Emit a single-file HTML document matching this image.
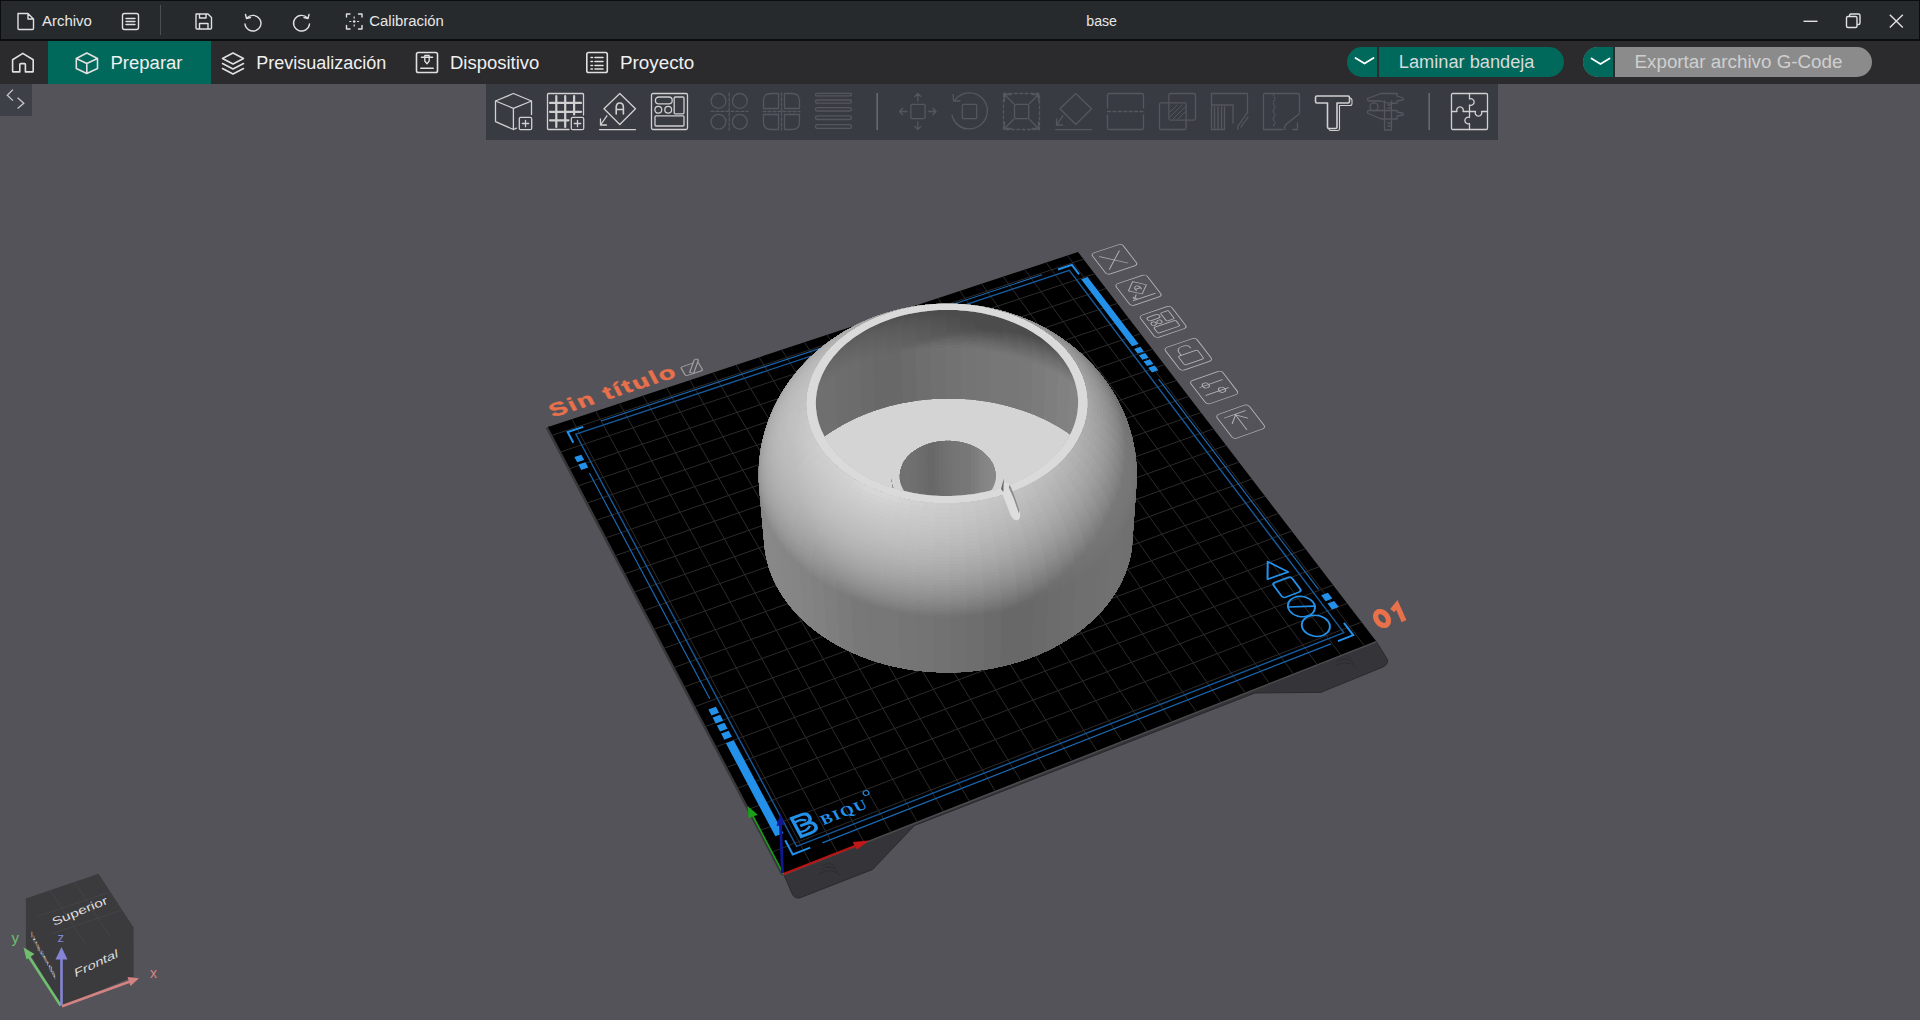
<!DOCTYPE html><html><head><meta charset="utf-8"><style>
html,body{margin:0;padding:0;width:1920px;height:1020px;overflow:hidden;background:#545359;font-family:"Liberation Sans", sans-serif;}
.abs{position:absolute;}
.t{position:absolute;white-space:nowrap;color:#e8e8e8;line-height:1;}
svg text{font-family:"Liberation Sans", sans-serif;}
</style></head><body>
<div class="abs" style="left:0;top:0;width:1920px;height:40px;background:#262a2d;"></div>
<div class="abs" style="left:0;top:39px;width:1920px;height:2px;background:#0c0d0e;"></div>
<div class="abs" style="left:0;top:0;width:1920px;height:1px;background:#0c0d0e;"></div>
<div class="abs" style="left:0;top:0;width:1px;height:40px;background:#0c0d0e;"></div>
<div class="abs" style="left:1919px;top:0;width:1px;height:40px;background:#0c0d0e;"></div>
<div class="abs" style="left:0;top:41px;width:1920px;height:43px;background:#2b2b2d;"></div>
<div class="abs" style="left:48px;top:41px;width:163px;height:43px;background:#00695c;"></div>
<div class="abs" style="left:0;top:84px;width:32px;height:32px;background:#3d4047;"></div>
<div class="abs" style="left:486px;top:84px;width:1012px;height:56px;background:#393b43;"></div>

<div class="abs" style="left:1347px;top:47px;width:217px;height:30px;border-radius:15px;background:#00695c;"></div>
<div class="abs" style="left:1377px;top:47px;width:2px;height:30px;background:#2b2b2d;"></div>
<div class="abs" style="left:1583px;top:47px;width:289px;height:30px;border-radius:15px;background:#8b8b8c;"></div>
<div class="abs" style="left:1583px;top:47px;width:31px;height:30px;border-radius:15px 0 0 15px;background:#00695c;"></div>
<div class="abs" style="left:1613px;top:47px;width:2px;height:30px;background:#2b2b2d;"></div>
<svg class="abs" style="left:0;top:0" width="1920" height="1020" viewBox="0 0 1920 1020">
<text x="42" y="26.3" font-size="15.5" fill="#e6e6e6" textLength="49.8" lengthAdjust="spacingAndGlyphs">Archivo</text>
<text x="369.3" y="26.3" font-size="15.5" fill="#e6e6e6" textLength="74.5" lengthAdjust="spacingAndGlyphs">Calibración</text>
<text x="1086.3" y="26.3" font-size="15.5" fill="#e6e6e6" textLength="30.7" lengthAdjust="spacingAndGlyphs">base</text>
<text x="110.5" y="68.8" font-size="18" fill="#f0f0f0" textLength="72.0" lengthAdjust="spacingAndGlyphs">Preparar</text>
<text x="256.3" y="68.8" font-size="18" fill="#f0f0f0" textLength="130.0" lengthAdjust="spacingAndGlyphs">Previsualización</text>
<text x="450" y="68.8" font-size="18" fill="#f0f0f0" textLength="89.3" lengthAdjust="spacingAndGlyphs">Dispositivo</text>
<text x="620" y="68.8" font-size="18" fill="#f0f0f0" textLength="74.3" lengthAdjust="spacingAndGlyphs">Proyecto</text>
<text x="1398.8" y="68.2" font-size="18" fill="#d5dbdb" textLength="135.7" lengthAdjust="spacingAndGlyphs">Laminar bandeja</text>
<text x="1634.5" y="67.8" font-size="18" fill="#cfcfcf" textLength="208.0" lengthAdjust="spacingAndGlyphs">Exportar archivo G-Code</text>
<g fill="none" stroke="#e0e0e0" stroke-width="1.4" stroke-linejoin="round" stroke-linecap="round">
<path d="M18,13.5 L28,13.5 L33.5,19 L33.5,28.5 Q33.5,29.5 32.5,29.5 L19,29.5 Q18,29.5 18,28.5 Z M28,13.5 L28,19 L33.5,19"/>
<rect x="122.5" y="13.5" width="16" height="16" rx="2"/><path d="M126,18.5 H135 M126,21.5 H135 M126,24.5 H135"/>
<path d="M196,14 H208 L211.5,17.5 V28 Q211.5,29 210.5,29 H197 Q196,29 196,28 V15 Q196,14 197,14 Z M199.5,14 V18 H206 V14 M199.5,29 V23.5 H208 V29"/>
<path d="M247,18 A8,7.8 0 1 1 245,24" /><path d="M245.5,14.5 L246.5,18.5 L250.5,17.5"/>
<path d="M307.5,18 A8,7.8 0 1 0 309.5,24" /><path d="M309,14.5 L308,18.5 L304,17.5"/>
<path d="M346.5,17 V14 H350 M358.5,14 H362 V17 M362,25.5 V29 H358.5 M350,29 H346.5 V25.5"/>
</g>
<circle cx="354.2" cy="21.5" r="1.3" fill="#e0e0e0"/><path d="M354.2,16.5 V18.5 M354.2,24.5 V26.5 M349.3,21.5 H351.3 M357.1,21.5 H359.1" stroke="#e0e0e0" stroke-width="1.2"/>
<rect x="160" y="5" width="1" height="30" fill="#4a4e52"/>
<g fill="none" stroke="#e0e0e0" stroke-width="1.4">
<path d="M1803.5,21.3 H1817.5"/>
<rect x="1846.5" y="16.5" width="10.5" height="11" rx="1.5"/><path d="M1849.5,16.5 V15.5 Q1849.5,14 1851,14 H1858.5 Q1860,14 1860,15.5 V23 Q1860,24.5 1858.5,24.5 H1857"/>
<path d="M1889.8,14.8 L1902.8,27.5 M1902.8,14.8 L1889.8,27.5"/>
</g>
<g fill="none" stroke="#e0e0e0" stroke-width="1.6" stroke-linejoin="round" stroke-linecap="round">
<path d="M12.6,59.8 L22.8,53.4 L33.2,59.8 V71.2 Q33.2,71.9 32.5,71.9 H25.4 V64.5 Q25.4,63.6 24.5,63.6 H20.7 Q19.8,63.6 19.8,64.5 V71.9 H13.3 Q12.6,71.9 12.6,71.2 Z"/>
<path d="M86.8,53 L97.5,58.5 V68.5 L86.8,73.5 L76.3,68.5 V58.5 Z M76.3,58.5 L86.8,63.5 L97.5,58.5 M86.8,63.5 V73.5"/>
<path d="M233,53 L243.5,58.5 L233,64 L222.5,58.5 Z M222.5,63.5 L233,69 L243.5,63.5 M222.5,68.5 L233,74 L243.5,68.5"/>
<rect x="416.5" y="52.5" width="21" height="20" rx="1.8"/><path d="M420.8,68.2 H433.2"/><path d="M421.5,57.2 H432.5"/><path d="M424.8,55.5 H429.2 V61 L427,63.8 L424.8,61 Z" stroke-width="1.3"/>
<rect x="586.8" y="52.5" width="20.5" height="20" rx="1.8"/><path d="M591,57.5 H592.5 M595,57.5 H603 M591,61.5 H592.5 M595,61.5 H603 M591,65.5 H592.5 M595,65.5 H603 M591,69 H592.5 M595,69 H603"/>
</g>
<path d="M1355.5,58 L1364.5,63.5 L1373.5,58" fill="none" stroke="#ffffff" stroke-width="1.8" stroke-linecap="round" stroke-linejoin="round"/>
<path d="M1591.5,58.5 L1600.5,64 L1609.5,58.5" fill="none" stroke="#ffffff" stroke-width="1.8" stroke-linecap="round" stroke-linejoin="round"/>
<path d="M12.9,89.6 L7.3,95.2 L12.9,100.6 M17.6,97.8 L23.8,103.3 L17.6,108.6" fill="none" stroke="#c8c8c8" stroke-width="1.3"/>
<path d="M548,427 L551,433 L783.5,874 L792.5,894.5 Q795,899 800,897.8 L872.5,869.5 L914.5,825.5 L1255,693 L1321,692.3 L1383,667 Q1390,663 1386.5,658 L1376,641 Z" fill="#353438" stroke="#2a2a2d" stroke-width="1"/>
<g fill="none" stroke="#2b2b2e" stroke-width="0.9"><path d="M1338,658 Q1346,652 1352,660 M1336,662 Q1346,655 1354,664 M1335,666 Q1346,659 1356,667 M1342,660 Q1346,657 1349,661"/><path d="M822,866 Q830,860 836,868 M820,870 Q830,863 838,872 M819,874 Q830,867 840,875 M826,868 Q830,865 833,869"/></g>
<path d="M548.00,427.00 L783.50,874.00" fill="none" stroke="#38383b" stroke-width="5"/>
<path d="M783.50,874.00 L1376.00,641.00" fill="none" stroke="#4b4b4f" stroke-width="3"/>
<path d="M783.50,874.00 L1376.00,641.00 L1078.00,252.00 L548.00,427.00 Z" fill="#000"/>
<path d="M810.56,863.36 L571.97,419.08 M771.94,852.07 L1361.51,622.09 M837.44,852.79 L595.82,411.21 M760.54,830.43 L1347.21,603.42 M864.15,842.29 L619.52,403.38 M749.30,809.08 L1333.09,584.98 M890.68,831.85 L643.10,395.60 M738.20,788.02 L1319.14,566.77 M917.05,821.48 L666.55,387.86 M727.25,767.24 L1305.36,548.79 M943.25,811.18 L689.86,380.16 M716.45,746.73 L1291.75,531.03 M969.28,800.94 L713.05,372.50 M705.78,726.49 L1278.31,513.48 M995.14,790.77 L736.11,364.89 M695.26,706.51 L1265.03,496.14 M1020.84,780.67 L759.04,357.32 M684.87,686.79 L1251.91,479.02 M1046.38,770.62 L781.85,349.78 M674.61,667.32 L1238.95,462.10 M1071.76,760.64 L804.54,342.29 M664.49,648.10 L1226.14,445.38 M1096.98,750.73 L827.10,334.85 M654.49,629.12 L1213.48,428.85 M1122.04,740.87 L849.54,327.44 M644.62,610.39 L1200.97,412.53 M1146.94,731.08 L871.85,320.07 M634.87,591.88 L1188.61,396.39 M1171.69,721.35 L894.05,312.74 M625.24,573.61 L1176.39,380.44 M1196.28,711.67 L916.13,305.45 M615.73,555.56 L1164.32,364.68 M1220.73,702.06 L938.09,298.20 M606.34,537.74 L1152.38,349.09 M1245.02,692.51 L959.93,290.99 M597.07,520.13 L1140.58,333.68 M1269.16,683.01 L981.65,283.81 M587.90,502.74 L1128.91,318.45 M1293.16,673.58 L1003.26,276.68 M578.85,485.55 L1117.37,303.39 M1317.01,664.20 L1024.76,269.58 M569.90,468.57 L1105.96,288.50 M1340.71,654.88 L1046.14,262.52 M561.06,451.79 L1094.69,273.78 M1364.27,645.61 L1067.41,255.50 M552.33,435.22 L1083.53,259.22" stroke="#2b2b2b" stroke-width="1" fill="none"/>
<path d="M796.57,846.39 L1343.80,632.68 L1069.33,270.30 L575.85,434.20 Z" fill="none" stroke="#165a9b" stroke-width="1.4"/>
<path d="M822.29,842.90 L1330.92,643.86 M601.15,420.97 L1042.00,274.81 M709.78,698.78 L589.43,472.96 M1318.50,589.40 L1158.63,379.03" fill="none" stroke="#1a6cb8" stroke-width="1.15"/>
<path d="M810.23,847.62 L792.75,854.46 L785.23,840.34 M1337.98,641.09 L1353.25,635.12 L1343.92,622.85 M1079.10,274.38 L1071.89,264.89 L1058.04,269.49 M573.36,442.81 L567.64,432.08 L583.23,426.91" fill="none" stroke="#2391ea" stroke-width="2"/>
<path d="M775.33,836.37 L783.38,833.24 L733.76,740.24 L725.90,743.18 Z M1132.11,346.30 L1138.64,344.06 L1087.57,277.07 L1081.17,279.21 Z" fill="#2391ea"/>
<path d="M724.33,739.63 L731.92,736.79 L728.69,730.73 L721.11,733.56 Z M1137.65,353.59 L1143.97,351.41 L1140.43,346.76 L1134.11,348.94 Z M720.04,731.54 L727.61,728.71 L724.39,722.68 L716.83,725.50 Z M1142.38,359.82 L1148.71,357.63 L1145.15,352.96 L1138.83,355.15 Z M715.76,723.49 L723.32,720.68 L720.12,714.68 L712.58,717.48 Z M1147.14,366.09 L1153.48,363.88 L1149.90,359.19 L1143.57,361.39 Z M711.52,715.49 L719.06,712.69 L715.88,706.72 L708.34,709.51 Z M1151.91,372.38 L1158.27,370.16 L1154.67,365.45 L1148.33,367.66 Z M581.22,469.93 L588.27,467.56 L585.40,462.18 L578.36,464.54 Z M1325.66,601.19 L1332.39,598.59 L1327.89,592.68 L1321.16,595.27 Z M577.20,462.35 L584.23,459.99 L581.37,454.64 L574.35,456.99 Z M1332.00,609.55 L1338.76,606.93 L1334.23,600.99 L1327.49,603.60 Z" fill="#2391ea"/>
<g transform="matrix(2.3260,-0.8883,1.3758,1.8350,1286.96,587.27)" fill="none" stroke="#2391ea" stroke-width="0.75" stroke-linejoin="round">
<path d="M0,-14 L4.2,-6.3 L-4.5,-6.5 Z"/>
<rect x="-4" y="-4" width="8" height="8" rx="1.2"/>
<ellipse cx="0" cy="10.5" rx="5" ry="5"/><path d="M-4.4,8.6 L4.4,12.4"/>
<ellipse cx="0" cy="21" rx="5.2" ry="5.2"/>
</g>
<g transform="matrix(2.6668,-1.0354,1.1592,2.1415,803.36,824.71)" fill="none" stroke="#2391ea" stroke-width="1.2">
<path d="M-2.6,-4.2 H1 Q3.2,-4.2 3.2,-2 Q3.2,0 1,0 Q3.6,0 3.6,2.2 Q3.6,4.3 1,4.3 H-2.6 Z M-1.2,0 H1.2"/><path d="M-2.6,-2 Q0,-3 1.6,-1.2 M-2.6,2.2 Q0,3.2 1.8,1.4" stroke-width="0.9"/>
</g>
<g transform="matrix(2.6608,-1.0357,1.1730,2.1422,823.60,825.14)"><text x="0" y="0" font-size="6" font-weight="bold" fill="#2391ea" textLength="16.8" style="font-family:&quot;Liberation Serif&quot;,serif">BIQU</text><circle cx="18.6" cy="-6" r="1" fill="none" stroke="#2391ea" stroke-width="0.4"/></g>
<path d="M783.50,874.00 L857.49,844.90" stroke="#b81414" stroke-width="2.2"/>
<path d="M783.50,874.00 L752.10,814.39" stroke="#17a017" stroke-width="1.6"/>
<path d="M782.5,873 L780.4,822" stroke="#101890" stroke-width="2.8"/>
<path d="M780.5,813 L776.5,826 L784.5,825 Z" fill="#101890"/>
<path d="M868.94,840.40 L852.66,842.05 L856.99,849.87 Z" fill="#c01818"/>
<path d="M747.62,805.90 L757.76,814.77 L748.67,818.27 Z" fill="#18a018"/>
<clipPath id="silc"><path d="M766.9,562.1L765.8,557.4L764.9,552.6L764.2,547.8L763.8,543.0L758.7,486.6L758.6,484.8L758.3,479.9L758.3,478.1L758.3,476.3L758.3,471.5L758.3,469.7L758.6,464.9L758.7,463.0L758.9,461.2L759.3,456.5L759.6,454.6L760.3,449.9L760.5,448.1L760.9,446.3L761.8,441.6L762.2,439.8L763.4,435.2L763.8,433.4L765.2,428.8L765.7,427.1L766.3,425.3L767.9,420.8L768.5,419.1L770.3,414.6L771.0,412.9L772.9,408.6L773.7,406.9L774.5,405.3L776.7,401.0L777.5,399.4L779.9,395.2L780.8,393.6L783.3,389.5L784.3,388.0L786.9,384.0L788.0,382.5L790.8,378.6L791.9,377.2L794.9,373.4L796.0,372.0L799.1,368.3L800.3,367.0L803.6,363.4L804.8,362.1L808.2,358.7L809.4,357.5L813.0,354.1L814.3,353.0L817.9,349.8L819.2,348.7L823.0,345.6L826.9,342.6L828.2,341.7L832.1,338.8L833.5,337.9L837.5,335.2L841.7,332.6L843.0,331.8L847.2,329.3L848.5,328.6L852.8,326.3L857.2,324.0L858.5,323.4L862.9,321.3L867.4,319.4L872.0,317.5L873.1,317.0L877.8,315.3L882.5,313.7L883.5,313.4L888.2,311.9L892.9,310.5L897.8,309.3L902.6,308.1L903.4,308.0L908.2,307.0L913.1,306.1L918.0,305.3L923.0,304.7L927.9,304.1L932.9,303.7L937.9,303.4L943.0,303.3L948.0,303.2L953.0,303.3L958.0,303.5L963.0,303.8L968.0,304.2L973.0,304.7L977.9,305.4L982.8,306.2L987.7,307.1L988.4,307.2L993.3,308.3L998.2,309.4L1003.0,310.7L1007.7,312.1L1008.7,312.4L1013.5,313.9L1018.2,315.5L1022.8,317.3L1023.9,317.7L1028.5,319.6L1033.0,321.6L1034.2,322.2L1038.7,324.3L1043.1,326.6L1044.3,327.2L1048.7,329.6L1052.9,332.1L1054.2,332.9L1058.3,335.6L1059.7,336.4L1063.7,339.2L1067.7,342.1L1069.0,343.0L1072.9,346.0L1074.2,347.1L1077.9,350.2L1079.2,351.3L1082.8,354.6L1084.1,355.8L1087.6,359.2L1088.8,360.4L1092.2,363.9L1095.4,367.5L1096.6,368.8L1099.7,372.5L1100.9,373.9L1102.0,375.3L1104.9,379.2L1106.0,380.6L1108.8,384.6L1109.8,386.1L1112.4,390.1L1113.4,391.7L1115.8,395.8L1116.7,397.4L1119.0,401.6L1119.8,403.2L1121.9,407.5L1122.7,409.2L1123.4,410.9L1125.3,415.3L1126.0,417.0L1127.7,421.5L1128.3,423.2L1129.8,427.7L1130.4,429.5L1130.9,431.3L1132.1,435.9L1132.6,437.6L1133.6,442.3L1134.0,444.1L1134.3,445.9L1135.2,450.6L1135.5,452.4L1136.1,457.2L1136.3,459.0L1136.7,463.8L1136.8,465.6L1136.9,467.4L1137.1,472.2L1137.1,474.0L1137.0,478.9L1137.0,480.7L1136.9,482.5L1136.6,487.3L1132.6,543.8L1132.1,548.6L1131.4,553.4L1130.4,558.2L1129.2,562.9L1127.7,567.7L1126.1,572.4L1124.2,577.0L1122.1,581.6L1119.7,586.2L1117.2,590.7L1114.4,595.2L1111.4,599.5L1108.2,603.8L1104.8,608.1L1101.2,612.2L1097.3,616.2L1093.3,620.2L1089.1,624.0L1084.7,627.7L1080.1,631.4L1075.4,634.8L1070.4,638.2L1065.3,641.4L1060.1,644.5L1054.7,647.5L1049.1,650.3L1043.4,653.0L1037.6,655.5L1031.6,657.8L1025.6,660.0L1019.4,662.1L1013.1,663.9L1006.8,665.6L1000.3,667.1L993.8,668.5L987.2,669.6L980.6,670.6L973.9,671.4L967.2,672.1L960.5,672.5L953.7,672.8L947.0,672.8L940.2,672.7L933.5,672.4L926.7,672.0L920.0,671.3L913.4,670.5L906.8,669.4L900.2,668.2L893.7,666.9L887.3,665.3L881.0,663.6L874.8,661.7L868.6,659.6L862.6,657.4L856.7,655.0L851.0,652.5L845.3,649.8L839.8,647.0L834.5,644.0L829.3,640.9L824.2,637.6L819.4,634.2L814.7,630.7L810.1,627.1L805.8,623.4L801.7,619.5L797.7,615.5L794.0,611.5L790.4,607.3L787.1,603.1L784.0,598.8L781.1,594.4L778.4,590.0L775.9,585.4L773.7,580.9L771.6,576.2L769.8,571.6L768.2,566.9Z"/></clipPath><g clip-path="url(#silc)" shape-rendering="crispEdges">
<path d="M766.9,562.1L765.8,557.4L764.9,552.6L764.2,547.8L763.8,543.0L758.7,486.6L758.6,484.8L758.3,479.9L758.3,478.1L758.3,476.3L758.3,471.5L758.3,469.7L758.6,464.9L758.7,463.0L758.9,461.2L759.3,456.5L759.6,454.6L760.3,449.9L760.5,448.1L760.9,446.3L761.8,441.6L762.2,439.8L763.4,435.2L763.8,433.4L765.2,428.8L765.7,427.1L766.3,425.3L767.9,420.8L768.5,419.1L770.3,414.6L771.0,412.9L772.9,408.6L773.7,406.9L774.5,405.3L776.7,401.0L777.5,399.4L779.9,395.2L780.8,393.6L783.3,389.5L784.3,388.0L786.9,384.0L788.0,382.5L790.8,378.6L791.9,377.2L794.9,373.4L796.0,372.0L799.1,368.3L800.3,367.0L803.6,363.4L804.8,362.1L808.2,358.7L809.4,357.5L813.0,354.1L814.3,353.0L817.9,349.8L819.2,348.7L823.0,345.6L826.9,342.6L828.2,341.7L832.1,338.8L833.5,337.9L837.5,335.2L841.7,332.6L843.0,331.8L847.2,329.3L848.5,328.6L852.8,326.3L857.2,324.0L858.5,323.4L862.9,321.3L867.4,319.4L872.0,317.5L873.1,317.0L877.8,315.3L882.5,313.7L883.5,313.4L888.2,311.9L892.9,310.5L897.8,309.3L902.6,308.1L903.4,308.0L908.2,307.0L913.1,306.1L918.0,305.3L923.0,304.7L927.9,304.1L932.9,303.7L937.9,303.4L943.0,303.3L948.0,303.2L953.0,303.3L958.0,303.5L963.0,303.8L968.0,304.2L973.0,304.7L977.9,305.4L982.8,306.2L987.7,307.1L988.4,307.2L993.3,308.3L998.2,309.4L1003.0,310.7L1007.7,312.1L1008.7,312.4L1013.5,313.9L1018.2,315.5L1022.8,317.3L1023.9,317.7L1028.5,319.6L1033.0,321.6L1034.2,322.2L1038.7,324.3L1043.1,326.6L1044.3,327.2L1048.7,329.6L1052.9,332.1L1054.2,332.9L1058.3,335.6L1059.7,336.4L1063.7,339.2L1067.7,342.1L1069.0,343.0L1072.9,346.0L1074.2,347.1L1077.9,350.2L1079.2,351.3L1082.8,354.6L1084.1,355.8L1087.6,359.2L1088.8,360.4L1092.2,363.9L1095.4,367.5L1096.6,368.8L1099.7,372.5L1100.9,373.9L1102.0,375.3L1104.9,379.2L1106.0,380.6L1108.8,384.6L1109.8,386.1L1112.4,390.1L1113.4,391.7L1115.8,395.8L1116.7,397.4L1119.0,401.6L1119.8,403.2L1121.9,407.5L1122.7,409.2L1123.4,410.9L1125.3,415.3L1126.0,417.0L1127.7,421.5L1128.3,423.2L1129.8,427.7L1130.4,429.5L1130.9,431.3L1132.1,435.9L1132.6,437.6L1133.6,442.3L1134.0,444.1L1134.3,445.9L1135.2,450.6L1135.5,452.4L1136.1,457.2L1136.3,459.0L1136.7,463.8L1136.8,465.6L1136.9,467.4L1137.1,472.2L1137.1,474.0L1137.0,478.9L1137.0,480.7L1136.9,482.5L1136.6,487.3L1132.6,543.8L1132.1,548.6L1131.4,553.4L1130.4,558.2L1129.2,562.9L1127.7,567.7L1126.1,572.4L1124.2,577.0L1122.1,581.6L1119.7,586.2L1117.2,590.7L1114.4,595.2L1111.4,599.5L1108.2,603.8L1104.8,608.1L1101.2,612.2L1097.3,616.2L1093.3,620.2L1089.1,624.0L1084.7,627.7L1080.1,631.4L1075.4,634.8L1070.4,638.2L1065.3,641.4L1060.1,644.5L1054.7,647.5L1049.1,650.3L1043.4,653.0L1037.6,655.5L1031.6,657.8L1025.6,660.0L1019.4,662.1L1013.1,663.9L1006.8,665.6L1000.3,667.1L993.8,668.5L987.2,669.6L980.6,670.6L973.9,671.4L967.2,672.1L960.5,672.5L953.7,672.8L947.0,672.8L940.2,672.7L933.5,672.4L926.7,672.0L920.0,671.3L913.4,670.5L906.8,669.4L900.2,668.2L893.7,666.9L887.3,665.3L881.0,663.6L874.8,661.7L868.6,659.6L862.6,657.4L856.7,655.0L851.0,652.5L845.3,649.8L839.8,647.0L834.5,644.0L829.3,640.9L824.2,637.6L819.4,634.2L814.7,630.7L810.1,627.1L805.8,623.4L801.7,619.5L797.7,615.5L794.0,611.5L790.4,607.3L787.1,603.1L784.0,598.8L781.1,594.4L778.4,590.0L775.9,585.4L773.7,580.9L771.6,576.2L769.8,571.6L768.2,566.9Z" fill="#a0a0a0"/>
<clipPath id="openc"><path d="M1063.5,359.8L1061.3,357.0L1059.1,354.3L1056.7,351.6L1054.1,349.0L1051.5,346.4L1048.7,343.9L1045.8,341.5L1042.8,339.1L1039.7,336.8L1036.5,334.7L1033.2,332.5L1029.8,330.5L1026.3,328.6L1022.7,326.7L1019.0,324.9L1015.2,323.3L1011.4,321.7L1007.5,320.2L1003.5,318.8L999.5,317.5L995.4,316.3L991.2,315.2L987.0,314.2L982.8,313.3L978.5,312.5L974.2,311.8L969.8,311.2L965.5,310.7L961.1,310.4L956.7,310.1L952.2,309.9L947.8,309.9L943.4,309.9L939.0,310.1L934.6,310.3L930.2,310.7L925.8,311.2L921.4,311.7L917.1,312.4L912.8,313.2L908.5,314.1L904.3,315.1L900.2,316.1L896.0,317.3L892.0,318.6L888.0,320.0L884.0,321.5L880.2,323.0L876.4,324.7L872.7,326.5L869.0,328.3L865.5,330.2L862.1,332.3L858.7,334.4L855.5,336.6L852.3,338.8L849.3,341.2L846.3,343.6L843.5,346.0L840.8,348.6L838.2,351.2L835.8,353.9L833.5,356.6L831.3,359.4L829.2,362.3L827.3,365.2L825.5,368.2L823.9,371.2L822.4,374.2L821.1,377.3L819.9,380.4L818.8,383.5L817.9,386.7L817.2,389.9L816.6,393.1L816.2,396.3L815.9,399.6L815.8,402.8L815.9,406.1L816.1,409.3L816.5,412.6L817.0,415.8L817.7,419.0L818.5,422.2L819.6,425.4L820.7,428.6L822.1,431.7L823.6,434.8L825.2,437.9L827.0,440.9L829.0,443.9L831.1,446.9L833.3,449.8L835.7,452.6L838.3,455.3L840.9,458.1L843.8,460.7L846.7,463.3L849.8,465.7L853.0,468.2L856.3,470.5L859.8,472.7L863.3,474.9L867.0,477.0L870.8,478.9L874.7,480.8L878.7,482.6L882.7,484.3L886.9,485.9L891.1,487.3L895.4,488.7L899.8,489.9L904.2,491.1L908.7,492.1L913.3,493.0L917.9,493.8L922.5,494.5L927.2,495.0L931.9,495.4L936.6,495.8L941.3,495.9L946.0,496.0L950.8,496.0L955.5,495.8L960.2,495.5L964.9,495.1L969.6,494.6L974.2,493.9L978.8,493.1L983.4,492.2L987.9,491.2L992.4,490.1L996.8,488.9L1001.1,487.5L1005.4,486.1L1009.6,484.5L1013.7,482.9L1017.7,481.1L1021.6,479.2L1025.4,477.3L1029.1,475.2L1032.8,473.1L1036.3,470.8L1039.6,468.5L1042.9,466.1L1046.0,463.6L1049.0,461.1L1051.9,458.5L1054.6,455.8L1057.2,453.0L1059.7,450.2L1062.0,447.3L1064.2,444.4L1066.2,441.4L1068.0,438.4L1069.7,435.3L1071.3,432.2L1072.7,429.1L1073.9,425.9L1075.0,422.7L1075.9,419.5L1076.7,416.3L1077.3,413.0L1077.7,409.8L1078.0,406.5L1078.1,403.3L1078.1,400.0L1077.9,396.8L1077.5,393.6L1077.0,390.3L1076.3,387.2L1075.5,384.0L1074.5,380.8L1073.4,377.7L1072.1,374.6L1070.6,371.6L1069.1,368.6L1067.3,365.6L1065.5,362.7Z"/></clipPath><g clip-path="url(#openc)">
<path d="M1063.5,359.8L1061.3,357.0L1059.1,354.3L1056.7,351.6L1054.1,349.0L1051.5,346.4L1048.7,343.9L1045.8,341.5L1042.8,339.1L1039.7,336.8L1036.5,334.7L1033.2,332.5L1029.8,330.5L1026.3,328.6L1022.7,326.7L1019.0,324.9L1015.2,323.3L1011.4,321.7L1007.5,320.2L1003.5,318.8L999.5,317.5L995.4,316.3L991.2,315.2L987.0,314.2L982.8,313.3L978.5,312.5L974.2,311.8L969.8,311.2L965.5,310.7L961.1,310.4L956.7,310.1L952.2,309.9L947.8,309.9L943.4,309.9L939.0,310.1L934.6,310.3L930.2,310.7L925.8,311.2L921.4,311.7L917.1,312.4L912.8,313.2L908.5,314.1L904.3,315.1L900.2,316.1L896.0,317.3L892.0,318.6L888.0,320.0L884.0,321.5L880.2,323.0L876.4,324.7L872.7,326.5L869.0,328.3L865.5,330.2L862.1,332.3L858.7,334.4L855.5,336.6L852.3,338.8L849.3,341.2L846.3,343.6L843.5,346.0L840.8,348.6L838.2,351.2L835.8,353.9L833.5,356.6L831.3,359.4L829.2,362.3L827.3,365.2L825.5,368.2L823.9,371.2L822.4,374.2L821.1,377.3L819.9,380.4L818.8,383.5L817.9,386.7L817.2,389.9L816.6,393.1L816.2,396.3L815.9,399.6L815.8,402.8L815.9,406.1L816.1,409.3L816.5,412.6L817.0,415.8L817.7,419.0L818.5,422.2L819.6,425.4L820.7,428.6L822.1,431.7L823.6,434.8L825.2,437.9L827.0,440.9L829.0,443.9L831.1,446.9L833.3,449.8L835.7,452.6L838.3,455.3L840.9,458.1L843.8,460.7L846.7,463.3L849.8,465.7L853.0,468.2L856.3,470.5L859.8,472.7L863.3,474.9L867.0,477.0L870.8,478.9L874.7,480.8L878.7,482.6L882.7,484.3L886.9,485.9L891.1,487.3L895.4,488.7L899.8,489.9L904.2,491.1L908.7,492.1L913.3,493.0L917.9,493.8L922.5,494.5L927.2,495.0L931.9,495.4L936.6,495.8L941.3,495.9L946.0,496.0L950.8,496.0L955.5,495.8L960.2,495.5L964.9,495.1L969.6,494.6L974.2,493.9L978.8,493.1L983.4,492.2L987.9,491.2L992.4,490.1L996.8,488.9L1001.1,487.5L1005.4,486.1L1009.6,484.5L1013.7,482.9L1017.7,481.1L1021.6,479.2L1025.4,477.3L1029.1,475.2L1032.8,473.1L1036.3,470.8L1039.6,468.5L1042.9,466.1L1046.0,463.6L1049.0,461.1L1051.9,458.5L1054.6,455.8L1057.2,453.0L1059.7,450.2L1062.0,447.3L1064.2,444.4L1066.2,441.4L1068.0,438.4L1069.7,435.3L1071.3,432.2L1072.7,429.1L1073.9,425.9L1075.0,422.7L1075.9,419.5L1076.7,416.3L1077.3,413.0L1077.7,409.8L1078.0,406.5L1078.1,403.3L1078.1,400.0L1077.9,396.8L1077.5,393.6L1077.0,390.3L1076.3,387.2L1075.5,384.0L1074.5,380.8L1073.4,377.7L1072.1,374.6L1070.6,371.6L1069.1,368.6L1067.3,365.6L1065.5,362.7Z" fill="#d3d3d3"/>
<path d="M961.0,399.2L946.3,398.9L945.8,347.4L960.8,347.7Z" fill="#727272"/>
<path d="M946.3,398.9L931.7,399.5L930.8,348.0L945.8,347.4Z" fill="#707070"/>
<path d="M975.6,400.4L961.0,399.2L960.8,347.7L975.7,348.9Z" fill="#747474"/>
<path d="M931.7,399.5L917.1,401.0L916.0,349.5L930.8,348.0Z" fill="#6e6e6e"/>
<path d="M990.0,402.5L975.6,400.4L975.7,348.9L990.4,351.0Z" fill="#757575"/>
<path d="M917.1,401.0L902.8,403.4L901.3,351.9L916.0,349.5Z" fill="#6b6b6b"/>
<path d="M1004.2,405.5L990.0,402.5L990.4,351.0L1004.9,354.0Z" fill="#777777"/>
<path d="M902.8,403.4L888.7,406.7L887.0,355.2L901.3,351.9Z" fill="#686868"/>
<path d="M1018.0,409.4L1004.2,405.5L1004.9,354.0L1018.9,357.8Z" fill="#777777"/>
<path d="M888.7,406.7L875.1,410.9L873.0,359.4L887.0,355.2Z" fill="#686868"/>
<path d="M1031.3,414.1L1018.0,409.4L1018.9,357.8L1032.5,362.6Z" fill="#787878"/>
<path d="M875.1,410.9L861.9,415.9L859.6,364.4L873.0,359.4Z" fill="#6a6a6a"/>
<path d="M1044.0,419.6L1031.3,414.1L1032.5,362.6L1045.5,368.1Z" fill="#7b7b7b"/>
<path d="M861.9,415.9L849.3,421.7L846.7,370.2L859.6,364.4Z" fill="#6c6c6c"/>
<path d="M1056.1,425.9L1044.0,419.6L1045.5,368.1L1057.9,374.4Z" fill="#7e7e7e"/>
<path d="M849.3,421.7L837.4,428.3L834.6,376.8L846.7,370.2Z" fill="#6d6d6d"/>
<path d="M960.8,347.7L945.8,347.4L945.8,344.9L960.8,345.2Z" fill="#707070"/>
<path d="M945.8,347.4L930.8,348.0L930.8,345.6L945.8,344.9Z" fill="#6e6e6e"/>
<path d="M975.7,348.9L960.8,347.7L960.8,345.2L975.7,346.4Z" fill="#727272"/>
<path d="M930.8,348.0L916.0,349.5L915.9,347.1L930.8,345.6Z" fill="#6c6c6c"/>
<path d="M960.8,345.2L945.8,344.9L945.8,342.6L960.8,342.9Z" fill="#6c6c6c"/>
<path d="M945.8,344.9L930.8,345.6L930.8,343.2L945.8,342.6Z" fill="#6a6a6a"/>
<path d="M990.4,351.0L975.7,348.9L975.7,346.4L990.4,348.6Z" fill="#737373"/>
<path d="M1067.4,433.0L1056.1,425.9L1057.9,374.4L1069.5,381.5Z" fill="#818181"/>
<path d="M916.0,349.5L901.3,351.9L901.3,349.5L915.9,347.1Z" fill="#696969"/>
<path d="M837.4,428.3L826.2,435.6L823.2,384.1L834.6,376.8Z" fill="#6f6f6f"/>
<path d="M975.7,346.4L960.8,345.2L960.8,342.9L975.7,344.1Z" fill="#6e6e6e"/>
<path d="M930.8,345.6L915.9,347.1L915.9,344.7L930.8,343.2Z" fill="#676767"/>
<path d="M960.8,342.9L945.8,342.6L945.8,340.3L960.7,340.6Z" fill="#686868"/>
<path d="M990.4,348.6L975.7,346.4L975.7,344.1L990.4,346.2Z" fill="#6f6f6f"/>
<path d="M945.8,342.6L930.8,343.2L930.8,340.9L945.8,340.3Z" fill="#666666"/>
<path d="M1004.9,354.0L990.4,351.0L990.4,348.6L1004.9,351.6Z" fill="#747474"/>
<path d="M915.9,347.1L901.3,349.5L901.2,347.1L915.9,344.7Z" fill="#656565"/>
<path d="M901.3,351.9L887.0,355.2L886.9,352.8L901.3,349.5Z" fill="#666666"/>
<path d="M975.7,344.1L960.8,342.9L960.7,340.6L975.7,341.8Z" fill="#6a6a6a"/>
<path d="M930.8,343.2L915.9,344.7L915.9,342.4L930.8,340.9Z" fill="#636363"/>
<path d="M990.4,346.2L975.7,344.1L975.7,341.8L990.4,343.9Z" fill="#6b6b6b"/>
<path d="M1004.9,351.6L990.4,348.6L990.4,346.2L1004.9,349.2Z" fill="#707070"/>
<path d="M960.7,340.6L945.8,340.3L945.7,338.1L960.7,338.4Z" fill="#646464"/>
<path d="M945.8,340.3L930.8,340.9L930.8,338.7L945.7,338.1Z" fill="#616161"/>
<path d="M915.9,344.7L901.2,347.1L901.2,344.9L915.9,342.4Z" fill="#626262"/>
<path d="M901.3,349.5L886.9,352.8L886.9,350.4L901.2,347.1Z" fill="#656565"/>
<path d="M975.7,341.8L960.7,340.6L960.7,338.4L975.6,339.6Z" fill="#656565"/>
<path d="M1018.9,357.8L1004.9,354.0L1004.9,351.6L1019.0,355.4Z" fill="#757575"/>
<path d="M930.8,340.9L915.9,342.4L915.9,340.2L930.8,338.7Z" fill="#5f5f5f"/>
<path d="M887.0,355.2L873.0,359.4L872.9,357.0L886.9,352.8Z" fill="#686868"/>
<path d="M1078.0,440.8L1067.4,433.0L1069.5,381.5L1080.2,389.3Z" fill="#838383"/>
<path d="M1004.9,349.2L990.4,346.2L990.4,343.9L1004.8,346.9Z" fill="#6c6c6c"/>
<path d="M990.4,343.9L975.7,341.8L975.6,339.6L990.3,341.7Z" fill="#676767"/>
<path d="M960.7,338.4L945.7,338.1L945.7,336.0L960.7,336.2Z" fill="#5f5f5f"/>
<path d="M945.7,338.1L930.8,338.7L930.8,336.6L945.7,336.0Z" fill="#5d5d5d"/>
<path d="M915.9,342.4L901.2,344.9L901.3,342.6L915.9,340.2Z" fill="#616161"/>
<path d="M901.2,347.1L886.9,350.4L886.9,348.1L901.2,344.9Z" fill="#646464"/>
<path d="M826.2,435.6L815.9,443.6L812.6,392.2L823.2,384.1Z" fill="#6f6f6f"/>
<path d="M1019.0,355.4L1004.9,351.6L1004.9,349.2L1018.9,353.1Z" fill="#717171"/>
<path d="M975.6,339.6L960.7,338.4L960.7,336.2L975.5,337.4Z" fill="#616161"/>
<path d="M930.8,338.7L915.9,340.2L915.9,338.1L930.8,336.6Z" fill="#5d5d5d"/>
<path d="M886.9,352.8L872.9,357.0L872.9,354.6L886.9,350.4Z" fill="#676767"/>
<path d="M1004.8,346.9L990.4,343.9L990.3,341.7L1004.7,344.7Z" fill="#686868"/>
<path d="M1032.5,362.6L1018.9,357.8L1019.0,355.4L1032.5,360.1Z" fill="#767676"/>
<path d="M990.3,341.7L975.6,339.6L975.5,337.4L990.2,339.5Z" fill="#636363"/>
<path d="M901.2,344.9L886.9,348.1L886.9,345.9L901.3,342.6Z" fill="#636363"/>
<path d="M915.9,340.2L901.3,342.6L901.3,340.5L915.9,338.1Z" fill="#606060"/>
<path d="M960.7,336.2L945.7,336.0L945.7,333.9L960.6,334.2Z" fill="#5b5b5b"/>
<path d="M945.7,336.0L930.8,336.6L930.8,334.5L945.7,333.9Z" fill="#5a5a5a"/>
<path d="M873.0,359.4L859.6,364.4L859.5,362.0L872.9,357.0Z" fill="#6a6a6a"/>
<path d="M1018.9,353.1L1004.9,349.2L1004.8,346.9L1018.9,350.8Z" fill="#6d6d6d"/>
<path d="M886.9,350.4L872.9,354.6L872.9,352.3L886.9,348.1Z" fill="#666666"/>
<path d="M975.5,337.4L960.7,336.2L960.6,334.2L975.5,335.4Z" fill="#5d5d5d"/>
<path d="M930.8,336.6L915.9,338.1L916.0,336.0L930.8,334.5Z" fill="#5c5c5c"/>
<path d="M1032.5,360.1L1019.0,355.4L1018.9,353.1L1032.5,357.8Z" fill="#737373"/>
<path d="M1004.7,344.7L990.3,341.7L990.2,339.5L1004.6,342.5Z" fill="#646464"/>
<path d="M990.2,339.5L975.5,337.4L975.5,335.4L990.1,337.5Z" fill="#5e5e5e"/>
<path d="M872.9,357.0L859.5,362.0L859.5,359.6L872.9,354.6Z" fill="#696969"/>
<path d="M901.3,342.6L886.9,345.9L887.0,343.8L901.3,340.5Z" fill="#626262"/>
<path d="M915.9,338.1L901.3,340.5L901.4,338.4L916.0,336.0Z" fill="#5f5f5f"/>
<path d="M960.6,334.2L945.7,333.9L945.7,331.9L960.6,332.2Z" fill="#575757"/>
<path d="M945.7,333.9L930.8,334.5L930.8,332.5L945.7,331.9Z" fill="#595959"/>
<path d="M1018.9,350.8L1004.8,346.9L1004.7,344.7L1018.8,348.5Z" fill="#696969"/>
<path d="M886.9,348.1L872.9,352.3L873.0,350.1L886.9,345.9Z" fill="#656565"/>
<path d="M975.5,335.4L960.6,334.2L960.6,332.2L975.4,333.4Z" fill="#595959"/>
<path d="M930.8,334.5L916.0,336.0L916.0,334.0L930.8,332.5Z" fill="#5c5c5c"/>
<path d="M1087.6,449.2L1078.0,440.8L1080.2,389.3L1090.1,397.8Z" fill="#858585"/>
<path d="M1032.5,357.8L1018.9,353.1L1018.9,350.8L1032.5,355.5Z" fill="#6f6f6f"/>
<path d="M1045.5,368.1L1032.5,362.6L1032.5,360.1L1045.6,365.7Z" fill="#797979"/>
<path d="M815.9,443.6L806.5,452.3L803.0,400.9L812.6,392.2Z" fill="#707070"/>
<path d="M872.9,354.6L859.5,359.6L859.5,357.3L872.9,352.3Z" fill="#686868"/>
<path d="M1004.6,342.5L990.2,339.5L990.1,337.5L1004.5,340.4Z" fill="#606060"/>
<path d="M859.6,364.4L846.7,370.2L846.6,367.8L859.5,362.0Z" fill="#6c6c6c"/>
<path d="M901.3,340.5L887.0,343.8L887.1,341.7L901.4,338.4Z" fill="#616161"/>
<path d="M990.1,337.5L975.5,335.4L975.4,333.4L990.0,335.4Z" fill="#5a5a5a"/>
<path d="M916.0,336.0L901.4,338.4L901.5,336.4L916.0,334.0Z" fill="#5e5e5e"/>
<path d="M1018.8,348.5L1004.7,344.7L1004.6,342.5L1018.7,346.4Z" fill="#656565"/>
<path d="M960.6,332.2L945.7,331.9L945.7,329.9L960.5,330.2Z" fill="#555555"/>
<path d="M945.7,331.9L930.8,332.5L930.8,330.5L945.7,329.9Z" fill="#585858"/>
<path d="M886.9,345.9L873.0,350.1L873.1,347.9L887.0,343.8Z" fill="#646464"/>
<path d="M975.4,333.4L960.6,332.2L960.5,330.2L975.2,331.4Z" fill="#545454"/>
<path d="M930.8,332.5L916.0,334.0L916.1,332.0L930.8,330.5Z" fill="#5b5b5b"/>
<path d="M1045.6,365.7L1032.5,360.1L1032.5,357.8L1045.6,363.3Z" fill="#767676"/>
<path d="M1032.5,355.5L1018.9,350.8L1018.8,348.5L1032.4,353.2Z" fill="#6c6c6c"/>
<path d="M859.5,362.0L846.6,367.8L846.6,365.4L859.5,359.6Z" fill="#6b6b6b"/>
<path d="M872.9,352.3L859.5,357.3L859.5,355.1L873.0,350.1Z" fill="#676767"/>
<path d="M1004.5,340.4L990.1,337.5L990.0,335.4L1004.3,338.4Z" fill="#5b5b5b"/>
<path d="M901.4,338.4L887.1,341.7L887.2,339.6L901.5,336.4Z" fill="#606060"/>
<path d="M990.0,335.4L975.4,333.4L975.2,331.4L989.8,333.5Z" fill="#565656"/>
<path d="M916.0,334.0L901.5,336.4L901.6,334.4L916.1,332.0Z" fill="#5d5d5d"/>
<path d="M1018.7,346.4L1004.6,342.5L1004.5,340.4L1018.5,344.3Z" fill="#626262"/>
<path d="M960.5,330.2L945.7,329.9L945.6,328.1L960.4,328.3Z" fill="#545454"/>
<path d="M945.7,329.9L930.8,330.5L930.9,328.7L945.6,328.1Z" fill="#575757"/>
<path d="M887.0,343.8L873.1,347.9L873.2,345.8L887.1,341.7Z" fill="#636363"/>
<path d="M975.2,331.4L960.5,330.2L960.4,328.3L975.1,329.5Z" fill="#525252"/>
<path d="M930.8,330.5L916.1,332.0L916.2,330.1L930.9,328.7Z" fill="#5a5a5a"/>
<path d="M1045.6,363.3L1032.5,357.8L1032.5,355.5L1045.5,361.0Z" fill="#737373"/>
<path d="M1032.4,353.2L1018.8,348.5L1018.7,346.4L1032.2,351.1Z" fill="#696969"/>
<path d="M859.5,359.6L846.6,365.4L846.6,363.1L859.5,357.3Z" fill="#6a6a6a"/>
<path d="M873.0,350.1L859.5,355.1L859.7,352.9L873.1,347.9Z" fill="#666666"/>
<path d="M1057.9,374.4L1045.5,368.1L1045.6,365.7L1057.9,372.0Z" fill="#7c7c7c"/>
<path d="M1004.3,338.4L990.0,335.4L989.8,333.5L1004.1,336.4Z" fill="#575757"/>
<path d="M846.7,370.2L834.6,376.8L834.5,374.4L846.6,367.8Z" fill="#6d6d6d"/>
<path d="M901.5,336.4L887.2,339.6L887.4,337.6L901.6,334.4Z" fill="#5f5f5f"/>
<path d="M989.8,333.5L975.2,331.4L975.1,329.5L989.6,331.6Z" fill="#525252"/>
<path d="M1018.5,344.3L1004.5,340.4L1004.3,338.4L1018.3,342.2Z" fill="#5e5e5e"/>
<path d="M916.1,332.0L901.6,334.4L901.8,332.5L916.2,330.1Z" fill="#5c5c5c"/>
<path d="M887.1,341.7L873.2,345.8L873.4,343.7L887.2,339.6Z" fill="#626262"/>
<path d="M960.4,328.3L945.6,328.1L945.6,326.3L960.3,326.6Z" fill="#535353"/>
<path d="M945.6,328.1L930.9,328.7L930.9,326.9L945.6,326.3Z" fill="#565656"/>
<path d="M1045.5,361.0L1032.5,355.5L1032.4,353.2L1045.4,358.8Z" fill="#6f6f6f"/>
<path d="M975.1,329.5L960.4,328.3L960.3,326.6L974.9,327.7Z" fill="#515151"/>
<path d="M1096.2,458.3L1087.6,449.2L1090.1,397.8L1098.9,406.9Z" fill="#868686"/>
<path d="M1032.2,351.1L1018.7,346.4L1018.5,344.3L1032.0,348.9Z" fill="#656565"/>
<path d="M930.9,328.7L916.2,330.1L916.4,328.3L930.9,326.9Z" fill="#595959"/>
<path d="M859.5,357.3L846.6,363.1L846.7,360.9L859.5,355.1Z" fill="#696969"/>
<path d="M1057.9,372.0L1045.6,365.7L1045.6,363.3L1057.9,369.7Z" fill="#797979"/>
<path d="M873.1,347.9L859.7,352.9L859.8,350.7L873.2,345.8Z" fill="#656565"/>
<path d="M806.5,452.3L798.2,461.5L794.4,410.1L803.0,400.9Z" fill="#717171"/>
<path d="M846.6,367.8L834.5,374.4L834.4,372.0L846.6,365.4Z" fill="#6c6c6c"/>
<path d="M1004.1,336.4L989.8,333.5L989.6,331.6L1003.8,334.5Z" fill="#545454"/>
<path d="M901.6,334.4L887.4,337.6L887.7,335.7L901.8,332.5Z" fill="#5e5e5e"/>
<path d="M1018.3,342.2L1004.3,338.4L1004.1,336.4L1018.0,340.2Z" fill="#5b5b5b"/>
<path d="M989.6,331.6L975.1,329.5L974.9,327.7L989.4,329.8Z" fill="#4e4e4e"/>
<path d="M916.2,330.1L901.8,332.5L902.0,330.7L916.4,328.3Z" fill="#5b5b5b"/>
<path d="M887.2,339.6L873.4,343.7L873.6,341.7L887.4,337.6Z" fill="#616161"/>
<path d="M960.3,326.6L945.6,326.3L945.6,324.5L960.2,324.8Z" fill="#525252"/>
<path d="M1045.4,358.8L1032.4,353.2L1032.2,351.1L1045.2,356.6Z" fill="#6c6c6c"/>
<path d="M945.6,326.3L930.9,326.9L931.0,325.1L945.6,324.5Z" fill="#555555"/>
<path d="M859.5,355.1L846.7,360.9L846.8,358.7L859.7,352.9Z" fill="#686868"/>
<path d="M1057.9,369.7L1045.6,363.3L1045.5,361.0L1057.8,367.3Z" fill="#767676"/>
<path d="M1032.0,348.9L1018.5,344.3L1018.3,342.2L1031.7,346.9Z" fill="#626262"/>
<path d="M974.9,327.7L960.3,326.6L960.2,324.8L974.8,326.0Z" fill="#505050"/>
<path d="M873.2,345.8L859.8,350.7L860.1,348.7L873.4,343.7Z" fill="#646464"/>
<path d="M930.9,326.9L916.4,328.3L916.5,326.6L931.0,325.1Z" fill="#585858"/>
<path d="M846.6,365.4L834.4,372.0L834.4,369.7L846.6,363.1Z" fill="#6b6b6b"/>
<path d="M1003.8,334.5L989.6,331.6L989.4,329.8L1003.5,332.7Z" fill="#505050"/>
<path d="M1069.5,381.5L1057.9,374.4L1057.9,372.0L1069.5,379.1Z" fill="#7f7f7f"/>
<path d="M901.8,332.5L887.7,335.7L887.9,333.9L902.0,330.7Z" fill="#5d5d5d"/>
<path d="M1018.0,340.2L1004.1,336.4L1003.8,334.5L1017.7,338.3Z" fill="#575757"/>
<path d="M989.4,329.8L974.9,327.7L974.8,326.0L989.1,328.0Z" fill="#4d4d4d"/>
<path d="M887.4,337.6L873.6,341.7L873.9,339.8L887.7,335.7Z" fill="#606060"/>
<path d="M834.6,376.8L823.2,384.1L823.1,381.7L834.5,374.4Z" fill="#6e6e6e"/>
<path d="M916.4,328.3L902.0,330.7L902.2,328.9L916.5,326.6Z" fill="#5a5a5a"/>
<path d="M1045.2,356.6L1032.2,351.1L1032.0,348.9L1044.9,354.4Z" fill="#696969"/>
<path d="M1057.8,367.3L1045.5,361.0L1045.4,358.8L1057.7,365.1Z" fill="#727272"/>
<path d="M859.7,352.9L846.8,358.7L847.0,356.5L859.8,350.7Z" fill="#676767"/>
<path d="M960.2,324.8L945.6,324.5L945.6,322.9L960.1,323.2Z" fill="#515151"/>
<path d="M945.6,324.5L931.0,325.1L931.1,323.5L945.6,322.9Z" fill="#545454"/>
<path d="M1031.7,346.9L1018.3,342.2L1018.0,340.2L1031.4,344.9Z" fill="#5e5e5e"/>
<path d="M846.6,363.1L834.4,369.7L834.5,367.4L846.7,360.9Z" fill="#6a6a6a"/>
<path d="M873.4,343.7L860.1,348.7L860.3,346.7L873.6,341.7Z" fill="#636363"/>
<path d="M974.8,326.0L960.2,324.8L960.1,323.2L974.6,324.3Z" fill="#4f4f4f"/>
<path d="M931.0,325.1L916.5,326.6L916.7,324.9L931.1,323.5Z" fill="#575757"/>
<path d="M1069.5,379.1L1057.9,372.0L1057.9,369.7L1069.5,376.7Z" fill="#7c7c7c"/>
<path d="M1003.5,332.7L989.4,329.8L989.1,328.0L1003.2,330.9Z" fill="#4d4d4d"/>
<path d="M834.5,374.4L823.1,381.7L823.0,379.4L834.4,372.0Z" fill="#6d6d6d"/>
<path d="M1017.7,338.3L1003.8,334.5L1003.5,332.7L1017.3,336.5Z" fill="#545454"/>
<path d="M902.0,330.7L887.9,333.9L888.2,332.1L902.2,328.9Z" fill="#5c5c5c"/>
<path d="M1044.9,354.4L1032.0,348.9L1031.7,346.9L1044.6,352.3Z" fill="#656565"/>
<path d="M887.7,335.7L873.9,339.8L874.2,338.0L887.9,333.9Z" fill="#5f5f5f"/>
<path d="M989.1,328.0L974.8,326.0L974.6,324.3L988.9,326.4Z" fill="#4c4c4c"/>
<path d="M1057.7,365.1L1045.4,358.8L1045.2,356.6L1057.5,362.9Z" fill="#6f6f6f"/>
<path d="M916.5,326.6L902.2,328.9L902.5,327.3L916.7,324.9Z" fill="#595959"/>
<path d="M859.8,350.7L847.0,356.5L847.3,354.4L860.1,348.7Z" fill="#666666"/>
<path d="M846.7,360.9L834.5,367.4L834.7,365.2L846.8,358.7Z" fill="#696969"/>
<path d="M1031.4,344.9L1018.0,340.2L1017.7,338.3L1031.1,342.9Z" fill="#5b5b5b"/>
<path d="M1103.9,467.9L1096.2,458.3L1098.9,406.9L1106.7,416.5Z" fill="#878787"/>
<path d="M960.1,323.2L945.6,322.9L945.6,321.3L960.0,321.6Z" fill="#515151"/>
<path d="M945.6,322.9L931.1,323.5L931.2,321.9L945.6,321.3Z" fill="#535353"/>
<path d="M873.6,341.7L860.3,346.7L860.7,344.7L873.9,339.8Z" fill="#626262"/>
<path d="M1069.5,376.7L1057.9,369.7L1057.8,367.3L1069.4,374.4Z" fill="#787878"/>
<path d="M798.2,461.5L790.8,471.3L786.9,419.9L794.4,410.1Z" fill="#717171"/>
<path d="M974.6,324.3L960.1,323.2L960.0,321.6L974.4,322.8Z" fill="#4e4e4e"/>
<path d="M931.1,323.5L916.7,324.9L916.8,323.4L931.2,321.9Z" fill="#565656"/>
<path d="M834.4,372.0L823.0,379.4L823.0,377.0L834.4,369.7Z" fill="#6c6c6c"/>
<path d="M1003.2,330.9L989.1,328.0L988.9,326.4L1002.8,329.2Z" fill="#4c4c4c"/>
<path d="M1017.3,336.5L1003.5,332.7L1003.2,330.9L1016.9,334.7Z" fill="#515151"/>
<path d="M1044.6,352.3L1031.7,346.9L1031.4,344.9L1044.3,350.3Z" fill="#626262"/>
<path d="M902.2,328.9L888.2,332.1L888.5,330.4L902.5,327.3Z" fill="#5b5b5b"/>
<path d="M1057.5,362.9L1045.2,356.6L1044.9,354.4L1057.2,360.7Z" fill="#6c6c6c"/>
<path d="M887.9,333.9L874.2,338.0L874.6,336.2L888.2,332.1Z" fill="#5e5e5e"/>
<path d="M860.1,348.7L847.3,354.4L847.6,352.4L860.3,346.7Z" fill="#656565"/>
<path d="M846.8,358.7L834.7,365.2L834.9,363.1L847.0,356.5Z" fill="#686868"/>
<path d="M988.9,326.4L974.6,324.3L974.4,322.8L988.5,324.8Z" fill="#4c4c4c"/>
<path d="M1080.2,389.3L1069.5,381.5L1069.5,379.1L1080.3,386.9Z" fill="#818181"/>
<path d="M916.7,324.9L902.5,327.3L902.7,325.7L916.8,323.4Z" fill="#585858"/>
<path d="M1031.1,342.9L1017.7,338.3L1017.3,336.5L1030.6,341.1Z" fill="#585858"/>
<path d="M1069.4,374.4L1057.8,367.3L1057.7,365.1L1069.3,372.1Z" fill="#757575"/>
<path d="M873.9,339.8L860.7,344.7L861.1,342.8L874.2,338.0Z" fill="#616161"/>
<path d="M823.2,384.1L812.6,392.2L812.5,389.8L823.1,381.7Z" fill="#6f6f6f"/>
<path d="M960.0,321.6L945.6,321.3L945.6,319.8L959.9,320.1Z" fill="#505050"/>
<path d="M945.6,321.3L931.2,321.9L931.3,320.4L945.6,319.8Z" fill="#525252"/>
<path d="M834.4,369.7L823.0,377.0L823.2,374.7L834.5,367.4Z" fill="#6b6b6b"/>
<path d="M974.4,322.8L960.0,321.6L959.9,320.1L974.1,321.3Z" fill="#4d4d4d"/>
<path d="M931.2,321.9L916.8,323.4L917.1,321.9L931.3,320.4Z" fill="#555555"/>
<path d="M1057.2,360.7L1044.9,354.4L1044.6,352.3L1056.9,358.6Z" fill="#686868"/>
<path d="M1044.3,350.3L1031.4,344.9L1031.1,342.9L1043.9,348.4Z" fill="#5e5e5e"/>
<path d="M1002.8,329.2L988.9,326.4L988.5,324.8L1002.4,327.6Z" fill="#4c4c4c"/>
<path d="M1016.9,334.7L1003.2,330.9L1002.8,329.2L1016.5,333.0Z" fill="#4d4d4d"/>
<path d="M1080.3,386.9L1069.5,379.1L1069.5,376.7L1080.3,384.5Z" fill="#7e7e7e"/>
<path d="M902.5,327.3L888.5,330.4L888.9,328.8L902.7,325.7Z" fill="#5a5a5a"/>
<path d="M860.3,346.7L847.6,352.4L848.0,350.4L860.7,344.7Z" fill="#646464"/>
<path d="M847.0,356.5L834.9,363.1L835.2,360.9L847.3,354.4Z" fill="#676767"/>
<path d="M888.2,332.1L874.6,336.2L875.0,334.4L888.5,330.4Z" fill="#5d5d5d"/>
<path d="M1069.3,372.1L1057.7,365.1L1057.5,362.9L1069.1,369.9Z" fill="#727272"/>
<path d="M823.1,381.7L812.5,389.8L812.5,387.4L823.0,379.4Z" fill="#6e6e6e"/>
<path d="M988.5,324.8L974.4,322.8L974.1,321.3L988.2,323.3Z" fill="#4c4c4c"/>
<path d="M1030.6,341.1L1017.3,336.5L1016.9,334.7L1030.2,339.2Z" fill="#545454"/>
<path d="M916.8,323.4L902.7,325.7L903.1,324.1L917.1,321.9Z" fill="#575757"/>
<path d="M834.5,367.4L823.2,374.7L823.3,372.5L834.7,365.2Z" fill="#6a6a6a"/>
<path d="M874.2,338.0L861.1,342.8L861.5,341.0L874.6,336.2Z" fill="#606060"/>
<path d="M959.9,320.1L945.6,319.8L945.6,318.4L959.8,318.7Z" fill="#4f4f4f"/>
<path d="M945.6,319.8L931.3,320.4L931.4,319.0L945.6,318.4Z" fill="#515151"/>
<path d="M1056.9,358.6L1044.6,352.3L1044.3,350.3L1056.5,356.6Z" fill="#656565"/>
<path d="M1080.3,384.5L1069.5,376.7L1069.4,374.4L1080.2,382.2Z" fill="#7b7b7b"/>
<path d="M974.1,321.3L959.9,320.1L959.8,318.7L973.9,319.8Z" fill="#4c4c4c"/>
<path d="M1043.9,348.4L1031.1,342.9L1030.6,341.1L1043.4,346.5Z" fill="#5b5b5b"/>
<path d="M931.3,320.4L917.1,321.9L917.3,320.4L931.4,319.0Z" fill="#545454"/>
<path d="M847.3,354.4L835.2,360.9L835.6,358.9L847.6,352.4Z" fill="#666666"/>
<path d="M860.7,344.7L848.0,350.4L848.5,348.5L861.1,342.8Z" fill="#636363"/>
<path d="M1016.5,333.0L1002.8,329.2L1002.4,327.6L1016.0,331.3Z" fill="#4c4c4c"/>
<path d="M823.0,379.4L812.5,387.4L812.5,385.0L823.0,377.0Z" fill="#6d6d6d"/>
<path d="M1002.4,327.6L988.5,324.8L988.2,323.3L1002.0,326.1Z" fill="#4c4c4c"/>
<path d="M1069.1,369.9L1057.5,362.9L1057.2,360.7L1068.8,367.7Z" fill="#6e6e6e"/>
<path d="M888.5,330.4L875.0,334.4L875.5,332.8L888.9,328.8Z" fill="#5c5c5c"/>
<path d="M902.7,325.7L888.9,328.8L889.3,327.3L903.1,324.1Z" fill="#595959"/>
<path d="M834.7,365.2L823.3,372.5L823.6,370.3L834.9,363.1Z" fill="#696969"/>
<path d="M1030.2,339.2L1016.9,334.7L1016.5,333.0L1029.6,337.5Z" fill="#515151"/>
<path d="M1110.4,478.0L1103.9,467.9L1106.7,416.5L1113.4,426.6Z" fill="#888888"/>
<path d="M988.2,323.3L974.1,321.3L973.9,319.8L987.8,321.8Z" fill="#4c4c4c"/>
<path d="M874.6,336.2L861.5,341.0L862.0,339.3L875.0,334.4Z" fill="#5f5f5f"/>
<path d="M917.1,321.9L903.1,324.1L903.4,322.7L917.3,320.4Z" fill="#565656"/>
<path d="M790.8,471.3L784.6,481.5L780.6,430.2L786.9,419.9Z" fill="#707070"/>
<path d="M1080.2,382.2L1069.4,374.4L1069.3,372.1L1080.1,379.9Z" fill="#777777"/>
<path d="M1090.1,397.8L1080.2,389.3L1080.3,386.9L1090.2,395.4Z" fill="#838383"/>
<path d="M1056.5,356.6L1044.3,350.3L1043.9,348.4L1056.0,354.6Z" fill="#616161"/>
<path d="M959.8,318.7L945.6,318.4L945.6,317.1L959.6,317.4Z" fill="#4e4e4e"/>
<path d="M945.6,318.4L931.4,319.0L931.5,317.7L945.6,317.1Z" fill="#505050"/>
<path d="M1043.4,346.5L1030.6,341.1L1030.2,339.2L1042.8,344.6Z" fill="#575757"/>
<path d="M823.0,377.0L812.5,385.0L812.6,382.7L823.2,374.7Z" fill="#6c6c6c"/>
<path d="M847.6,352.4L835.6,358.9L836.0,356.9L848.0,350.4Z" fill="#656565"/>
<path d="M812.6,392.2L803.0,400.9L802.9,398.4L812.5,389.8Z" fill="#707070"/>
<path d="M1068.8,367.7L1057.2,360.7L1056.9,358.6L1068.4,365.6Z" fill="#6b6b6b"/>
<path d="M861.1,342.8L848.5,348.5L849.0,346.6L861.5,341.0Z" fill="#626262"/>
<path d="M973.9,319.8L959.8,318.7L959.6,317.4L973.6,318.5Z" fill="#4c4c4c"/>
<path d="M931.4,319.0L917.3,320.4L917.5,319.1L931.5,317.7Z" fill="#525252"/>
<path d="M1016.0,331.3L1002.4,327.6L1002.0,326.1L1015.4,329.7Z" fill="#4c4c4c"/>
<path d="M834.9,363.1L823.6,370.3L823.9,368.2L835.2,360.9Z" fill="#686868"/>
<path d="M1002.0,326.1L988.2,323.3L987.8,321.8L1001.5,324.6Z" fill="#4c4c4c"/>
<path d="M888.9,328.8L875.5,332.8L876.0,331.2L889.3,327.3Z" fill="#5b5b5b"/>
<path d="M903.1,324.1L889.3,327.3L889.8,325.8L903.4,322.7Z" fill="#585858"/>
<path d="M1029.6,337.5L1016.5,333.0L1016.0,331.3L1029.0,335.8Z" fill="#4d4d4d"/>
<path d="M875.0,334.4L862.0,339.3L862.6,337.6L875.5,332.8Z" fill="#5e5e5e"/>
<path d="M1080.1,379.9L1069.3,372.1L1069.1,369.9L1079.8,377.7Z" fill="#747474"/>
<path d="M1090.2,395.4L1080.3,386.9L1080.3,384.5L1090.1,393.0Z" fill="#808080"/>
<path d="M987.8,321.8L973.9,319.8L973.6,318.5L987.4,320.5Z" fill="#4c4c4c"/>
<path d="M917.3,320.4L903.4,322.7L903.8,321.3L917.5,319.1Z" fill="#555555"/>
<path d="M1056.0,354.6L1043.9,348.4L1043.4,346.5L1055.5,352.6Z" fill="#5e5e5e"/>
<path d="M823.2,374.7L812.6,382.7L812.8,380.5L823.3,372.5Z" fill="#6b6b6b"/>
<path d="M812.5,389.8L802.9,398.4L802.9,396.0L812.5,387.4Z" fill="#6f6f6f"/>
<path d="M848.0,350.4L836.0,356.9L836.5,354.9L848.5,348.5Z" fill="#646464"/>
<path d="M1042.8,344.6L1030.2,339.2L1029.6,337.5L1042.2,342.8Z" fill="#545454"/>
<path d="M1068.4,365.6L1056.9,358.6L1056.5,356.6L1068.0,363.5Z" fill="#676767"/>
<path d="M959.6,317.4L945.6,317.1L945.6,315.9L959.5,316.1Z" fill="#4d4d4d"/>
<path d="M945.6,317.1L931.5,317.7L931.6,316.4L945.6,315.9Z" fill="#4f4f4f"/>
<path d="M861.5,341.0L849.0,346.6L849.6,344.8L862.0,339.3Z" fill="#606060"/>
<path d="M835.2,360.9L823.9,368.2L824.3,366.1L835.6,358.9Z" fill="#676767"/>
<path d="M973.6,318.5L959.6,317.4L959.5,316.1L973.3,317.3Z" fill="#4c4c4c"/>
<path d="M1015.4,329.7L1002.0,326.1L1001.5,324.6L1014.8,328.3Z" fill="#4c4c4c"/>
<path d="M931.5,317.7L917.5,319.1L917.8,317.8L931.6,316.4Z" fill="#515151"/>
<path d="M889.3,327.3L876.0,331.2L876.6,329.7L889.8,325.8Z" fill="#5a5a5a"/>
<path d="M1001.5,324.6L987.8,321.8L987.4,320.5L1001.0,323.2Z" fill="#4c4c4c"/>
<path d="M1090.1,393.0L1080.3,384.5L1080.2,382.2L1090.1,390.7Z" fill="#7d7d7d"/>
<path d="M1079.8,377.7L1069.1,369.9L1068.8,367.7L1079.5,375.5Z" fill="#707070"/>
<path d="M903.4,322.7L889.8,325.8L890.3,324.4L903.8,321.3Z" fill="#575757"/>
<path d="M1029.0,335.8L1016.0,331.3L1015.4,329.7L1028.4,334.2Z" fill="#4c4c4c"/>
<path d="M875.5,332.8L862.6,337.6L863.2,335.9L876.0,331.2Z" fill="#5d5d5d"/>
<path d="M812.5,387.4L802.9,396.0L802.9,393.7L812.5,385.0Z" fill="#6e6e6e"/>
<path d="M823.3,372.5L812.8,380.5L813.1,378.3L823.6,370.3Z" fill="#6a6a6a"/>
<path d="M1055.5,352.6L1043.4,346.5L1042.8,344.6L1054.9,350.7Z" fill="#5a5a5a"/>
<path d="M987.4,320.5L973.6,318.5L973.3,317.3L987.0,319.2Z" fill="#4c4c4c"/>
<path d="M917.5,319.1L903.8,321.3L904.2,320.1L917.8,317.8Z" fill="#545454"/>
<path d="M1068.0,363.5L1056.5,356.6L1056.0,354.6L1067.4,361.5Z" fill="#646464"/>
<path d="M848.5,348.5L836.5,354.9L837.1,353.0L849.0,346.6Z" fill="#636363"/>
<path d="M1042.2,342.8L1029.6,337.5L1029.0,335.8L1041.6,341.1Z" fill="#505050"/>
<path d="M835.6,358.9L824.3,366.1L824.8,364.0L836.0,356.9Z" fill="#666666"/>
<path d="M862.0,339.3L849.6,344.8L850.2,343.1L862.6,337.6Z" fill="#5f5f5f"/>
<path d="M959.5,316.1L945.6,315.9L945.5,314.7L959.3,315.0Z" fill="#4c4c4c"/>
<path d="M1090.1,390.7L1080.2,382.2L1080.1,379.9L1089.9,388.3Z" fill="#797979"/>
<path d="M945.6,315.9L931.6,316.4L931.8,315.3L945.5,314.7Z" fill="#4e4e4e"/>
<path d="M1079.5,375.5L1068.8,367.7L1068.4,365.6L1079.1,373.3Z" fill="#6d6d6d"/>
<path d="M1014.8,328.3L1001.5,324.6L1001.0,323.2L1014.2,326.8Z" fill="#4c4c4c"/>
<path d="M812.5,385.0L802.9,393.7L803.0,391.4L812.6,382.7Z" fill="#6d6d6d"/>
<path d="M973.3,317.3L959.5,316.1L959.3,315.0L973.0,316.1Z" fill="#4c4c4c"/>
<path d="M1115.7,488.5L1110.4,478.0L1113.4,426.6L1118.8,437.2Z" fill="#888888"/>
<path d="M1098.9,406.9L1090.1,397.8L1090.2,395.4L1099.0,404.5Z" fill="#858585"/>
<path d="M889.8,325.8L876.6,329.7L877.2,328.3L890.3,324.4Z" fill="#595959"/>
<path d="M931.6,316.4L917.8,317.8L918.1,316.7L931.8,315.3Z" fill="#505050"/>
<path d="M823.6,370.3L813.1,378.3L813.5,376.1L823.9,368.2Z" fill="#696969"/>
<path d="M1001.0,323.2L987.4,320.5L987.0,319.2L1000.4,321.9Z" fill="#4c4c4c"/>
<path d="M1028.4,334.2L1015.4,329.7L1014.8,328.3L1027.7,332.7Z" fill="#4c4c4c"/>
<path d="M903.8,321.3L890.3,324.4L890.9,323.1L904.2,320.1Z" fill="#565656"/>
<path d="M876.0,331.2L863.2,335.9L863.9,334.4L876.6,329.7Z" fill="#5c5c5c"/>
<path d="M803.0,400.9L794.4,410.1L794.3,407.7L802.9,398.4Z" fill="#707070"/>
<path d="M784.6,481.5L779.6,492.1L775.4,440.8L780.6,430.2Z" fill="#707070"/>
<path d="M1054.9,350.7L1042.8,344.6L1042.2,342.8L1054.2,348.9Z" fill="#575757"/>
<path d="M1067.4,361.5L1056.0,354.6L1055.5,352.6L1066.9,359.5Z" fill="#606060"/>
<path d="M849.0,346.6L837.1,353.0L837.8,351.2L849.6,344.8Z" fill="#626262"/>
<path d="M987.0,319.2L973.3,317.3L973.0,316.1L986.5,318.0Z" fill="#4c4c4c"/>
<path d="M836.0,356.9L824.8,364.0L825.4,362.1L836.5,354.9Z" fill="#656565"/>
<path d="M1041.6,341.1L1029.0,335.8L1028.4,334.2L1040.8,339.5Z" fill="#4d4d4d"/>
<path d="M917.8,317.8L904.2,320.1L904.7,318.9L918.1,316.7Z" fill="#535353"/>
<path d="M1089.9,388.3L1080.1,379.9L1079.8,377.7L1089.6,386.1Z" fill="#767676"/>
<path d="M862.6,337.6L850.2,343.1L850.9,341.4L863.2,335.9Z" fill="#5e5e5e"/>
<path d="M1079.1,373.3L1068.4,365.6L1068.0,363.5L1078.6,371.2Z" fill="#696969"/>
<path d="M1099.0,404.5L1090.2,395.4L1090.1,393.0L1099.0,402.1Z" fill="#818181"/>
<path d="M812.6,382.7L803.0,391.4L803.2,389.1L812.8,380.5Z" fill="#6c6c6c"/>
<path d="M823.9,368.2L813.5,376.1L813.9,374.0L824.3,366.1Z" fill="#686868"/>
<path d="M959.3,315.0L945.5,314.7L945.5,313.7L959.2,313.9Z" fill="#4c4c4c"/>
<path d="M945.5,314.7L931.8,315.3L931.9,314.2L945.5,313.7Z" fill="#4d4d4d"/>
<path d="M802.9,398.4L794.3,407.7L794.3,405.3L802.9,396.0Z" fill="#6f6f6f"/>
<path d="M1014.2,326.8L1001.0,323.2L1000.4,321.9L1013.5,325.5Z" fill="#4c4c4c"/>
<path d="M890.3,324.4L877.2,328.3L877.9,326.9L890.9,323.1Z" fill="#575757"/>
<path d="M1027.7,332.7L1014.8,328.3L1014.2,326.8L1026.9,331.2Z" fill="#4c4c4c"/>
<path d="M973.0,316.1L959.3,315.0L959.2,313.9L972.7,315.0Z" fill="#4c4c4c"/>
<path d="M1000.4,321.9L987.0,319.2L986.5,318.0L999.8,320.7Z" fill="#4c4c4c"/>
<path d="M931.8,315.3L918.1,316.7L918.5,315.6L931.9,314.2Z" fill="#4f4f4f"/>
<path d="M1054.2,348.9L1042.2,342.8L1041.6,341.1L1053.4,347.1Z" fill="#535353"/>
<path d="M1066.9,359.5L1055.5,352.6L1054.9,350.7L1066.2,357.6Z" fill="#5d5d5d"/>
<path d="M876.6,329.7L863.9,334.4L864.6,332.9L877.2,328.3Z" fill="#5a5a5a"/>
<path d="M904.2,320.1L890.9,323.1L891.5,321.9L904.7,318.9Z" fill="#555555"/>
<path d="M849.6,344.8L837.8,351.2L838.5,349.4L850.2,343.1Z" fill="#616161"/>
<path d="M1089.6,386.1L1079.8,377.7L1079.5,375.5L1089.3,383.9Z" fill="#727272"/>
<path d="M836.5,354.9L825.4,362.1L826.0,360.1L837.1,353.0Z" fill="#646464"/>
<path d="M1099.0,402.1L1090.1,393.0L1090.1,390.7L1098.9,399.7Z" fill="#7e7e7e"/>
<path d="M1040.8,339.5L1028.4,334.2L1027.7,332.7L1040.0,337.9Z" fill="#4c4c4c"/>
<path d="M1078.6,371.2L1068.0,363.5L1067.4,361.5L1078.0,369.1Z" fill="#666666"/>
<path d="M812.8,380.5L803.2,389.1L803.5,386.9L813.1,378.3Z" fill="#6b6b6b"/>
<path d="M986.5,318.0L973.0,316.1L972.7,315.0L986.0,316.9Z" fill="#4c4c4c"/>
<path d="M863.2,335.9L850.9,341.4L851.7,339.8L863.9,334.4Z" fill="#5d5d5d"/>
<path d="M918.1,316.7L904.7,318.9L905.2,317.8L918.5,315.6Z" fill="#515151"/>
<path d="M802.9,396.0L794.3,405.3L794.3,402.9L802.9,393.7Z" fill="#6e6e6e"/>
<path d="M824.3,366.1L813.9,374.0L814.4,371.9L824.8,364.0Z" fill="#676767"/>
<path d="M1013.5,325.5L1000.4,321.9L999.8,320.7L1012.7,324.2Z" fill="#4c4c4c"/>
<path d="M959.2,313.9L945.5,313.7L945.5,312.7L959.0,313.0Z" fill="#4c4c4c"/>
<path d="M1066.2,357.6L1054.9,350.7L1054.2,348.9L1065.4,355.7Z" fill="#595959"/>
<path d="M945.5,313.7L931.9,314.2L932.1,313.3L945.5,312.7Z" fill="#4c4c4c"/>
<path d="M1053.4,347.1L1041.6,341.1L1040.8,339.5L1052.6,345.4Z" fill="#4f4f4f"/>
<path d="M1089.3,383.9L1079.5,375.5L1079.1,373.3L1088.9,381.7Z" fill="#6f6f6f"/>
<path d="M1026.9,331.2L1014.2,326.8L1013.5,325.5L1026.1,329.8Z" fill="#4c4c4c"/>
<path d="M890.9,323.1L877.9,326.9L878.7,325.6L891.5,321.9Z" fill="#565656"/>
<path d="M1098.9,399.7L1090.1,390.7L1089.9,388.3L1098.7,397.4Z" fill="#7b7b7b"/>
<path d="M837.1,353.0L826.0,360.1L826.7,358.2L837.8,351.2Z" fill="#636363"/>
<path d="M877.2,328.3L864.6,332.9L865.5,331.5L877.9,326.9Z" fill="#595959"/>
<path d="M850.2,343.1L838.5,349.4L839.3,347.7L850.9,341.4Z" fill="#606060"/>
<path d="M999.8,320.7L986.5,318.0L986.0,316.9L999.1,319.6Z" fill="#4c4c4c"/>
<path d="M972.7,315.0L959.2,313.9L959.0,313.0L972.3,314.1Z" fill="#4c4c4c"/>
<path d="M813.1,378.3L803.5,386.9L803.9,384.7L813.5,376.1Z" fill="#6a6a6a"/>
<path d="M931.9,314.2L918.5,315.6L918.8,314.6L932.1,313.3Z" fill="#4e4e4e"/>
<path d="M904.7,318.9L891.5,321.9L892.1,320.7L905.2,317.8Z" fill="#535353"/>
<path d="M1078.0,369.1L1067.4,361.5L1066.9,359.5L1077.4,367.1Z" fill="#626262"/>
<path d="M802.9,393.7L794.3,402.9L794.4,400.6L803.0,391.4Z" fill="#6d6d6d"/>
<path d="M1040.0,337.9L1027.7,332.7L1026.9,331.2L1039.1,336.4Z" fill="#4c4c4c"/>
<path d="M824.8,364.0L814.4,371.9L815.0,369.9L825.4,362.1Z" fill="#666666"/>
<path d="M1106.7,416.5L1098.9,406.9L1099.0,404.5L1106.8,414.1Z" fill="#858585"/>
<path d="M863.9,334.4L851.7,339.8L852.6,338.3L864.6,332.9Z" fill="#5c5c5c"/>
<path d="M986.0,316.9L972.7,315.0L972.3,314.1L985.5,315.9Z" fill="#4c4c4c"/>
<path d="M918.5,315.6L905.2,317.8L905.7,316.8L918.8,314.6Z" fill="#505050"/>
<path d="M794.4,410.1L786.9,419.9L786.8,417.5L794.3,407.7Z" fill="#707070"/>
<path d="M1119.8,499.3L1115.7,488.5L1118.8,437.2L1123.0,448.1Z" fill="#878787"/>
<path d="M1088.9,381.7L1079.1,373.3L1078.6,371.2L1088.3,379.5Z" fill="#6b6b6b"/>
<path d="M1098.7,397.4L1089.9,388.3L1089.6,386.1L1098.5,395.1Z" fill="#777777"/>
<path d="M1065.4,355.7L1054.2,348.9L1053.4,347.1L1064.6,353.9Z" fill="#555555"/>
<path d="M1052.6,345.4L1040.8,339.5L1040.0,337.9L1051.7,343.8Z" fill="#4c4c4c"/>
<path d="M813.5,376.1L803.9,384.7L804.4,382.5L813.9,374.0Z" fill="#696969"/>
<path d="M779.6,492.1L775.8,503.1L771.6,451.8L775.4,440.8Z" fill="#6f6f6f"/>
<path d="M837.8,351.2L826.7,358.2L827.5,356.4L838.5,349.4Z" fill="#626262"/>
<path d="M1012.7,324.2L999.8,320.7L999.1,319.6L1011.9,323.1Z" fill="#4c4c4c"/>
<path d="M803.0,391.4L794.4,400.6L794.7,398.3L803.2,389.1Z" fill="#6c6c6c"/>
<path d="M1026.1,329.8L1013.5,325.5L1012.7,324.2L1025.2,328.5Z" fill="#4c4c4c"/>
<path d="M850.9,341.4L839.3,347.7L840.2,346.0L851.7,339.8Z" fill="#5e5e5e"/>
<path d="M1077.4,367.1L1066.9,359.5L1066.2,357.6L1076.7,365.1Z" fill="#5f5f5f"/>
<path d="M891.5,321.9L878.7,325.6L879.5,324.5L892.1,320.7Z" fill="#555555"/>
<path d="M959.0,313.0L945.5,312.7L945.5,311.9L958.8,312.2Z" fill="#4c4c4c"/>
<path d="M945.5,312.7L932.1,313.3L932.3,312.4L945.5,311.9Z" fill="#4c4c4c"/>
<path d="M877.9,326.9L865.5,331.5L866.3,330.2L878.7,325.6Z" fill="#585858"/>
<path d="M1106.8,414.1L1099.0,404.5L1099.0,402.1L1106.8,411.7Z" fill="#828282"/>
<path d="M825.4,362.1L815.0,369.9L815.7,367.9L826.0,360.1Z" fill="#656565"/>
<path d="M999.1,319.6L986.0,316.9L985.5,315.9L998.4,318.6Z" fill="#4c4c4c"/>
<path d="M905.2,317.8L892.1,320.7L892.9,319.7L905.7,316.8Z" fill="#525252"/>
<path d="M972.3,314.1L959.0,313.0L958.8,312.2L971.9,313.2Z" fill="#4c4c4c"/>
<path d="M1039.1,336.4L1026.9,331.2L1026.1,329.8L1038.1,334.9Z" fill="#4c4c4c"/>
<path d="M932.1,313.3L918.8,314.6L919.2,313.8L932.3,312.4Z" fill="#4d4d4d"/>
<path d="M794.3,407.7L786.8,417.5L786.8,415.1L794.3,405.3Z" fill="#6f6f6f"/>
<path d="M864.6,332.9L852.6,338.3L853.5,336.8L865.5,331.5Z" fill="#5b5b5b"/>
<path d="M1088.3,379.5L1078.6,371.2L1078.0,369.1L1087.7,377.4Z" fill="#686868"/>
<path d="M1098.5,395.1L1089.6,386.1L1089.3,383.9L1098.1,392.8Z" fill="#747474"/>
<path d="M1064.6,353.9L1053.4,347.1L1052.6,345.4L1063.7,352.1Z" fill="#525252"/>
<path d="M985.5,315.9L972.3,314.1L971.9,313.2L984.9,315.0Z" fill="#4c4c4c"/>
<path d="M813.9,374.0L804.4,382.5L805.0,380.4L814.4,371.9Z" fill="#686868"/>
<path d="M803.2,389.1L794.7,398.3L795.0,396.0L803.5,386.9Z" fill="#6b6b6b"/>
<path d="M918.8,314.6L905.7,316.8L906.3,315.9L919.2,313.8Z" fill="#4f4f4f"/>
<path d="M1106.8,411.7L1099.0,402.1L1098.9,399.7L1106.7,409.3Z" fill="#7f7f7f"/>
<path d="M1051.7,343.8L1040.0,337.9L1039.1,336.4L1050.7,342.2Z" fill="#4c4c4c"/>
<path d="M838.5,349.4L827.5,356.4L828.4,354.6L839.3,347.7Z" fill="#616161"/>
<path d="M1076.7,365.1L1066.2,357.6L1065.4,355.7L1075.8,363.2Z" fill="#5b5b5b"/>
<path d="M851.7,339.8L840.2,346.0L841.2,344.4L852.6,338.3Z" fill="#5d5d5d"/>
<path d="M794.3,405.3L786.8,415.1L786.8,412.7L794.3,402.9Z" fill="#6e6e6e"/>
<path d="M826.0,360.1L815.7,367.9L816.5,365.9L826.7,358.2Z" fill="#646464"/>
<path d="M1025.2,328.5L1012.7,324.2L1011.9,323.1L1024.2,327.3Z" fill="#4c4c4c"/>
<path d="M1011.9,323.1L999.1,319.6L998.4,318.6L1011.0,322.0Z" fill="#4c4c4c"/>
<path d="M892.1,320.7L879.5,324.5L880.4,323.4L892.9,319.7Z" fill="#545454"/>
<path d="M878.7,325.6L866.3,330.2L867.3,328.9L879.5,324.5Z" fill="#575757"/>
<path d="M958.8,312.2L945.5,311.9L945.5,311.2L958.6,311.4Z" fill="#4c4c4c"/>
<path d="M945.5,311.9L932.3,312.4L932.5,311.7L945.5,311.2Z" fill="#4c4c4c"/>
<path d="M1098.1,392.8L1089.3,383.9L1088.9,381.7L1097.6,390.6Z" fill="#707070"/>
<path d="M1038.1,334.9L1026.1,329.8L1025.2,328.5L1037.1,333.6Z" fill="#4c4c4c"/>
<path d="M1087.7,377.4L1078.0,369.1L1077.4,367.1L1087.0,375.3Z" fill="#646464"/>
<path d="M998.4,318.6L985.5,315.9L984.9,315.0L997.6,317.6Z" fill="#4c4c4c"/>
<path d="M905.7,316.8L892.9,319.7L893.6,318.7L906.3,315.9Z" fill="#515151"/>
<path d="M865.5,331.5L853.5,336.8L854.6,335.5L866.3,330.2Z" fill="#595959"/>
<path d="M971.9,313.2L958.8,312.2L958.6,311.4L971.5,312.4Z" fill="#4c4c4c"/>
<path d="M932.3,312.4L919.2,313.8L919.6,313.0L932.5,311.7Z" fill="#4c4c4c"/>
<path d="M803.5,386.9L795.0,396.0L795.4,393.8L803.9,384.7Z" fill="#6a6a6a"/>
<path d="M814.4,371.9L805.0,380.4L805.6,378.3L815.0,369.9Z" fill="#676767"/>
<path d="M1106.7,409.3L1098.9,399.7L1098.7,397.4L1106.5,407.0Z" fill="#7b7b7b"/>
<path d="M1063.7,352.1L1052.6,345.4L1051.7,343.8L1062.6,350.4Z" fill="#4e4e4e"/>
<path d="M1075.8,363.2L1065.4,355.7L1064.6,353.9L1074.9,361.3Z" fill="#585858"/>
<path d="M794.3,402.9L786.8,412.7L787.0,410.4L794.4,400.6Z" fill="#6d6d6d"/>
<path d="M839.3,347.7L828.4,354.6L829.4,352.9L840.2,346.0Z" fill="#5f5f5f"/>
<path d="M1050.7,342.2L1039.1,336.4L1038.1,334.9L1049.6,340.7Z" fill="#4c4c4c"/>
<path d="M984.9,315.0L971.9,313.2L971.5,312.4L984.3,314.3Z" fill="#4c4c4c"/>
<path d="M826.7,358.2L816.5,365.9L817.4,364.0L827.5,356.4Z" fill="#636363"/>
<path d="M919.2,313.8L906.3,315.9L906.9,315.1L919.6,313.0Z" fill="#4e4e4e"/>
<path d="M852.6,338.3L841.2,344.4L842.2,342.9L853.5,336.8Z" fill="#5c5c5c"/>
<path d="M1113.4,426.6L1106.7,416.5L1106.8,414.1L1113.4,424.2Z" fill="#868686"/>
<path d="M1097.6,390.6L1088.9,381.7L1088.3,379.5L1097.1,388.4Z" fill="#6d6d6d"/>
<path d="M1024.2,327.3L1011.9,323.1L1011.0,322.0L1023.1,326.2Z" fill="#4c4c4c"/>
<path d="M1087.0,375.3L1077.4,367.1L1076.7,365.1L1086.2,373.3Z" fill="#616161"/>
<path d="M1011.0,322.0L998.4,318.6L997.6,317.6L1010.0,321.0Z" fill="#4c4c4c"/>
<path d="M879.5,324.5L867.3,328.9L868.4,327.8L880.4,323.4Z" fill="#565656"/>
<path d="M786.9,419.9L780.6,430.2L780.4,427.8L786.8,417.5Z" fill="#707070"/>
<path d="M803.9,384.7L795.4,393.8L795.9,391.6L804.4,382.5Z" fill="#696969"/>
<path d="M892.9,319.7L880.4,323.4L881.3,322.4L893.6,318.7Z" fill="#535353"/>
<path d="M1106.5,407.0L1098.7,397.4L1098.5,395.1L1106.2,404.7Z" fill="#787878"/>
<path d="M815.0,369.9L805.6,378.3L806.4,376.3L815.7,367.9Z" fill="#666666"/>
<path d="M1037.1,333.6L1025.2,328.5L1024.2,327.3L1036.0,332.3Z" fill="#4c4c4c"/>
<path d="M866.3,330.2L854.6,335.5L855.7,334.2L867.3,328.9Z" fill="#585858"/>
<path d="M958.6,311.4L945.5,311.2L945.5,310.5L958.3,310.8Z" fill="#4c4c4c"/>
<path d="M945.5,311.2L932.5,311.7L932.8,311.1L945.5,310.5Z" fill="#4c4c4c"/>
<path d="M794.4,400.6L787.0,410.4L787.2,408.0L794.7,398.3Z" fill="#6d6d6d"/>
<path d="M997.6,317.6L984.9,315.0L984.3,314.3L996.8,316.8Z" fill="#4c4c4c"/>
<path d="M1062.6,350.4L1051.7,343.8L1050.7,342.2L1061.5,348.8Z" fill="#4c4c4c"/>
<path d="M1122.6,510.5L1119.8,499.3L1123.0,448.1L1125.9,459.2Z" fill="#868686"/>
<path d="M906.3,315.9L893.6,318.7L894.4,317.9L906.9,315.1Z" fill="#505050"/>
<path d="M1074.9,361.3L1064.6,353.9L1063.7,352.1L1073.9,359.5Z" fill="#545454"/>
<path d="M971.5,312.4L958.6,311.4L958.3,310.8L971.1,311.8Z" fill="#4c4c4c"/>
<path d="M840.2,346.0L829.4,352.9L830.5,351.2L841.2,344.4Z" fill="#5e5e5e"/>
<path d="M932.5,311.7L919.6,313.0L920.1,312.3L932.8,311.1Z" fill="#4c4c4c"/>
<path d="M1113.4,424.2L1106.8,414.1L1106.8,411.7L1113.4,421.8Z" fill="#838383"/>
<path d="M827.5,356.4L817.4,364.0L818.4,362.2L828.4,354.6Z" fill="#616161"/>
<path d="M775.8,503.1L773.3,514.2L769.0,463.0L771.6,451.8Z" fill="#6e6e6e"/>
<path d="M1049.6,340.7L1038.1,334.9L1037.1,333.6L1048.4,339.3Z" fill="#4c4c4c"/>
<path d="M1097.1,388.4L1088.3,379.5L1087.7,377.4L1096.4,386.3Z" fill="#696969"/>
<path d="M853.5,336.8L842.2,342.9L843.4,341.4L854.6,335.5Z" fill="#5b5b5b"/>
<path d="M786.8,417.5L780.4,427.8L780.4,425.3L786.8,415.1Z" fill="#6f6f6f"/>
<path d="M1086.2,373.3L1076.7,365.1L1075.8,363.2L1085.4,371.3Z" fill="#5d5d5d"/>
<path d="M1106.2,404.7L1098.5,395.1L1098.1,392.8L1105.8,402.4Z" fill="#757575"/>
<path d="M804.4,382.5L795.9,391.6L796.5,389.5L805.0,380.4Z" fill="#686868"/>
<path d="M984.3,314.3L971.5,312.4L971.1,311.8L983.6,313.6Z" fill="#4c4c4c"/>
<path d="M919.6,313.0L906.9,315.1L907.6,314.4L920.1,312.3Z" fill="#4d4d4d"/>
<path d="M815.7,367.9L806.4,376.3L807.2,374.3L816.5,365.9Z" fill="#646464"/>
<path d="M794.7,398.3L787.2,408.0L787.5,405.8L795.0,396.0Z" fill="#6c6c6c"/>
<path d="M1023.1,326.2L1011.0,322.0L1010.0,321.0L1022.0,325.1Z" fill="#4c4c4c"/>
<path d="M880.4,323.4L868.4,327.8L869.5,326.7L881.3,322.4Z" fill="#545454"/>
<path d="M1010.0,321.0L997.6,317.6L996.8,316.8L1009.0,320.1Z" fill="#4c4c4c"/>
<path d="M1036.0,332.3L1024.2,327.3L1023.1,326.2L1034.8,331.1Z" fill="#4c4c4c"/>
<path d="M893.6,318.7L881.3,322.4L882.3,321.5L894.4,317.9Z" fill="#525252"/>
<path d="M1113.4,421.8L1106.8,411.7L1106.7,409.3L1113.3,419.4Z" fill="#7f7f7f"/>
<path d="M1061.5,348.8L1050.7,342.2L1049.6,340.7L1060.3,347.2Z" fill="#4c4c4c"/>
<path d="M867.3,328.9L855.7,334.2L856.9,332.9L868.4,327.8Z" fill="#575757"/>
<path d="M1073.9,359.5L1063.7,352.1L1062.6,350.4L1072.8,357.7Z" fill="#505050"/>
<path d="M1096.4,386.3L1087.7,377.4L1087.0,375.3L1095.7,384.2Z" fill="#656565"/>
<path d="M841.2,344.4L830.5,351.2L831.7,349.6L842.2,342.9Z" fill="#5d5d5d"/>
<path d="M786.8,415.1L780.4,425.3L780.5,423.0L786.8,412.7Z" fill="#6e6e6e"/>
<path d="M828.4,354.6L818.4,362.2L819.5,360.4L829.4,352.9Z" fill="#606060"/>
<path d="M996.8,316.8L984.3,314.3L983.6,313.6L995.9,316.1Z" fill="#4c4c4c"/>
<path d="M958.3,310.8L945.5,310.5L945.6,310.1L958.1,310.3Z" fill="#4c4c4c"/>
<path d="M945.5,310.5L932.8,311.1L933.0,310.6L945.6,310.1Z" fill="#4c4c4c"/>
<path d="M1105.8,402.4L1098.1,392.8L1097.6,390.6L1105.4,400.1Z" fill="#717171"/>
<path d="M906.9,315.1L894.4,317.9L895.3,317.2L907.6,314.4Z" fill="#4f4f4f"/>
<path d="M1048.4,339.3L1037.1,333.6L1036.0,332.3L1047.1,337.9Z" fill="#4c4c4c"/>
<path d="M805.0,380.4L796.5,389.5L797.2,387.3L805.6,378.3Z" fill="#676767"/>
<path d="M1085.4,371.3L1075.8,363.2L1074.9,361.3L1084.4,369.4Z" fill="#595959"/>
<path d="M971.1,311.8L958.3,310.8L958.1,310.3L970.6,311.3Z" fill="#4c4c4c"/>
<path d="M854.6,335.5L843.4,341.4L844.7,340.1L855.7,334.2Z" fill="#595959"/>
<path d="M932.8,311.1L920.1,312.3L920.6,311.8L933.0,310.6Z" fill="#4c4c4c"/>
<path d="M795.0,396.0L787.5,405.8L788.0,403.5L795.4,393.8Z" fill="#6a6a6a"/>
<path d="M816.5,365.9L807.2,374.3L808.2,372.3L817.4,364.0Z" fill="#636363"/>
<path d="M1113.3,419.4L1106.7,409.3L1106.5,407.0L1113.1,417.0Z" fill="#7c7c7c"/>
<path d="M983.6,313.6L971.1,311.8L970.6,311.3L982.9,313.0Z" fill="#4c4c4c"/>
<path d="M920.1,312.3L907.6,314.4L908.3,313.8L920.6,311.8Z" fill="#4c4c4c"/>
<path d="M786.8,412.7L780.5,423.0L780.6,420.6L787.0,410.4Z" fill="#6d6d6d"/>
<path d="M1022.0,325.1L1010.0,321.0L1009.0,320.1L1020.8,324.2Z" fill="#4c4c4c"/>
<path d="M1072.8,357.7L1062.6,350.4L1061.5,348.8L1071.6,356.0Z" fill="#4d4d4d"/>
<path d="M1095.7,384.2L1087.0,375.3L1086.2,373.3L1094.9,382.1Z" fill="#626262"/>
<path d="M881.3,322.4L869.5,326.7L870.7,325.7L882.3,321.5Z" fill="#535353"/>
<path d="M1060.3,347.2L1049.6,340.7L1048.4,339.3L1059.0,345.7Z" fill="#4c4c4c"/>
<path d="M1034.8,331.1L1023.1,326.2L1022.0,325.1L1033.5,329.9Z" fill="#4c4c4c"/>
<path d="M1105.4,400.1L1097.6,390.6L1097.1,388.4L1104.8,397.9Z" fill="#6e6e6e"/>
<path d="M1009.0,320.1L996.8,316.8L995.9,316.1L1007.9,319.4Z" fill="#4c4c4c"/>
<path d="M829.4,352.9L819.5,360.4L820.6,358.7L830.5,351.2Z" fill="#5f5f5f"/>
<path d="M868.4,327.8L856.9,332.9L858.2,331.8L869.5,326.7Z" fill="#565656"/>
<path d="M894.4,317.9L882.3,321.5L883.4,320.7L895.3,317.2Z" fill="#505050"/>
<path d="M842.2,342.9L831.7,349.6L833.0,348.1L843.4,341.4Z" fill="#5c5c5c"/>
<path d="M805.6,378.3L797.2,387.3L798.0,385.2L806.4,376.3Z" fill="#666666"/>
<path d="M1084.4,369.4L1074.9,361.3L1073.9,359.5L1083.3,367.5Z" fill="#565656"/>
<path d="M795.4,393.8L788.0,403.5L788.5,401.2L795.9,391.6Z" fill="#696969"/>
<path d="M1118.8,437.2L1113.4,426.6L1113.4,424.2L1118.9,434.7Z" fill="#868686"/>
<path d="M1047.1,337.9L1036.0,332.3L1034.8,331.1L1045.8,336.7Z" fill="#4c4c4c"/>
<path d="M1113.1,417.0L1106.5,407.0L1106.2,404.7L1112.8,414.7Z" fill="#797979"/>
<path d="M817.4,364.0L808.2,372.3L809.2,370.4L818.4,362.2Z" fill="#626262"/>
<path d="M995.9,316.1L983.6,313.6L982.9,313.0L995.0,315.5Z" fill="#4c4c4c"/>
<path d="M780.6,430.2L775.4,440.8L775.3,438.4L780.4,427.8Z" fill="#707070"/>
<path d="M855.7,334.2L844.7,340.1L846.0,338.7L856.9,332.9Z" fill="#585858"/>
<path d="M907.6,314.4L895.3,317.2L896.3,316.5L908.3,313.8Z" fill="#4e4e4e"/>
<path d="M958.1,310.3L945.6,310.1L945.6,309.7L957.9,309.9Z" fill="#4c4c4c"/>
<path d="M945.6,310.1L933.0,310.6L933.3,310.2L945.6,309.7Z" fill="#4c4c4c"/>
<path d="M787.0,410.4L780.6,420.6L780.9,418.2L787.2,408.0Z" fill="#6c6c6c"/>
<path d="M970.6,311.3L958.1,310.3L957.9,309.9L970.1,310.9Z" fill="#4c4c4c"/>
<path d="M933.0,310.6L920.6,311.8L921.1,311.4L933.3,310.2Z" fill="#4c4c4c"/>
<path d="M1094.9,382.1L1086.2,373.3L1085.4,371.3L1093.9,380.0Z" fill="#5e5e5e"/>
<path d="M1104.8,397.9L1097.1,388.4L1096.4,386.3L1104.1,395.7Z" fill="#6a6a6a"/>
<path d="M1071.6,356.0L1061.5,348.8L1060.3,347.2L1070.3,354.4Z" fill="#4c4c4c"/>
<path d="M1124.1,521.8L1122.6,510.5L1125.9,459.2L1127.5,470.6Z" fill="#858585"/>
<path d="M1118.9,434.7L1113.4,424.2L1113.4,421.8L1118.9,432.3Z" fill="#838383"/>
<path d="M806.4,376.3L798.0,385.2L798.9,383.2L807.2,374.3Z" fill="#656565"/>
<path d="M1059.0,345.7L1048.4,339.3L1047.1,337.9L1057.6,344.3Z" fill="#4c4c4c"/>
<path d="M795.9,391.6L788.5,401.2L789.1,399.0L796.5,389.5Z" fill="#686868"/>
<path d="M830.5,351.2L820.6,358.7L821.9,357.0L831.7,349.6Z" fill="#5e5e5e"/>
<path d="M1020.8,324.2L1009.0,320.1L1007.9,319.4L1019.5,323.3Z" fill="#4c4c4c"/>
<path d="M1083.3,367.5L1073.9,359.5L1072.8,357.7L1082.1,365.7Z" fill="#525252"/>
<path d="M1033.5,329.9L1022.0,325.1L1020.8,324.2L1032.1,328.9Z" fill="#4c4c4c"/>
<path d="M982.9,313.0L970.6,311.3L970.1,310.9L982.1,312.6Z" fill="#4c4c4c"/>
<path d="M1112.8,414.7L1106.2,404.7L1105.8,402.4L1112.4,412.4Z" fill="#757575"/>
<path d="M843.4,341.4L833.0,348.1L834.4,346.6L844.7,340.1Z" fill="#5a5a5a"/>
<path d="M882.3,321.5L870.7,325.7L872.0,324.9L883.4,320.7Z" fill="#525252"/>
<path d="M920.6,311.8L908.3,313.8L909.1,313.4L921.1,311.4Z" fill="#4c4c4c"/>
<path d="M780.4,427.8L775.3,438.4L775.3,436.0L780.4,425.3Z" fill="#6f6f6f"/>
<path d="M773.3,514.2L772.1,525.6L767.8,474.4L769.0,463.0Z" fill="#6d6d6d"/>
<path d="M869.5,326.7L858.2,331.8L859.6,330.7L870.7,325.7Z" fill="#545454"/>
<path d="M1007.9,319.4L995.9,316.1L995.0,315.5L1006.7,318.7Z" fill="#4c4c4c"/>
<path d="M818.4,362.2L809.2,370.4L810.4,368.5L819.5,360.4Z" fill="#616161"/>
<path d="M895.3,317.2L883.4,320.7L884.6,320.0L896.3,316.5Z" fill="#4f4f4f"/>
<path d="M787.2,408.0L780.9,418.2L781.2,415.9L787.5,405.8Z" fill="#6b6b6b"/>
<path d="M1045.8,336.7L1034.8,331.1L1033.5,329.9L1044.3,335.5Z" fill="#4c4c4c"/>
<path d="M856.9,332.9L846.0,338.7L847.5,337.5L858.2,331.8Z" fill="#575757"/>
<path d="M1104.1,395.7L1096.4,386.3L1095.7,384.2L1103.3,393.5Z" fill="#666666"/>
<path d="M1093.9,380.0L1085.4,371.3L1084.4,369.4L1092.9,378.0Z" fill="#5b5b5b"/>
<path d="M1118.9,432.3L1113.4,421.8L1113.3,419.4L1118.8,429.9Z" fill="#7f7f7f"/>
<path d="M995.0,315.5L982.9,313.0L982.1,312.6L994.0,315.1Z" fill="#4c4c4c"/>
<path d="M908.3,313.8L896.3,316.5L897.3,316.1L909.1,313.4Z" fill="#4c4c4c"/>
<path d="M796.5,389.5L789.1,399.0L789.9,396.8L797.2,387.3Z" fill="#676767"/>
<path d="M807.2,374.3L798.9,383.2L799.9,381.1L808.2,372.3Z" fill="#646464"/>
<path d="M1070.3,354.4L1060.3,347.2L1059.0,345.7L1068.9,352.8Z" fill="#4c4c4c"/>
<path d="M957.9,309.9L945.6,309.7L945.6,309.5L957.6,309.7Z" fill="#4c4c4c"/>
<path d="M1112.4,412.4L1105.8,402.4L1105.4,400.1L1111.9,410.1Z" fill="#727272"/>
<path d="M945.6,309.7L933.3,310.2L933.6,310.0L945.6,309.5Z" fill="#4c4c4c"/>
<path d="M780.4,425.3L775.3,436.0L775.3,433.6L780.5,423.0Z" fill="#6e6e6e"/>
<path d="M831.7,349.6L821.9,357.0L823.3,355.4L833.0,348.1Z" fill="#5c5c5c"/>
<path d="M1082.1,365.7L1072.8,357.7L1071.6,356.0L1080.8,363.9Z" fill="#4e4e4e"/>
<path d="M1057.6,344.3L1047.1,337.9L1045.8,336.7L1056.1,342.9Z" fill="#4c4c4c"/>
<path d="M970.1,310.9L957.9,309.9L957.6,309.7L969.5,310.7Z" fill="#4c4c4c"/>
<path d="M933.3,310.2L921.1,311.4L921.6,311.2L933.6,310.0Z" fill="#4c4c4c"/>
<path d="M787.5,405.8L781.2,415.9L781.7,413.6L788.0,403.5Z" fill="#6a6a6a"/>
<path d="M844.7,340.1L834.4,346.6L835.8,345.2L846.0,338.7Z" fill="#595959"/>
<path d="M819.5,360.4L810.4,368.5L811.7,366.7L820.6,358.7Z" fill="#606060"/>
<path d="M1019.5,323.3L1007.9,319.4L1006.7,318.7L1018.1,322.6Z" fill="#4c4c4c"/>
<path d="M1032.1,328.9L1020.8,324.2L1019.5,323.3L1030.6,328.0Z" fill="#4c4c4c"/>
<path d="M883.4,320.7L872.0,324.9L873.4,324.1L884.6,320.0Z" fill="#515151"/>
<path d="M870.7,325.7L859.6,330.7L861.1,329.8L872.0,324.9Z" fill="#535353"/>
<path d="M1118.8,429.9L1113.3,419.4L1113.1,417.0L1118.6,427.5Z" fill="#7c7c7c"/>
<path d="M1103.3,393.5L1095.7,384.2L1094.9,382.1L1102.4,391.4Z" fill="#636363"/>
<path d="M982.1,312.6L970.1,310.9L969.5,310.7L981.3,312.4Z" fill="#4c4c4c"/>
<path d="M1092.9,378.0L1084.4,369.4L1083.3,367.5L1091.7,376.1Z" fill="#575757"/>
<path d="M921.1,311.4L909.1,313.4L909.9,313.1L921.6,311.2Z" fill="#4c4c4c"/>
<path d="M1006.7,318.7L995.0,315.5L994.0,315.1L1005.5,318.2Z" fill="#4c4c4c"/>
<path d="M1044.3,335.5L1033.5,329.9L1032.1,328.9L1042.7,334.3Z" fill="#4c4c4c"/>
<path d="M896.3,316.5L884.6,320.0L885.9,319.4L897.3,316.1Z" fill="#4e4e4e"/>
<path d="M797.2,387.3L789.9,396.8L790.7,394.7L798.0,385.2Z" fill="#666666"/>
<path d="M780.5,423.0L775.3,433.6L775.5,431.2L780.6,420.6Z" fill="#6d6d6d"/>
<path d="M1111.9,410.1L1105.4,400.1L1104.8,397.9L1111.3,407.8Z" fill="#6e6e6e"/>
<path d="M808.2,372.3L799.9,381.1L801.1,379.1L809.2,370.4Z" fill="#626262"/>
<path d="M858.2,331.8L847.5,337.5L849.0,336.4L859.6,330.7Z" fill="#565656"/>
<path d="M1068.9,352.8L1059.0,345.7L1057.6,344.3L1067.4,351.3Z" fill="#4c4c4c"/>
<path d="M788.0,403.5L781.7,413.6L782.2,411.3L788.5,401.2Z" fill="#696969"/>
<path d="M1080.8,363.9L1071.6,356.0L1070.3,354.4L1079.4,362.1Z" fill="#4c4c4c"/>
<path d="M833.0,348.1L823.3,355.4L824.8,353.8L834.4,346.6Z" fill="#5b5b5b"/>
<path d="M994.0,315.1L982.1,312.6L981.3,312.4L992.9,314.7Z" fill="#4c4c4c"/>
<path d="M1056.1,342.9L1045.8,336.7L1044.3,335.5L1054.5,341.6Z" fill="#4c4c4c"/>
<path d="M1123.0,448.1L1118.8,437.2L1118.9,434.7L1123.1,445.6Z" fill="#868686"/>
<path d="M909.1,313.4L897.3,316.1L898.4,315.7L909.9,313.1Z" fill="#4c4c4c"/>
<path d="M820.6,358.7L811.7,366.7L813.0,364.9L821.9,357.0Z" fill="#5e5e5e"/>
<path d="M1118.6,427.5L1113.1,417.0L1112.8,414.7L1118.3,425.2Z" fill="#797979"/>
<path d="M846.0,338.7L835.8,345.2L837.5,343.9L847.5,337.5Z" fill="#585858"/>
<path d="M1102.4,391.4L1094.9,382.1L1093.9,380.0L1101.4,389.3Z" fill="#5f5f5f"/>
<path d="M957.6,309.7L945.6,309.5L945.6,309.4L957.3,309.7Z" fill="#4c4c4c"/>
<path d="M945.6,309.5L933.6,310.0L933.9,309.9L945.6,309.4Z" fill="#4c4c4c"/>
<path d="M775.4,440.8L771.6,451.8L771.4,449.4L775.3,438.4Z" fill="#6f6f6f"/>
<path d="M1091.7,376.1L1083.3,367.5L1082.1,365.7L1090.5,374.2Z" fill="#535353"/>
<path d="M780.6,420.6L775.5,431.2L775.7,428.8L780.9,418.2Z" fill="#6c6c6c"/>
<path d="M1111.3,407.8L1104.8,397.9L1104.1,395.7L1110.6,405.6Z" fill="#6a6a6a"/>
<path d="M798.0,385.2L790.7,394.7L791.7,392.6L798.9,383.2Z" fill="#656565"/>
<path d="M969.5,310.7L957.6,309.7L957.3,309.7L969.0,310.6Z" fill="#4c4c4c"/>
<path d="M1030.6,328.0L1019.5,323.3L1018.1,322.6L1028.9,327.2Z" fill="#4c4c4c"/>
<path d="M933.6,310.0L921.6,311.2L922.2,311.1L933.9,309.9Z" fill="#4c4c4c"/>
<path d="M1018.1,322.6L1006.7,318.7L1005.5,318.2L1016.6,322.0Z" fill="#4c4c4c"/>
<path d="M809.2,370.4L801.1,379.1L802.3,377.2L810.4,368.5Z" fill="#616161"/>
<path d="M872.0,324.9L861.1,329.8L862.7,328.9L873.4,324.1Z" fill="#525252"/>
<path d="M884.6,320.0L873.4,324.1L874.9,323.5L885.9,319.4Z" fill="#4f4f4f"/>
<path d="M788.5,401.2L782.2,411.3L782.9,409.1L789.1,399.0Z" fill="#686868"/>
<path d="M1042.7,334.3L1032.1,328.9L1030.6,328.0L1041.1,333.3Z" fill="#4c4c4c"/>
<path d="M1123.1,445.6L1118.9,434.7L1118.9,432.3L1123.1,443.2Z" fill="#828282"/>
<path d="M859.6,330.7L849.0,336.4L850.7,335.3L861.1,329.8Z" fill="#545454"/>
<path d="M1005.5,318.2L994.0,315.1L992.9,314.7L1004.1,317.8Z" fill="#4c4c4c"/>
<path d="M1067.4,351.3L1057.6,344.3L1056.1,342.9L1065.7,349.8Z" fill="#4c4c4c"/>
<path d="M1118.3,425.2L1112.8,414.7L1112.4,412.4L1117.9,422.8Z" fill="#757575"/>
<path d="M1079.4,362.1L1070.3,354.4L1068.9,352.8L1077.9,360.5Z" fill="#4c4c4c"/>
<path d="M1124.3,533.2L1124.1,521.8L1127.5,470.6L1127.7,482.0Z" fill="#838383"/>
<path d="M897.3,316.1L885.9,319.4L887.2,319.0L898.4,315.7Z" fill="#4d4d4d"/>
<path d="M834.4,346.6L824.8,353.8L826.5,352.3L835.8,345.2Z" fill="#5a5a5a"/>
<path d="M775.3,438.4L771.4,449.4L771.4,447.0L775.3,436.0Z" fill="#6e6e6e"/>
<path d="M1101.4,389.3L1093.9,380.0L1092.9,378.0L1100.3,387.2Z" fill="#5b5b5b"/>
<path d="M821.9,357.0L813.0,364.9L814.5,363.2L823.3,355.4Z" fill="#5d5d5d"/>
<path d="M780.9,418.2L775.7,428.8L776.1,426.5L781.2,415.9Z" fill="#6b6b6b"/>
<path d="M772.1,525.6L772.3,537.0L767.9,485.9L767.8,474.4Z" fill="#6c6c6c"/>
<path d="M1054.5,341.6L1044.3,335.5L1042.7,334.3L1052.8,340.4Z" fill="#4c4c4c"/>
<path d="M1110.6,405.6L1104.1,395.7L1103.3,393.5L1109.8,403.4Z" fill="#676767"/>
<path d="M1090.5,374.2L1082.1,365.7L1080.8,363.9L1089.1,372.3Z" fill="#505050"/>
<path d="M798.9,383.2L791.7,392.6L792.7,390.5L799.9,381.1Z" fill="#646464"/>
<path d="M847.5,337.5L837.5,343.9L839.2,342.6L849.0,336.4Z" fill="#575757"/>
<path d="M789.1,399.0L782.9,409.1L783.7,406.8L789.9,396.8Z" fill="#676767"/>
<path d="M810.4,368.5L802.3,377.2L803.6,375.3L811.7,366.7Z" fill="#606060"/>
<path d="M1123.1,443.2L1118.9,432.3L1118.8,429.9L1123.0,440.8Z" fill="#7f7f7f"/>
<path d="M1117.9,422.8L1112.4,412.4L1111.9,410.1L1117.3,420.5Z" fill="#727272"/>
<path d="M775.3,436.0L771.4,447.0L771.4,444.5L775.3,433.6Z" fill="#6d6d6d"/>
<path d="M781.2,415.9L776.1,426.5L776.6,424.1L781.7,413.6Z" fill="#6a6a6a"/>
<path d="M1077.9,360.5L1068.9,352.8L1067.4,351.3L1076.2,358.8Z" fill="#4c4c4c"/>
<path d="M1041.1,333.3L1030.6,328.0L1028.9,327.2L1039.2,332.4Z" fill="#4c4c4c"/>
<path d="M1065.7,349.8L1056.1,342.9L1054.5,341.6L1063.9,348.4Z" fill="#4c4c4c"/>
<path d="M1100.3,387.2L1092.9,378.0L1091.7,376.1L1099.1,385.2Z" fill="#585858"/>
<path d="M1109.8,403.4L1103.3,393.5L1102.4,391.4L1108.9,401.2Z" fill="#636363"/>
<path d="M823.3,355.4L814.5,363.2L816.2,361.6L824.8,353.8Z" fill="#5c5c5c"/>
<path d="M835.8,345.2L826.5,352.3L828.2,350.9L837.5,343.9Z" fill="#595959"/>
<path d="M799.9,381.1L792.7,390.5L793.9,388.4L801.1,379.1Z" fill="#636363"/>
<path d="M1089.1,372.3L1080.8,363.9L1079.4,362.1L1087.6,370.4Z" fill="#4c4c4c"/>
<path d="M789.9,396.8L783.7,406.8L784.6,404.6L790.7,394.7Z" fill="#666666"/>
<path d="M1123.0,440.8L1118.8,429.9L1118.6,427.5L1122.8,438.4Z" fill="#7c7c7c"/>
<path d="M811.7,366.7L803.6,375.3L805.1,373.4L813.0,364.9Z" fill="#5f5f5f"/>
<path d="M1117.3,420.5L1111.9,410.1L1111.3,407.8L1116.7,418.2Z" fill="#6e6e6e"/>
<path d="M775.3,433.6L771.4,444.5L771.6,442.1L775.5,431.2Z" fill="#6c6c6c"/>
<path d="M781.7,413.6L776.6,424.1L777.1,421.8L782.2,411.3Z" fill="#696969"/>
<path d="M1099.1,385.2L1091.7,376.1L1090.5,374.2L1097.8,383.2Z" fill="#545454"/>
<path d="M1108.9,401.2L1102.4,391.4L1101.4,389.3L1107.9,399.0Z" fill="#606060"/>
<path d="M1076.2,358.8L1067.4,351.3L1065.7,349.8L1074.5,357.2Z" fill="#4c4c4c"/>
<path d="M801.1,379.1L793.9,388.4L795.2,386.4L802.3,377.2Z" fill="#616161"/>
<path d="M1122.8,438.4L1118.6,427.5L1118.3,425.2L1122.5,436.0Z" fill="#787878"/>
<path d="M790.7,394.7L784.6,404.6L785.5,402.4L791.7,392.6Z" fill="#656565"/>
<path d="M824.8,353.8L816.2,361.6L817.9,359.9L826.5,352.3Z" fill="#5a5a5a"/>
<path d="M1125.9,459.2L1123.0,448.1L1123.1,445.6L1126.0,456.8Z" fill="#858585"/>
<path d="M1087.6,370.4L1079.4,362.1L1077.9,360.5L1086.0,368.7Z" fill="#4c4c4c"/>
<path d="M1116.7,418.2L1111.3,407.8L1110.6,405.6L1116.0,415.9Z" fill="#6b6b6b"/>
<path d="M775.5,431.2L771.6,442.1L771.9,439.7L775.7,428.8Z" fill="#6b6b6b"/>
<path d="M771.6,451.8L769.0,463.0L768.8,460.6L771.4,449.4Z" fill="#6e6e6e"/>
<path d="M813.0,364.9L805.1,373.4L806.7,371.6L814.5,363.2Z" fill="#5d5d5d"/>
<path d="M782.2,411.3L777.1,421.8L777.8,419.5L782.9,409.1Z" fill="#686868"/>
<path d="M1107.9,399.0L1101.4,389.3L1100.3,387.2L1106.7,396.8Z" fill="#5c5c5c"/>
<path d="M1097.8,383.2L1090.5,374.2L1089.1,372.3L1096.3,381.2Z" fill="#505050"/>
<path d="M1122.5,436.0L1118.3,425.2L1117.9,422.8L1122.0,433.6Z" fill="#757575"/>
<path d="M1126.0,456.8L1123.1,445.6L1123.1,443.2L1126.0,454.3Z" fill="#828282"/>
<path d="M791.7,392.6L785.5,402.4L786.7,400.2L792.7,390.5Z" fill="#646464"/>
<path d="M802.3,377.2L795.2,386.4L796.6,384.4L803.6,375.3Z" fill="#606060"/>
<path d="M1116.0,415.9L1110.6,405.6L1109.8,403.4L1115.1,413.6Z" fill="#676767"/>
<path d="M775.7,428.8L771.9,439.7L772.2,437.3L776.1,426.5Z" fill="#6a6a6a"/>
<path d="M771.4,449.4L768.8,460.6L768.8,458.2L771.4,447.0Z" fill="#6d6d6d"/>
<path d="M782.9,409.1L777.8,419.5L778.6,417.2L783.7,406.8Z" fill="#676767"/>
<path d="M1106.7,396.8L1100.3,387.2L1099.1,385.2L1105.4,394.7Z" fill="#585858"/>
<path d="M1126.0,454.3L1123.1,443.2L1123.0,440.8L1125.9,451.9Z" fill="#7e7e7e"/>
<path d="M1122.0,433.6L1117.9,422.8L1117.3,420.5L1121.5,431.2Z" fill="#717171"/>
<path d="M792.7,390.5L786.7,400.2L787.9,398.1L793.9,388.4Z" fill="#626262"/>
<path d="M771.4,447.0L768.8,458.2L768.8,455.7L771.4,444.5Z" fill="#6c6c6c"/>
<path d="M776.1,426.5L772.2,437.3L772.7,435.0L776.6,424.1Z" fill="#696969"/>
<path d="M1115.1,413.6L1109.8,403.4L1108.9,401.2L1114.2,411.3Z" fill="#636363"/>
<path d="M783.7,406.8L778.6,417.2L779.6,414.9L784.6,404.6Z" fill="#666666"/>
<path d="M1125.9,451.9L1123.0,440.8L1122.8,438.4L1125.7,449.5Z" fill="#7b7b7b"/>
<path d="M1121.5,431.2L1117.3,420.5L1116.7,418.2L1120.9,428.9Z" fill="#6e6e6e"/>
<path d="M771.4,444.5L768.8,455.7L769.0,453.3L771.6,442.1Z" fill="#6b6b6b"/>
<path d="M776.6,424.1L772.7,435.0L773.3,432.6L777.1,421.8Z" fill="#686868"/>
<path d="M1114.2,411.3L1108.9,401.2L1107.9,399.0L1113.1,409.1Z" fill="#606060"/>
<path d="M784.6,404.6L779.6,414.9L780.6,412.6L785.5,402.4Z" fill="#646464"/>
<path d="M1125.7,449.5L1122.8,438.4L1122.5,436.0L1125.4,447.1Z" fill="#777777"/>
<path d="M1120.9,428.9L1116.7,418.2L1116.0,415.9L1120.1,426.5Z" fill="#6a6a6a"/>
<path d="M1127.5,470.6L1125.9,459.2L1126.0,456.8L1127.6,468.1Z" fill="#848484"/>
<path d="M771.6,442.1L769.0,453.3L769.3,450.9L771.9,439.7Z" fill="#6a6a6a"/>
<path d="M777.1,421.8L773.3,432.6L774.0,430.2L777.8,419.5Z" fill="#676767"/>
<path d="M769.0,463.0L767.8,474.4L767.6,472.0L768.8,460.6Z" fill="#6d6d6d"/>
<path d="M1125.4,447.1L1122.5,436.0L1122.0,433.6L1124.9,444.6Z" fill="#747474"/>
<path d="M1127.6,468.1L1126.0,456.8L1126.0,454.3L1127.6,465.7Z" fill="#808080"/>
<path d="M1120.1,426.5L1116.0,415.9L1115.1,413.6L1119.2,424.2Z" fill="#676767"/>
<path d="M771.9,439.7L769.3,450.9L769.7,448.4L772.2,437.3Z" fill="#696969"/>
<path d="M768.8,460.6L767.6,472.0L767.5,469.5L768.8,458.2Z" fill="#6c6c6c"/>
<path d="M777.8,419.5L774.0,430.2L774.8,427.8L778.6,417.2Z" fill="#666666"/>
<path d="M1124.9,444.6L1122.0,433.6L1121.5,431.2L1124.4,442.2Z" fill="#707070"/>
<path d="M1127.6,465.7L1126.0,454.3L1125.9,451.9L1127.5,463.2Z" fill="#7d7d7d"/>
<path d="M772.2,437.3L769.7,448.4L770.2,446.0L772.7,435.0Z" fill="#686868"/>
<path d="M768.8,458.2L767.5,469.5L767.6,467.1L768.8,455.7Z" fill="#6b6b6b"/>
<path d="M1127.5,463.2L1125.9,451.9L1125.7,449.5L1127.3,460.8Z" fill="#7a7a7a"/>
<path d="M768.8,455.7L767.6,467.1L767.8,464.6L769.0,453.3Z" fill="#6a6a6a"/>
<path d="M1127.3,460.8L1125.7,449.5L1125.4,447.1L1126.9,458.3Z" fill="#767676"/>
<path d="M1127.7,482.0L1127.5,470.6L1127.6,468.1L1127.8,479.6Z" fill="#828282"/>
<path d="M767.8,474.4L767.9,485.9L767.7,483.4L767.6,472.0Z" fill="#6b6b6b"/>
<path d="M1127.8,479.6L1127.6,468.1L1127.6,465.7L1127.8,477.1Z" fill="#7f7f7f"/>
<path d="M767.6,472.0L767.7,483.4L767.7,481.0L767.5,469.5Z" fill="#6a6a6a"/>
<path d="M1103.9,467.9L1100.9,464.0L1097.9,460.2L1094.6,456.4L1091.2,452.8L1087.6,449.2L1083.9,445.8L1080.0,442.4L1075.9,439.2L1071.7,436.0L1067.4,433.0L1063.0,430.1L1058.4,427.3L1053.7,424.6L1048.9,422.0L1044.0,419.6L1039.0,417.3L1033.8,415.1L1028.6,413.1L1023.3,411.1L1018.0,409.4L1012.5,407.7L1007.0,406.2L1001.4,404.8L995.7,403.6L990.0,402.5L984.3,401.6L978.5,400.7L972.7,400.1L966.9,399.6L961.0,399.2L955.2,399.0L949.3,398.9L943.4,398.9L937.5,399.1L931.7,399.5L925.8,400.0L920.0,400.6L914.2,401.4L908.5,402.4L902.8,403.4L897.1,404.6L891.5,406.0L885.9,407.5L880.5,409.1L875.1,410.9L869.7,412.8L864.5,414.8L859.3,417.0L854.3,419.3L849.3,421.7L844.5,424.2L839.7,426.9L835.1,429.7L830.6,432.6L826.2,435.6L822.0,438.7L817.9,441.9L814.0,445.3L810.2,448.7L806.5,452.3L803.1,455.9L799.7,459.6L796.6,463.4L793.6,467.3L790.8,471.3L788.2,475.3L785.8,479.4L783.5,483.6L781.5,487.8L779.6,492.1L777.9,496.5L776.5,500.8L775.2,505.3L774.2,509.7L773.3,514.2L772.7,518.8L772.3,523.3L772.0,527.9L772.0,532.4L772.3,537.0L772.7,541.6L773.4,546.1L774.2,550.7L775.3,555.2L776.6,559.7L778.1,564.2L779.9,568.6L781.8,573.0L784.0,577.4L786.3,581.6L788.9,585.9L791.7,590.0L794.7,594.1L797.9,598.2L801.3,602.1L804.8,605.9L808.6,609.7L812.6,613.4L816.7,616.9L821.0,620.4L825.5,623.7L830.1,626.9L834.9,630.0L839.9,633.0L845.0,635.8L850.2,638.5L855.6,641.0L861.1,643.4L866.7,645.7L872.4,647.8L878.3,649.7L884.2,651.5L890.2,653.2L896.3,654.6L902.5,655.9L908.7,657.1L915.0,658.0L921.4,658.8L927.7,659.5L934.1,659.9L940.6,660.2L947.0,660.3L953.4,660.2L959.8,660.0L966.3,659.6L972.6,659.0L979.0,658.2L985.3,657.3L991.6,656.2L997.8,654.9L1003.9,653.4L1009.9,651.8L1015.9,650.1L1021.8,648.1L1027.6,646.1L1033.2,643.8L1038.8,641.5L1044.2,638.9L1049.5,636.3L1054.6,633.5L1059.6,630.5L1064.5,627.5L1069.2,624.3L1073.8,620.9L1078.1,617.5L1082.3,614.0L1086.3,610.3L1090.2,606.6L1093.8,602.8L1097.3,598.8L1100.6,594.8L1103.6,590.7L1106.5,586.6L1109.1,582.4L1111.6,578.1L1113.8,573.7L1115.9,569.3L1117.7,564.9L1119.3,560.4L1120.6,555.9L1121.8,551.4L1122.8,546.9L1123.5,542.3L1124.0,537.7L1124.3,533.2L1124.4,528.6L1124.3,524.0L1123.9,519.5L1123.4,515.0L1122.6,510.5L1121.6,506.0L1120.4,501.5L1119.1,497.1L1117.5,492.8L1115.7,488.5L1113.7,484.2L1111.5,480.1L1109.1,475.9L1106.6,471.9ZM997.7,505.9L996.8,504.7L995.9,503.4L994.9,502.2L993.8,501.0L992.7,499.9L991.6,498.8L990.4,497.7L989.1,496.6L987.8,495.6L986.4,494.6L985.0,493.6L983.6,492.7L982.1,491.8L980.6,491.0L979.0,490.2L977.4,489.4L975.8,488.7L974.1,488.0L972.4,487.4L970.7,486.8L968.9,486.2L967.2,485.7L965.4,485.3L963.5,484.9L961.7,484.5L959.9,484.2L958.0,483.9L956.1,483.7L954.2,483.5L952.3,483.4L950.4,483.3L948.5,483.3L946.6,483.3L944.7,483.4L942.8,483.5L941.0,483.7L939.1,483.9L937.2,484.2L935.4,484.5L933.5,484.8L931.7,485.2L929.9,485.7L928.1,486.2L926.3,486.7L924.6,487.3L922.9,487.9L921.2,488.6L919.6,489.3L918.0,490.1L916.4,490.9L914.8,491.7L913.3,492.6L911.9,493.5L910.5,494.4L909.1,495.4L907.8,496.5L906.5,497.5L905.3,498.6L904.1,499.7L903.0,500.9L901.9,502.0L900.9,503.2L899.9,504.5L899.0,505.7L898.2,507.0L897.4,508.3L896.7,509.6L896.0,511.0L895.4,512.3L894.9,513.7L894.4,515.1L894.0,516.5L893.7,517.9L893.4,519.3L893.2,520.7L893.0,522.1L893.0,523.6L893.0,525.0L893.0,526.4L893.1,527.8L893.3,529.3L893.6,530.7L893.9,532.1L894.3,533.5L894.8,534.9L895.3,536.3L895.9,537.6L896.6,539.0L897.3,540.3L898.1,541.6L898.9,542.9L899.8,544.2L900.8,545.4L901.8,546.6L902.9,547.8L904.1,549.0L905.3,550.1L906.5,551.2L907.8,552.3L909.2,553.3L910.6,554.3L912.0,555.3L913.5,556.2L915.1,557.1L916.6,557.9L918.3,558.7L919.9,559.5L921.6,560.2L923.3,560.9L925.1,561.5L926.9,562.1L928.7,562.6L930.5,563.1L932.4,563.5L934.3,563.9L936.2,564.2L938.1,564.5L940.0,564.8L942.0,564.9L943.9,565.1L945.9,565.2L947.8,565.2L949.8,565.2L951.7,565.1L953.7,565.0L955.6,564.8L957.6,564.6L959.5,564.3L961.4,564.0L963.3,563.6L965.1,563.2L967.0,562.7L968.8,562.2L970.6,561.6L972.4,561.0L974.1,560.3L975.8,559.6L977.5,558.9L979.1,558.1L980.7,557.2L982.3,556.4L983.8,555.4L985.3,554.5L986.7,553.5L988.1,552.5L989.4,551.4L990.7,550.3L991.9,549.2L993.0,548.0L994.1,546.8L995.2,545.6L996.2,544.4L997.1,543.1L998.0,541.8L998.8,540.5L999.5,539.2L1000.2,537.8L1000.8,536.5L1001.4,535.1L1001.9,533.7L1002.3,532.3L1002.7,530.9L1002.9,529.5L1003.2,528.1L1003.3,526.6L1003.4,525.2L1003.4,523.8L1003.4,522.4L1003.3,520.9L1003.1,519.5L1002.8,518.1L1002.5,516.7L1002.1,515.3L1001.7,513.9L1001.2,512.5L1000.6,511.2L1000.0,509.8L999.3,508.5L998.5,507.2Z" fill-rule="evenodd" fill="#d4d4d4" shape-rendering="auto"/>
<path d="M952.1,529.5L948.1,529.4L947.2,440.4L951.3,440.5Z" fill="#727272"/>
<path d="M948.1,529.4L944.1,529.6L943.0,440.6L947.2,440.4Z" fill="#707070"/>
<path d="M956.1,529.8L952.1,529.5L951.3,440.5L955.5,440.8Z" fill="#747474"/>
<path d="M944.1,529.6L940.1,530.0L938.9,441.0L943.0,440.6Z" fill="#6e6e6e"/>
<path d="M960.0,530.4L956.1,529.8L955.5,440.8L959.6,441.4Z" fill="#757575"/>
<path d="M940.1,530.0L936.2,530.7L934.9,441.7L938.9,441.0Z" fill="#6b6b6b"/>
<path d="M963.8,531.3L960.0,530.4L959.6,441.4L963.5,442.3Z" fill="#777777"/>
<path d="M936.2,530.7L932.4,531.6L930.9,442.6L934.9,441.7Z" fill="#686868"/>
<path d="M967.6,532.4L963.8,531.3L963.5,442.3L967.4,443.4Z" fill="#777777"/>
<path d="M932.4,531.6L928.7,532.8L927.1,443.8L930.9,442.6Z" fill="#686868"/>
<path d="M971.2,533.7L967.6,532.4L967.4,443.4L971.1,444.7Z" fill="#787878"/>
<path d="M928.7,532.8L925.1,534.2L923.4,445.3L927.1,443.8Z" fill="#6a6a6a"/>
<path d="M974.6,535.3L971.2,533.7L971.1,444.7L974.7,446.3Z" fill="#7b7b7b"/>
<path d="M925.1,534.2L921.8,535.9L919.9,446.9L923.4,445.3Z" fill="#6c6c6c"/>
<path d="M977.8,537.1L974.6,535.3L974.7,446.3L978.1,448.1Z" fill="#7e7e7e"/>
<path d="M921.8,535.9L918.6,537.7L916.6,448.8L919.9,446.9Z" fill="#6d6d6d"/>
<path d="M980.8,539.1L977.8,537.1L978.1,448.1L981.2,450.1Z" fill="#818181"/>
<path d="M918.6,537.7L915.6,539.8L913.5,450.8L916.6,448.8Z" fill="#6f6f6f"/>
<path d="M983.6,541.2L980.8,539.1L981.2,450.1L984.1,452.3Z" fill="#838383"/>
<path d="M915.6,539.8L912.9,542.0L910.7,453.1L913.5,450.8Z" fill="#6f6f6f"/>
<path d="M986.1,543.6L983.6,541.2L984.1,452.3L986.7,454.7Z" fill="#858585"/>
<path d="M912.9,542.0L910.5,544.4L908.1,455.5L910.7,453.1Z" fill="#707070"/>
<path d="M988.3,546.1L986.1,543.6L986.7,454.7L989.0,457.2Z" fill="#868686"/>
<path d="M910.5,544.4L908.3,547.0L905.9,458.1L908.1,455.5Z" fill="#717171"/>
<path d="M990.3,548.8L988.3,546.1L989.0,457.2L991.0,459.9Z" fill="#878787"/>
<path d="M908.3,547.0L906.4,549.7L903.9,460.8L905.9,458.1Z" fill="#717171"/>
<path d="M991.9,551.5L990.3,548.8L991.0,459.9L992.7,462.7Z" fill="#888888"/>
<path d="M906.4,549.7L904.9,552.5L902.3,463.6L903.9,460.8Z" fill="#707070"/>
<path d="M993.2,554.4L991.9,551.5L992.7,462.7L994.1,465.6Z" fill="#888888"/>
<path d="M904.9,552.5L903.7,555.4L901.1,466.6L902.3,463.6Z" fill="#707070"/>
<path d="M994.2,557.4L993.2,554.4L994.1,465.6L995.1,468.5Z" fill="#878787"/>
<path d="M903.7,555.4L902.8,558.4L900.2,469.6L901.1,466.6Z" fill="#6f6f6f"/>
<path d="M994.8,560.4L994.2,557.4L995.1,468.5L995.7,471.6Z" fill="#868686"/>
<path d="M902.8,558.4L902.3,561.4L899.6,472.6L900.2,469.6Z" fill="#6e6e6e"/>
<path d="M995.1,563.4L994.8,560.4L995.7,471.6L996.0,474.6Z" fill="#858585"/>
<path d="M902.3,561.4L902.1,564.4L899.4,475.7L899.6,472.6Z" fill="#6d6d6d"/>
<path d="M892.9,524.3L893.1,527.8L891.5,479.3L891.3,475.8Z" fill="#858585"/>
<path d="M893.1,527.8L893.8,531.4L892.1,482.9L891.5,479.3Z" fill="#868686"/>
<path d="M893.8,531.4L894.8,534.9L893.2,486.4L892.1,482.9Z" fill="#878787"/>
<path d="M894.8,534.9L896.2,538.3L894.7,489.8L893.2,486.4Z" fill="#888888"/>
<path d="M896.2,538.3L898.1,541.6L896.5,493.2L894.7,489.8Z" fill="#888888"/>
<path d="M898.1,541.6L900.3,544.8L898.8,496.4L896.5,493.2Z" fill="#878787"/>
<path d="M900.3,544.8L902.9,547.8L901.5,499.4L898.8,496.4Z" fill="#868686"/>
<path d="M902.9,547.8L905.9,550.7L904.5,502.3L901.5,499.4Z" fill="#858585"/>
<path d="M905.9,550.7L909.2,553.3L907.9,504.9L904.5,502.3Z" fill="#838383"/>
<path d="M909.2,553.3L912.8,555.8L911.5,507.4L907.9,504.9Z" fill="#818181"/>
<path d="M912.8,555.8L916.6,557.9L915.5,509.6L911.5,507.4Z" fill="#7e7e7e"/>
<path d="M916.6,557.9L920.8,559.9L919.7,511.5L915.5,509.6Z" fill="#7b7b7b"/>
<path d="M920.8,559.9L925.1,561.5L924.1,513.1L919.7,511.5Z" fill="#787878"/>
<path d="M925.1,561.5L929.6,562.9L928.7,514.5L924.1,513.1Z" fill="#777777"/>
<path d="M929.6,562.9L934.3,563.9L933.5,515.5L928.7,514.5Z" fill="#777777"/>
<path d="M934.3,563.9L939.1,564.7L938.4,516.3L933.5,515.5Z" fill="#757575"/>
<path d="M939.1,564.7L943.9,565.1L943.3,516.7L938.4,516.3Z" fill="#747474"/>
<path d="M943.9,565.1L948.8,565.2L948.3,516.8L943.3,516.7Z" fill="#727272"/>
<path d="M948.8,565.2L953.7,565.0L953.3,516.6L948.3,516.8Z" fill="#707070"/>
<path d="M953.7,565.0L958.5,564.4L958.2,516.1L953.3,516.6Z" fill="#6e6e6e"/>
<path d="M958.5,564.4L963.3,563.6L963.1,515.2L958.2,516.1Z" fill="#6b6b6b"/>
<path d="M963.3,563.6L967.9,562.4L967.8,514.1L963.1,515.2Z" fill="#686868"/>
<path d="M967.9,562.4L972.4,561.0L972.4,512.6L967.8,514.1Z" fill="#686868"/>
<path d="M972.4,561.0L976.7,559.2L976.8,510.9L972.4,512.6Z" fill="#6a6a6a"/>
<path d="M976.7,559.2L980.7,557.2L980.9,508.8L976.8,510.9Z" fill="#6c6c6c"/>
<path d="M980.7,557.2L984.5,555.0L984.8,506.6L980.9,508.8Z" fill="#6d6d6d"/>
<path d="M984.5,555.0L988.1,552.5L988.4,504.1L984.8,506.6Z" fill="#6f6f6f"/>
<path d="M988.1,552.5L991.3,549.8L991.7,501.3L988.4,504.1Z" fill="#6f6f6f"/>
<path d="M991.3,549.8L994.1,546.8L994.6,498.4L991.7,501.3Z" fill="#707070"/>
<path d="M994.1,546.8L996.7,543.8L997.2,495.3L994.6,498.4Z" fill="#717171"/>
<path d="M996.7,543.8L998.8,540.5L999.4,492.1L997.2,495.3Z" fill="#717171"/>
<path d="M998.8,540.5L1000.5,537.2L1001.2,488.7L999.4,492.1Z" fill="#707070"/>
<path d="M1000.5,537.2L1001.9,533.7L1002.5,485.2L1001.2,488.7Z" fill="#707070"/>
<path d="M1001.9,533.7L1002.8,530.2L1003.5,481.7L1002.5,485.2Z" fill="#6f6f6f"/>
<path d="M1002.8,530.2L1003.3,526.6L1004.0,478.1L1003.5,481.7Z" fill="#6e6e6e"/>
<path d="M1003.3,526.6L1003.4,523.1L1004.1,474.5L1004.0,478.1Z" fill="#6d6d6d"/>
<path d="M998.2,457.3L997.3,456.1L996.4,454.8L995.4,453.6L994.3,452.4L993.2,451.3L992.0,450.2L990.7,449.1L989.5,448.0L988.1,447.0L986.7,446.0L985.3,445.0L983.8,444.1L982.3,443.2L980.8,442.4L979.2,441.6L977.5,440.8L975.9,440.1L974.2,439.4L972.4,438.7L970.7,438.1L968.9,437.6L967.1,437.1L965.2,436.6L963.4,436.2L961.5,435.9L959.6,435.5L957.7,435.3L955.8,435.1L953.9,434.9L952.0,434.8L950.0,434.7L948.1,434.7L946.1,434.7L944.2,434.7L942.3,434.9L940.3,435.0L938.4,435.2L936.5,435.5L934.6,435.8L932.7,436.2L930.9,436.6L929.0,437.0L927.2,437.5L925.4,438.1L923.6,438.7L921.9,439.3L920.2,440.0L918.5,440.7L916.9,441.4L915.3,442.2L913.7,443.1L912.1,444.0L910.7,444.9L909.2,445.8L907.8,446.8L906.5,447.8L905.2,448.9L903.9,450.0L902.7,451.1L901.6,452.3L900.5,453.5L899.4,454.7L898.4,455.9L897.5,457.2L896.7,458.4L895.9,459.7L895.1,461.1L894.4,462.4L893.8,463.8L893.3,465.1L892.8,466.5L892.4,467.9L892.0,469.3L891.8,470.7L891.6,472.2L891.4,473.6L891.3,475.0L891.3,476.5L891.4,477.9L891.5,479.3L891.7,480.8L892.0,482.2L892.3,483.6L892.7,485.0L893.2,486.4L893.7,487.8L894.3,489.2L895.0,490.5L895.7,491.8L896.5,493.2L897.4,494.5L898.3,495.7L899.3,497.0L900.4,498.2L901.5,499.4L902.6,500.6L903.9,501.7L905.1,502.8L906.5,503.9L907.9,504.9L909.3,505.9L910.8,506.9L912.3,507.8L913.9,508.7L915.5,509.6L917.1,510.4L918.8,511.1L920.6,511.8L922.3,512.5L924.1,513.1L925.9,513.7L927.8,514.2L929.7,514.7L931.6,515.2L933.5,515.5L935.4,515.9L937.4,516.2L939.4,516.4L941.3,516.6L943.3,516.7L945.3,516.8L947.3,516.8L949.3,516.8L951.3,516.7L953.3,516.6L955.3,516.4L957.3,516.2L959.2,515.9L961.2,515.6L963.1,515.2L965.0,514.8L966.9,514.3L968.8,513.8L970.6,513.2L972.4,512.6L974.2,511.9L975.9,511.2L977.6,510.5L979.3,509.7L980.9,508.8L982.5,508.0L984.1,507.0L985.6,506.1L987.0,505.1L988.4,504.1L989.8,503.0L991.1,501.9L992.3,500.8L993.5,499.6L994.6,498.4L995.7,497.2L996.7,495.9L997.7,494.7L998.5,493.4L999.4,492.1L1000.1,490.7L1000.8,489.4L1001.5,488.0L1002.0,486.6L1002.5,485.2L1003.0,483.8L1003.3,482.4L1003.6,481.0L1003.8,479.6L1004.0,478.1L1004.1,476.7L1004.1,475.3L1004.0,473.8L1003.9,472.4L1003.7,471.0L1003.5,469.5L1003.2,468.1L1002.8,466.7L1002.3,465.3L1001.8,464.0L1001.2,462.6L1000.6,461.3L999.8,459.9L999.1,458.6ZM991.0,459.9L990.2,458.8L989.4,457.7L988.6,456.7L987.6,455.7L986.7,454.7L985.7,453.7L984.6,452.8L983.5,451.9L982.4,451.0L981.2,450.1L980.0,449.3L978.7,448.5L977.4,447.7L976.1,447.0L974.7,446.3L973.3,445.7L971.9,445.0L970.4,444.5L968.9,443.9L967.4,443.4L965.9,442.9L964.3,442.5L962.8,442.1L961.2,441.7L959.6,441.4L957.9,441.2L956.3,440.9L954.7,440.7L953.0,440.6L951.3,440.5L949.7,440.4L948.0,440.4L946.4,440.4L944.7,440.5L943.0,440.6L941.4,440.7L939.7,440.9L938.1,441.1L936.5,441.4L934.9,441.7L933.3,442.0L931.7,442.4L930.1,442.9L928.6,443.3L927.1,443.8L925.6,444.4L924.1,445.0L922.7,445.6L921.2,446.2L919.9,446.9L918.5,447.6L917.2,448.4L915.9,449.2L914.7,450.0L913.5,450.8L912.3,451.7L911.2,452.6L910.1,453.6L909.1,454.5L908.1,455.5L907.2,456.5L906.3,457.6L905.5,458.6L904.7,459.7L903.9,460.8L903.3,461.9L902.6,463.1L902.1,464.2L901.5,465.4L901.1,466.6L900.7,467.8L900.3,469.0L900.0,470.2L899.8,471.4L899.6,472.6L899.5,473.8L899.4,475.1L899.4,476.3L899.5,477.5L899.6,478.7L899.8,480.0L900.0,481.2L900.3,482.4L900.6,483.6L901.0,484.8L901.5,486.0L902.0,487.1L902.6,488.3L903.2,489.4L903.9,490.6L904.7,491.7L905.5,492.8L906.3,493.8L907.2,494.9L908.2,495.9L909.2,496.9L910.2,497.9L911.3,498.8L912.4,499.7L913.6,500.6L914.9,501.5L916.1,502.3L917.4,503.1L918.8,503.8L920.2,504.6L921.6,505.2L923.0,505.9L924.5,506.5L926.0,507.1L927.5,507.6L929.1,508.1L930.7,508.6L932.3,509.0L933.9,509.3L935.6,509.7L937.2,510.0L938.9,510.2L940.6,510.4L942.3,510.6L944.0,510.7L945.7,510.7L947.4,510.8L949.1,510.8L950.8,510.7L952.5,510.6L954.2,510.4L955.9,510.2L957.6,510.0L959.2,509.7L960.9,509.4L962.5,509.0L964.1,508.6L965.7,508.2L967.3,507.7L968.8,507.2L970.3,506.6L971.8,506.0L973.3,505.4L974.7,504.7L976.1,504.0L977.5,503.2L978.8,502.4L980.1,501.6L981.3,500.8L982.5,499.9L983.7,499.0L984.8,498.0L985.9,497.1L986.9,496.1L987.8,495.0L988.8,494.0L989.6,492.9L990.4,491.8L991.2,490.7L991.9,489.6L992.6,488.5L993.2,487.3L993.7,486.2L994.2,485.0L994.6,483.8L995.0,482.6L995.3,481.4L995.6,480.1L995.8,478.9L995.9,477.7L996.0,476.5L996.0,475.2L996.0,474.0L995.9,472.8L995.7,471.6L995.5,470.3L995.2,469.1L994.9,467.9L994.5,466.7L994.1,465.6L993.6,464.4L993.0,463.2L992.4,462.1L991.7,461.0Z" fill-rule="evenodd" fill="#d4d4d4" shape-rendering="auto"/>
</g>
<path d="M1071.8,357.0L1069.5,354.0L1067.1,351.0L1064.5,348.1L1061.8,345.3L1059.0,342.6L1056.0,339.9L1052.9,337.3L1049.7,334.8L1046.3,332.4L1042.9,330.0L1039.3,327.8L1035.7,325.6L1031.9,323.5L1028.0,321.5L1024.1,319.6L1020.1,317.8L1016.0,316.1L1011.8,314.6L1007.5,313.1L1003.2,311.7L998.8,310.4L994.4,309.2L989.9,308.2L985.3,307.2L980.7,306.3L976.1,305.6L971.5,305.0L966.8,304.5L962.1,304.1L957.4,303.8L952.6,303.6L947.9,303.5L943.1,303.6L938.4,303.7L933.7,304.0L929.0,304.4L924.3,304.9L919.6,305.5L915.0,306.2L910.4,307.1L905.8,308.0L901.3,309.1L896.8,310.2L892.4,311.5L888.1,312.9L883.8,314.4L879.6,315.9L875.4,317.6L871.4,319.4L867.4,321.3L863.5,323.2L859.7,325.3L856.0,327.5L852.4,329.7L848.9,332.1L845.6,334.5L842.3,337.0L839.1,339.6L836.1,342.2L833.2,344.9L830.5,347.7L827.8,350.6L825.3,353.6L823.0,356.6L820.8,359.6L818.7,362.7L816.8,365.9L815.0,369.1L813.4,372.4L811.9,375.6L810.7,379.0L809.5,382.4L808.6,385.7L807.8,389.2L807.1,392.6L806.7,396.1L806.4,399.6L806.2,403.0L806.3,406.5L806.5,410.0L806.9,413.5L807.5,417.0L808.2,420.4L809.1,423.9L810.2,427.3L811.4,430.7L812.8,434.1L814.4,437.4L816.2,440.7L818.1,444.0L820.2,447.2L822.5,450.4L824.9,453.5L827.4,456.5L830.2,459.5L833.0,462.4L836.0,465.2L839.2,468.0L842.5,470.7L846.0,473.3L849.5,475.8L853.2,478.2L857.1,480.5L861.0,482.8L865.1,484.9L869.2,486.9L873.5,488.8L877.9,490.6L882.3,492.3L886.9,493.9L891.5,495.4L896.2,496.7L901.0,498.0L905.8,499.1L910.7,500.0L915.7,500.9L920.7,501.6L925.7,502.2L930.7,502.7L935.8,503.0L940.9,503.2L946.0,503.3L951.1,503.2L956.1,503.1L961.2,502.7L966.3,502.3L971.3,501.7L976.3,501.0L981.3,500.2L986.2,499.2L991.0,498.1L995.8,496.9L1000.6,495.6L1005.2,494.2L1009.8,492.6L1014.3,490.9L1018.7,489.1L1023.0,487.2L1027.2,485.2L1031.3,483.1L1035.3,480.9L1039.2,478.6L1043.0,476.2L1046.6,473.7L1050.1,471.1L1053.4,468.4L1056.7,465.7L1059.7,462.8L1062.7,459.9L1065.4,457.0L1068.1,453.9L1070.5,450.8L1072.9,447.7L1075.0,444.5L1077.0,441.2L1078.8,437.9L1080.5,434.6L1082.0,431.2L1083.3,427.8L1084.4,424.4L1085.4,421.0L1086.2,417.5L1086.8,414.0L1087.3,410.5L1087.6,407.0L1087.7,403.5L1087.6,400.1L1087.4,396.6L1087.0,393.1L1086.4,389.7L1085.7,386.2L1084.8,382.8L1083.7,379.5L1082.5,376.1L1081.1,372.8L1079.6,369.5L1077.9,366.3L1076.0,363.2L1074.0,360.0ZM1063.5,359.8L1061.3,357.0L1059.1,354.3L1056.7,351.6L1054.1,349.0L1051.5,346.4L1048.7,343.9L1045.8,341.5L1042.8,339.1L1039.7,336.8L1036.5,334.7L1033.2,332.5L1029.8,330.5L1026.3,328.6L1022.7,326.7L1019.0,324.9L1015.2,323.3L1011.4,321.7L1007.5,320.2L1003.5,318.8L999.5,317.5L995.4,316.3L991.2,315.2L987.0,314.2L982.8,313.3L978.5,312.5L974.2,311.8L969.8,311.2L965.5,310.7L961.1,310.4L956.7,310.1L952.2,309.9L947.8,309.9L943.4,309.9L939.0,310.1L934.6,310.3L930.2,310.7L925.8,311.2L921.4,311.7L917.1,312.4L912.8,313.2L908.5,314.1L904.3,315.1L900.2,316.1L896.0,317.3L892.0,318.6L888.0,320.0L884.0,321.5L880.2,323.0L876.4,324.7L872.7,326.5L869.0,328.3L865.5,330.2L862.1,332.3L858.7,334.4L855.5,336.6L852.3,338.8L849.3,341.2L846.3,343.6L843.5,346.0L840.8,348.6L838.2,351.2L835.8,353.9L833.5,356.6L831.3,359.4L829.2,362.3L827.3,365.2L825.5,368.2L823.9,371.2L822.4,374.2L821.1,377.3L819.9,380.4L818.8,383.5L817.9,386.7L817.2,389.9L816.6,393.1L816.2,396.3L815.9,399.6L815.8,402.8L815.9,406.1L816.1,409.3L816.5,412.6L817.0,415.8L817.7,419.0L818.5,422.2L819.6,425.4L820.7,428.6L822.1,431.7L823.6,434.8L825.2,437.9L827.0,440.9L829.0,443.9L831.1,446.9L833.3,449.8L835.7,452.6L838.3,455.3L840.9,458.1L843.8,460.7L846.7,463.3L849.8,465.7L853.0,468.2L856.3,470.5L859.8,472.7L863.3,474.9L867.0,477.0L870.8,478.9L874.7,480.8L878.7,482.6L882.7,484.3L886.9,485.9L891.1,487.3L895.4,488.7L899.8,489.9L904.2,491.1L908.7,492.1L913.3,493.0L917.9,493.8L922.5,494.5L927.2,495.0L931.9,495.4L936.6,495.8L941.3,495.9L946.0,496.0L950.8,496.0L955.5,495.8L960.2,495.5L964.9,495.1L969.6,494.6L974.2,493.9L978.8,493.1L983.4,492.2L987.9,491.2L992.4,490.1L996.8,488.9L1001.1,487.5L1005.4,486.1L1009.6,484.5L1013.7,482.9L1017.7,481.1L1021.6,479.2L1025.4,477.3L1029.1,475.2L1032.8,473.1L1036.3,470.8L1039.6,468.5L1042.9,466.1L1046.0,463.6L1049.0,461.1L1051.9,458.5L1054.6,455.8L1057.2,453.0L1059.7,450.2L1062.0,447.3L1064.2,444.4L1066.2,441.4L1068.0,438.4L1069.7,435.3L1071.3,432.2L1072.7,429.1L1073.9,425.9L1075.0,422.7L1075.9,419.5L1076.7,416.3L1077.3,413.0L1077.7,409.8L1078.0,406.5L1078.1,403.3L1078.1,400.0L1077.9,396.8L1077.5,393.6L1077.0,390.3L1076.3,387.2L1075.5,384.0L1074.5,380.8L1073.4,377.7L1072.1,374.6L1070.6,371.6L1069.1,368.6L1067.3,365.6L1065.5,362.7Z" fill-rule="evenodd" fill="#dadada" shape-rendering="auto"/>
<path d="M763.8,543.0L765.3,555.0L760.2,498.6L758.7,486.6Z" fill="#868686"/>
<path d="M765.3,555.0L768.2,566.9L763.2,510.5L760.2,498.6Z" fill="#878787"/>
<path d="M768.2,566.9L772.6,578.6L767.7,522.3L763.2,510.5Z" fill="#888888"/>
<path d="M772.6,578.6L778.4,590.0L773.6,533.7L767.7,522.3Z" fill="#888888"/>
<path d="M778.4,590.0L785.5,601.0L780.9,544.8L773.6,533.7Z" fill="#878787"/>
<path d="M785.5,601.0L794.0,611.5L789.6,555.4L780.9,544.8Z" fill="#868686"/>
<path d="M794.0,611.5L803.7,621.4L799.5,565.4L789.6,555.4Z" fill="#858585"/>
<path d="M803.7,621.4L814.7,630.7L810.7,574.7L799.5,565.4Z" fill="#838383"/>
<path d="M814.7,630.7L826.7,639.3L823.1,583.3L810.7,574.7Z" fill="#818181"/>
<path d="M826.7,639.3L839.8,647.0L836.5,591.1L823.1,583.3Z" fill="#7e7e7e"/>
<path d="M839.8,647.0L853.8,653.8L850.8,598.0L836.5,591.1Z" fill="#7b7b7b"/>
<path d="M853.8,653.8L868.6,659.6L866.0,603.8L850.8,598.0Z" fill="#787878"/>
<path d="M868.6,659.6L884.2,664.5L881.9,608.7L866.0,603.8Z" fill="#777777"/>
<path d="M884.2,664.5L900.2,668.2L898.4,612.5L881.9,608.7Z" fill="#777777"/>
<path d="M900.2,668.2L916.7,670.9L915.3,615.2L898.4,612.5Z" fill="#757575"/>
<path d="M916.7,670.9L933.5,672.4L932.5,616.7L915.3,615.2Z" fill="#747474"/>
<path d="M933.5,672.4L950.4,672.8L949.8,617.1L932.5,616.7Z" fill="#727272"/>
<path d="M950.4,672.8L967.2,672.1L967.1,616.3L949.8,617.1Z" fill="#707070"/>
<path d="M967.2,672.1L983.9,670.2L984.3,614.4L967.1,616.3Z" fill="#6e6e6e"/>
<path d="M983.9,670.2L1000.3,667.1L1001.1,611.4L984.3,614.4Z" fill="#6b6b6b"/>
<path d="M1000.3,667.1L1016.3,663.0L1017.4,607.2L1001.1,611.4Z" fill="#686868"/>
<path d="M1016.3,663.0L1031.6,657.8L1033.2,602.0L1017.4,607.2Z" fill="#686868"/>
<path d="M1031.6,657.8L1046.3,651.7L1048.2,595.8L1033.2,602.0Z" fill="#6a6a6a"/>
<path d="M1046.3,651.7L1060.1,644.5L1062.3,588.6L1048.2,595.8Z" fill="#6c6c6c"/>
<path d="M1060.1,644.5L1072.9,636.5L1075.5,580.6L1062.3,588.6Z" fill="#6d6d6d"/>
<path d="M1072.9,636.5L1084.7,627.7L1087.5,571.7L1075.5,580.6Z" fill="#6f6f6f"/>
<path d="M1084.7,627.7L1095.3,618.2L1098.4,562.1L1087.5,571.7Z" fill="#6f6f6f"/>
<path d="M1095.3,618.2L1104.8,608.1L1108.1,551.9L1098.4,562.1Z" fill="#707070"/>
<path d="M1104.8,608.1L1112.9,597.4L1116.4,541.2L1108.1,551.9Z" fill="#717171"/>
<path d="M1112.9,597.4L1119.7,586.2L1123.4,529.9L1116.4,541.2Z" fill="#717171"/>
<path d="M1119.7,586.2L1125.1,574.7L1128.9,518.4L1123.4,529.9Z" fill="#707070"/>
<path d="M1125.1,574.7L1129.2,562.9L1133.0,506.5L1128.9,518.4Z" fill="#707070"/>
<path d="M1129.2,562.9L1131.8,551.0L1135.7,494.6L1133.0,506.5Z" fill="#6f6f6f"/>
<path d="M1131.8,551.0L1132.9,539.0L1136.9,482.5L1135.7,494.6Z" fill="#6e6e6e"/>
<path d="M758.7,486.6L760.2,498.6L760.1,496.6L758.5,484.5Z" fill="#888888"/>
<path d="M760.2,498.6L763.2,510.5L763.1,508.5L760.1,496.6Z" fill="#898989"/>
<path d="M763.2,510.5L767.7,522.3L767.6,520.3L763.1,508.5Z" fill="#898989"/>
<path d="M767.7,522.3L773.6,533.7L773.5,531.7L767.6,520.3Z" fill="#898989"/>
<path d="M773.6,533.7L780.9,544.8L780.8,542.8L773.5,531.7Z" fill="#888888"/>
<path d="M780.9,544.8L789.6,555.4L789.4,553.4L780.8,542.8Z" fill="#888888"/>
<path d="M789.6,555.4L799.5,565.4L799.4,563.4L789.4,553.4Z" fill="#868686"/>
<path d="M799.5,565.4L810.7,574.7L810.6,572.7L799.4,563.4Z" fill="#848484"/>
<path d="M810.7,574.7L823.1,583.3L823.0,581.3L810.6,572.7Z" fill="#828282"/>
<path d="M823.1,583.3L836.5,591.1L836.4,589.1L823.0,581.3Z" fill="#7f7f7f"/>
<path d="M836.5,591.1L850.8,598.0L850.8,595.9L836.4,589.1Z" fill="#7c7c7c"/>
<path d="M850.8,598.0L866.0,603.8L866.0,601.8L850.8,595.9Z" fill="#7a7a7a"/>
<path d="M866.0,603.8L881.9,608.7L881.9,606.7L866.0,601.8Z" fill="#797979"/>
<path d="M881.9,608.7L898.4,612.5L898.4,610.5L881.9,606.7Z" fill="#787878"/>
<path d="M898.4,612.5L915.3,615.2L915.3,613.1L898.4,610.5Z" fill="#777777"/>
<path d="M915.3,615.2L932.5,616.7L932.5,614.7L915.3,613.1Z" fill="#767676"/>
<path d="M932.5,616.7L949.8,617.1L949.8,615.1L932.5,614.7Z" fill="#747474"/>
<path d="M949.8,617.1L967.1,616.3L967.1,614.3L949.8,615.1Z" fill="#727272"/>
<path d="M967.1,616.3L984.3,614.4L984.3,612.4L967.1,614.3Z" fill="#6f6f6f"/>
<path d="M984.3,614.4L1001.1,611.4L1001.1,609.3L984.3,612.4Z" fill="#6d6d6d"/>
<path d="M1001.1,611.4L1017.4,607.2L1017.4,605.2L1001.1,609.3Z" fill="#6a6a6a"/>
<path d="M1017.4,607.2L1033.2,602.0L1033.2,600.0L1017.4,605.2Z" fill="#696969"/>
<path d="M1033.2,602.0L1048.2,595.8L1048.2,593.8L1033.2,600.0Z" fill="#6b6b6b"/>
<path d="M1048.2,595.8L1062.3,588.6L1062.4,586.6L1048.2,593.8Z" fill="#6c6c6c"/>
<path d="M1062.3,588.6L1075.5,580.6L1075.5,578.5L1062.4,586.6Z" fill="#6e6e6e"/>
<path d="M1075.5,580.6L1087.5,571.7L1087.6,569.7L1075.5,578.5Z" fill="#6f6f6f"/>
<path d="M1087.5,571.7L1098.4,562.1L1098.5,560.1L1087.6,569.7Z" fill="#707070"/>
<path d="M1098.4,562.1L1108.1,551.9L1108.2,549.9L1098.5,560.1Z" fill="#717171"/>
<path d="M1108.1,551.9L1116.4,541.2L1116.5,539.1L1108.2,549.9Z" fill="#717171"/>
<path d="M1116.4,541.2L1123.4,529.9L1123.5,527.9L1116.5,539.1Z" fill="#717171"/>
<path d="M1123.4,529.9L1128.9,518.4L1129.0,516.4L1123.5,527.9Z" fill="#717171"/>
<path d="M1128.9,518.4L1133.0,506.5L1133.1,504.5L1129.0,516.4Z" fill="#707070"/>
<path d="M1133.0,506.5L1135.7,494.6L1135.8,492.5L1133.1,504.5Z" fill="#707070"/>
<path d="M1135.7,494.6L1136.9,482.5L1137.0,480.5L1135.8,492.5Z" fill="#6f6f6f"/>
<path d="M758.5,484.5L760.1,496.6L760.0,494.6L758.5,482.5Z" fill="#8a8a8a"/>
<path d="M760.1,496.6L763.1,508.5L763.0,506.5L760.0,494.6Z" fill="#8b8b8b"/>
<path d="M763.1,508.5L767.6,520.3L767.5,518.2L763.0,506.5Z" fill="#8c8c8c"/>
<path d="M767.6,520.3L773.5,531.7L773.4,529.7L767.5,518.2Z" fill="#8c8c8c"/>
<path d="M773.5,531.7L780.8,542.8L780.7,540.7L773.4,529.7Z" fill="#8b8b8b"/>
<path d="M780.8,542.8L789.4,553.4L789.4,551.3L780.7,540.7Z" fill="#8a8a8a"/>
<path d="M789.4,553.4L799.4,563.4L799.3,561.3L789.4,551.3Z" fill="#898989"/>
<path d="M799.4,563.4L810.6,572.7L810.6,570.7L799.3,561.3Z" fill="#878787"/>
<path d="M810.6,572.7L823.0,581.3L822.9,579.2L810.6,570.7Z" fill="#858585"/>
<path d="M823.0,581.3L836.4,589.1L836.3,587.0L822.9,579.2Z" fill="#828282"/>
<path d="M836.4,589.1L850.8,595.9L850.7,593.9L836.3,587.0Z" fill="#7f7f7f"/>
<path d="M850.8,595.9L866.0,601.8L865.9,599.7L850.7,593.9Z" fill="#7d7d7d"/>
<path d="M866.0,601.8L881.9,606.7L881.8,604.6L865.9,599.7Z" fill="#7c7c7c"/>
<path d="M881.9,606.7L898.4,610.5L898.3,608.4L881.8,604.6Z" fill="#7c7c7c"/>
<path d="M898.4,610.5L915.3,613.1L915.2,611.1L898.3,608.4Z" fill="#7a7a7a"/>
<path d="M915.3,613.1L932.5,614.7L932.4,612.6L915.2,611.1Z" fill="#797979"/>
<path d="M932.5,614.7L949.8,615.1L949.8,613.0L932.4,612.6Z" fill="#777777"/>
<path d="M949.8,615.1L967.1,614.3L967.1,612.2L949.8,613.0Z" fill="#757575"/>
<path d="M967.1,614.3L984.3,612.4L984.3,610.3L967.1,612.2Z" fill="#737373"/>
<path d="M984.3,612.4L1001.1,609.3L1001.1,607.3L984.3,610.3Z" fill="#707070"/>
<path d="M1001.1,609.3L1017.4,605.2L1017.4,603.1L1001.1,607.3Z" fill="#6d6d6d"/>
<path d="M1017.4,605.2L1033.2,600.0L1033.2,597.9L1017.4,603.1Z" fill="#6a6a6a"/>
<path d="M1033.2,600.0L1048.2,593.8L1048.2,591.7L1033.2,597.9Z" fill="#6b6b6b"/>
<path d="M1048.2,593.8L1062.4,586.6L1062.4,584.5L1048.2,591.7Z" fill="#6d6d6d"/>
<path d="M1062.4,586.6L1075.5,578.5L1075.5,576.5L1062.4,584.5Z" fill="#6e6e6e"/>
<path d="M1075.5,578.5L1087.6,569.7L1087.6,567.6L1075.5,576.5Z" fill="#707070"/>
<path d="M1087.6,569.7L1098.5,560.1L1098.6,558.1L1087.6,567.6Z" fill="#717171"/>
<path d="M1098.5,560.1L1108.2,549.9L1108.2,547.8L1098.6,558.1Z" fill="#717171"/>
<path d="M1108.2,549.9L1116.5,539.1L1116.6,537.1L1108.2,547.8Z" fill="#727272"/>
<path d="M1116.5,539.1L1123.5,527.9L1123.5,525.9L1116.6,537.1Z" fill="#727272"/>
<path d="M1123.5,527.9L1129.0,516.4L1129.1,514.3L1123.5,525.9Z" fill="#727272"/>
<path d="M1129.0,516.4L1133.1,504.5L1133.2,502.5L1129.1,514.3Z" fill="#717171"/>
<path d="M1133.1,504.5L1135.8,492.5L1135.8,490.5L1133.2,502.5Z" fill="#707070"/>
<path d="M1135.8,492.5L1137.0,480.5L1137.0,478.4L1135.8,490.5Z" fill="#6f6f6f"/>
<path d="M758.4,470.5L758.5,482.5L758.5,480.5L758.4,468.5Z" fill="#8c8c8c"/>
<path d="M758.5,482.5L760.0,494.6L760.0,492.5L758.5,480.5Z" fill="#8d8d8d"/>
<path d="M760.0,494.6L763.0,506.5L763.0,504.4L760.0,492.5Z" fill="#8e8e8e"/>
<path d="M763.0,506.5L767.5,518.2L767.5,516.2L763.0,504.4Z" fill="#8e8e8e"/>
<path d="M767.5,518.2L773.4,529.7L773.4,527.6L767.5,516.2Z" fill="#8e8e8e"/>
<path d="M773.4,529.7L780.7,540.7L780.7,538.7L773.4,527.6Z" fill="#8e8e8e"/>
<path d="M780.7,540.7L789.4,551.3L789.4,549.2L780.7,538.7Z" fill="#8d8d8d"/>
<path d="M789.4,551.3L799.3,561.3L799.3,559.2L789.4,549.2Z" fill="#8b8b8b"/>
<path d="M799.3,561.3L810.6,570.7L810.6,568.6L799.3,559.2Z" fill="#8a8a8a"/>
<path d="M810.6,570.7L822.9,579.2L822.9,577.1L810.6,568.6Z" fill="#878787"/>
<path d="M822.9,579.2L836.3,587.0L836.3,584.9L822.9,577.1Z" fill="#858585"/>
<path d="M836.3,587.0L850.7,593.9L850.7,591.7L836.3,584.9Z" fill="#828282"/>
<path d="M850.7,593.9L865.9,599.7L865.9,597.6L850.7,591.7Z" fill="#808080"/>
<path d="M865.9,599.7L881.8,604.6L881.8,602.5L865.9,597.6Z" fill="#808080"/>
<path d="M881.8,604.6L898.3,608.4L898.3,606.2L881.8,602.5Z" fill="#7f7f7f"/>
<path d="M898.3,608.4L915.2,611.1L915.2,608.9L898.3,606.2Z" fill="#7e7e7e"/>
<path d="M915.2,611.1L932.4,612.6L932.4,610.5L915.2,608.9Z" fill="#7c7c7c"/>
<path d="M932.4,612.6L949.8,613.0L949.8,610.8L932.4,610.5Z" fill="#7a7a7a"/>
<path d="M949.8,613.0L967.1,612.2L967.1,610.1L949.8,610.8Z" fill="#787878"/>
<path d="M967.1,612.2L984.3,610.3L984.2,608.2L967.1,610.1Z" fill="#767676"/>
<path d="M984.3,610.3L1001.1,607.3L1001.1,605.1L984.2,608.2Z" fill="#737373"/>
<path d="M1001.1,607.3L1017.4,603.1L1017.4,601.0L1001.1,605.1Z" fill="#717171"/>
<path d="M1017.4,603.1L1033.2,597.9L1033.2,595.8L1017.4,601.0Z" fill="#6e6e6e"/>
<path d="M1033.2,597.9L1048.2,591.7L1048.2,589.6L1033.2,595.8Z" fill="#6c6c6c"/>
<path d="M1048.2,591.7L1062.4,584.5L1062.3,582.4L1048.2,589.6Z" fill="#6e6e6e"/>
<path d="M1062.4,584.5L1075.5,576.5L1075.5,574.4L1062.3,582.4Z" fill="#6f6f6f"/>
<path d="M1075.5,576.5L1087.6,567.6L1087.6,565.5L1075.5,574.4Z" fill="#707070"/>
<path d="M1087.6,567.6L1098.6,558.1L1098.5,556.0L1087.6,565.5Z" fill="#717171"/>
<path d="M1098.6,558.1L1108.2,547.8L1108.2,545.8L1098.5,556.0Z" fill="#727272"/>
<path d="M1108.2,547.8L1116.6,537.1L1116.5,535.0L1108.2,545.8Z" fill="#727272"/>
<path d="M1116.6,537.1L1123.5,525.9L1123.5,523.8L1116.5,535.0Z" fill="#727272"/>
<path d="M1123.5,525.9L1129.1,514.3L1129.0,512.3L1123.5,523.8Z" fill="#727272"/>
<path d="M1129.1,514.3L1133.2,502.5L1133.1,500.4L1129.0,512.3Z" fill="#727272"/>
<path d="M1133.2,502.5L1135.8,490.5L1135.8,488.5L1133.1,500.4Z" fill="#717171"/>
<path d="M1135.8,490.5L1137.0,478.4L1137.0,476.4L1135.8,488.5Z" fill="#707070"/>
<path d="M1137.0,478.4L1136.8,466.4L1136.7,464.4L1137.0,476.4Z" fill="#6f6f6f"/>
<path d="M758.4,468.5L758.5,480.5L758.6,478.4L758.5,466.4Z" fill="#8e8e8e"/>
<path d="M758.5,480.5L760.0,492.5L760.1,490.5L758.6,478.4Z" fill="#909090"/>
<path d="M760.0,492.5L763.0,504.4L763.1,502.4L760.1,490.5Z" fill="#919191"/>
<path d="M763.0,504.4L767.5,516.2L767.6,514.1L763.1,502.4Z" fill="#919191"/>
<path d="M767.5,516.2L773.4,527.6L773.5,525.5L767.6,514.1Z" fill="#919191"/>
<path d="M773.4,527.6L780.7,538.7L780.8,536.5L773.5,525.5Z" fill="#909090"/>
<path d="M780.7,538.7L789.4,549.2L789.4,547.1L780.8,536.5Z" fill="#8f8f8f"/>
<path d="M789.4,549.2L799.3,559.2L799.4,557.1L789.4,547.1Z" fill="#8e8e8e"/>
<path d="M799.3,559.2L810.6,568.6L810.6,566.4L799.4,557.1Z" fill="#8c8c8c"/>
<path d="M810.6,568.6L822.9,577.1L823.0,575.0L810.6,566.4Z" fill="#8a8a8a"/>
<path d="M822.9,577.1L836.3,584.9L836.4,582.7L823.0,575.0Z" fill="#878787"/>
<path d="M836.3,584.9L850.7,591.7L850.7,589.5L836.4,582.7Z" fill="#848484"/>
<path d="M850.7,591.7L865.9,597.6L865.9,595.4L850.7,589.5Z" fill="#848484"/>
<path d="M865.9,597.6L881.8,602.5L881.8,600.3L865.9,595.4Z" fill="#838383"/>
<path d="M881.8,602.5L898.3,606.2L898.3,604.0L881.8,600.3Z" fill="#828282"/>
<path d="M898.3,606.2L915.2,608.9L915.2,606.7L898.3,604.0Z" fill="#818181"/>
<path d="M915.2,608.9L932.4,610.5L932.4,608.2L915.2,606.7Z" fill="#808080"/>
<path d="M932.4,610.5L949.8,610.8L949.7,608.6L932.4,608.2Z" fill="#7e7e7e"/>
<path d="M949.8,610.8L967.1,610.1L967.0,607.9L949.7,608.6Z" fill="#7c7c7c"/>
<path d="M967.1,610.1L984.2,608.2L984.2,605.9L967.0,607.9Z" fill="#797979"/>
<path d="M984.2,608.2L1001.1,605.1L1001.0,602.9L984.2,605.9Z" fill="#777777"/>
<path d="M1001.1,605.1L1017.4,601.0L1017.4,598.8L1001.0,602.9Z" fill="#747474"/>
<path d="M1017.4,601.0L1033.2,595.8L1033.1,593.6L1017.4,598.8Z" fill="#717171"/>
<path d="M1033.2,595.8L1048.2,589.6L1048.1,587.4L1033.1,593.6Z" fill="#6e6e6e"/>
<path d="M1048.2,589.6L1062.3,582.4L1062.2,580.2L1048.1,587.4Z" fill="#6e6e6e"/>
<path d="M1062.3,582.4L1075.5,574.4L1075.4,572.2L1062.2,580.2Z" fill="#707070"/>
<path d="M1075.5,574.4L1087.6,565.5L1087.5,563.4L1075.4,572.2Z" fill="#717171"/>
<path d="M1087.6,565.5L1098.5,556.0L1098.4,553.8L1087.5,563.4Z" fill="#727272"/>
<path d="M1098.5,556.0L1108.2,545.8L1108.1,543.6L1098.4,553.8Z" fill="#727272"/>
<path d="M1108.2,545.8L1116.5,535.0L1116.4,532.9L1108.1,543.6Z" fill="#737373"/>
<path d="M1116.5,535.0L1123.5,523.8L1123.4,521.7L1116.4,532.9Z" fill="#737373"/>
<path d="M1123.5,523.8L1129.0,512.3L1128.9,510.2L1123.4,521.7Z" fill="#737373"/>
<path d="M1129.0,512.3L1133.1,500.4L1133.0,498.4L1128.9,510.2Z" fill="#727272"/>
<path d="M1133.1,500.4L1135.8,488.5L1135.7,486.4L1133.0,498.4Z" fill="#727272"/>
<path d="M1135.8,488.5L1137.0,476.4L1136.8,474.4L1135.7,486.4Z" fill="#717171"/>
<path d="M1137.0,476.4L1136.7,464.4L1136.6,462.4L1136.8,474.4Z" fill="#707070"/>
<path d="M758.5,466.4L758.6,478.4L758.7,476.4L758.6,464.4Z" fill="#919191"/>
<path d="M758.6,478.4L760.1,490.5L760.3,488.4L758.7,476.4Z" fill="#929292"/>
<path d="M760.1,490.5L763.1,502.4L763.3,500.3L760.3,488.4Z" fill="#939393"/>
<path d="M763.1,502.4L767.6,514.1L767.7,512.0L763.3,500.3Z" fill="#939393"/>
<path d="M767.6,514.1L773.5,525.5L773.6,523.4L767.7,512.0Z" fill="#939393"/>
<path d="M773.5,525.5L780.8,536.5L780.9,534.4L773.6,523.4Z" fill="#939393"/>
<path d="M780.8,536.5L789.4,547.1L789.6,544.9L780.9,534.4Z" fill="#929292"/>
<path d="M789.4,547.1L799.4,557.1L799.5,554.9L789.6,544.9Z" fill="#919191"/>
<path d="M799.4,557.1L810.6,566.4L810.7,564.2L799.5,554.9Z" fill="#8f8f8f"/>
<path d="M810.6,566.4L823.0,575.0L823.1,572.7L810.7,564.2Z" fill="#8d8d8d"/>
<path d="M823.0,575.0L836.4,582.7L836.5,580.5L823.1,572.7Z" fill="#8a8a8a"/>
<path d="M836.4,582.7L850.7,589.5L850.8,587.3L836.5,580.5Z" fill="#878787"/>
<path d="M850.7,589.5L865.9,595.4L866.0,593.2L850.8,587.3Z" fill="#878787"/>
<path d="M865.9,595.4L881.8,600.3L881.9,598.0L866.0,593.2Z" fill="#868686"/>
<path d="M881.8,600.3L898.3,604.0L898.3,601.8L881.9,598.0Z" fill="#868686"/>
<path d="M898.3,604.0L915.2,606.7L915.2,604.4L898.3,601.8Z" fill="#848484"/>
<path d="M915.2,606.7L932.4,608.2L932.4,606.0L915.2,604.4Z" fill="#838383"/>
<path d="M932.4,608.2L949.7,608.6L949.7,606.4L932.4,606.0Z" fill="#818181"/>
<path d="M949.7,608.6L967.0,607.9L967.0,605.6L949.7,606.4Z" fill="#7f7f7f"/>
<path d="M967.0,607.9L984.2,605.9L984.1,603.7L967.0,605.6Z" fill="#7d7d7d"/>
<path d="M984.2,605.9L1001.0,602.9L1000.9,600.6L984.1,603.7Z" fill="#7a7a7a"/>
<path d="M1001.0,602.9L1017.4,598.8L1017.3,596.5L1000.9,600.6Z" fill="#777777"/>
<path d="M1017.4,598.8L1033.1,593.6L1033.0,591.3L1017.3,596.5Z" fill="#747474"/>
<path d="M1033.1,593.6L1048.1,587.4L1048.0,585.1L1033.0,591.3Z" fill="#717171"/>
<path d="M1048.1,587.4L1062.2,580.2L1062.1,578.0L1048.0,585.1Z" fill="#6f6f6f"/>
<path d="M1062.2,580.2L1075.4,572.2L1075.3,570.0L1062.1,578.0Z" fill="#707070"/>
<path d="M1075.4,572.2L1087.5,563.4L1087.3,561.2L1075.3,570.0Z" fill="#727272"/>
<path d="M1087.5,563.4L1098.4,553.8L1098.2,551.6L1087.3,561.2Z" fill="#727272"/>
<path d="M1098.4,553.8L1108.1,543.6L1107.9,541.5L1098.2,551.6Z" fill="#737373"/>
<path d="M1108.1,543.6L1116.4,532.9L1116.2,530.7L1107.9,541.5Z" fill="#737373"/>
<path d="M1116.4,532.9L1123.4,521.7L1123.2,519.6L1116.2,530.7Z" fill="#747474"/>
<path d="M1123.4,521.7L1128.9,510.2L1128.7,508.1L1123.2,519.6Z" fill="#737373"/>
<path d="M1128.9,510.2L1133.0,498.4L1132.8,496.3L1128.7,508.1Z" fill="#737373"/>
<path d="M1133.0,498.4L1135.7,486.4L1135.5,484.3L1132.8,496.3Z" fill="#727272"/>
<path d="M1135.7,486.4L1136.8,474.4L1136.7,472.3L1135.5,484.3Z" fill="#717171"/>
<path d="M1136.8,474.4L1136.6,462.4L1136.4,460.3L1136.7,472.3Z" fill="#707070"/>
<path d="M760.0,452.5L758.6,464.4L758.8,462.4L760.2,450.5Z" fill="#929292"/>
<path d="M758.6,464.4L758.7,476.4L758.9,474.3L758.8,462.4Z" fill="#939393"/>
<path d="M758.7,476.4L760.3,488.4L760.5,486.3L758.9,474.3Z" fill="#959595"/>
<path d="M760.3,488.4L763.3,500.3L763.5,498.2L760.5,486.3Z" fill="#969696"/>
<path d="M763.3,500.3L767.7,512.0L767.9,509.8L763.5,498.2Z" fill="#969696"/>
<path d="M767.7,512.0L773.6,523.4L773.8,521.2L767.9,509.8Z" fill="#969696"/>
<path d="M773.6,523.4L780.9,534.4L781.1,532.2L773.8,521.2Z" fill="#959595"/>
<path d="M780.9,534.4L789.6,544.9L789.8,542.7L781.1,532.2Z" fill="#949494"/>
<path d="M789.6,544.9L799.5,554.9L799.7,552.7L789.8,542.7Z" fill="#939393"/>
<path d="M799.5,554.9L810.7,564.2L810.9,561.9L799.7,552.7Z" fill="#919191"/>
<path d="M810.7,564.2L823.1,572.7L823.2,570.5L810.9,561.9Z" fill="#8f8f8f"/>
<path d="M823.1,572.7L836.5,580.5L836.6,578.2L823.2,570.5Z" fill="#8c8c8c"/>
<path d="M836.5,580.5L850.8,587.3L850.9,585.0L836.6,578.2Z" fill="#8a8a8a"/>
<path d="M850.8,587.3L866.0,593.2L866.1,590.9L850.9,585.0Z" fill="#8a8a8a"/>
<path d="M866.0,593.2L881.9,598.0L881.9,595.7L866.1,590.9Z" fill="#8a8a8a"/>
<path d="M881.9,598.0L898.3,601.8L898.4,599.4L881.9,595.7Z" fill="#898989"/>
<path d="M898.3,601.8L915.2,604.4L915.3,602.1L898.4,599.4Z" fill="#888888"/>
<path d="M915.2,604.4L932.4,606.0L932.4,603.6L915.3,602.1Z" fill="#868686"/>
<path d="M932.4,606.0L949.7,606.4L949.7,604.0L932.4,603.6Z" fill="#848484"/>
<path d="M949.7,606.4L967.0,605.6L967.0,603.3L949.7,604.0Z" fill="#828282"/>
<path d="M967.0,605.6L984.1,603.7L984.1,601.3L967.0,603.3Z" fill="#808080"/>
<path d="M984.1,603.7L1000.9,600.6L1000.8,598.3L984.1,601.3Z" fill="#7d7d7d"/>
<path d="M1000.9,600.6L1017.3,596.5L1017.1,594.2L1000.8,598.3Z" fill="#7b7b7b"/>
<path d="M1017.3,596.5L1033.0,591.3L1032.9,589.0L1017.1,594.2Z" fill="#787878"/>
<path d="M1033.0,591.3L1048.0,585.1L1047.8,582.8L1032.9,589.0Z" fill="#747474"/>
<path d="M1048.0,585.1L1062.1,578.0L1061.9,575.7L1047.8,582.8Z" fill="#717171"/>
<path d="M1062.1,578.0L1075.3,570.0L1075.1,567.7L1061.9,575.7Z" fill="#717171"/>
<path d="M1075.3,570.0L1087.3,561.2L1087.1,558.9L1075.1,567.7Z" fill="#727272"/>
<path d="M1087.3,561.2L1098.2,551.6L1098.0,549.4L1087.1,558.9Z" fill="#737373"/>
<path d="M1098.2,551.6L1107.9,541.5L1107.6,539.3L1098.0,549.4Z" fill="#747474"/>
<path d="M1107.9,541.5L1116.2,530.7L1116.0,528.6L1107.6,539.3Z" fill="#747474"/>
<path d="M1116.2,530.7L1123.2,519.6L1122.9,517.4L1116.0,528.6Z" fill="#747474"/>
<path d="M1123.2,519.6L1128.7,508.1L1128.4,505.9L1122.9,517.4Z" fill="#747474"/>
<path d="M1128.7,508.1L1132.8,496.3L1132.5,494.2L1128.4,505.9Z" fill="#747474"/>
<path d="M1132.8,496.3L1135.5,484.3L1135.2,482.3L1132.5,494.2Z" fill="#737373"/>
<path d="M1135.5,484.3L1136.7,472.3L1136.4,470.3L1135.2,482.3Z" fill="#727272"/>
<path d="M1136.7,472.3L1136.4,460.3L1136.1,458.3L1136.4,470.3Z" fill="#717171"/>
<path d="M760.2,450.5L758.8,462.4L759.2,460.3L760.5,448.5Z" fill="#949494"/>
<path d="M758.8,462.4L758.9,474.3L759.3,472.3L759.2,460.3Z" fill="#969696"/>
<path d="M758.9,474.3L760.5,486.3L760.8,484.2L759.3,472.3Z" fill="#979797"/>
<path d="M760.5,486.3L763.5,498.2L763.8,496.0L760.8,484.2Z" fill="#989898"/>
<path d="M763.5,498.2L767.9,509.8L768.2,507.7L763.8,496.0Z" fill="#989898"/>
<path d="M767.9,509.8L773.8,521.2L774.1,519.0L768.2,507.7Z" fill="#989898"/>
<path d="M773.8,521.2L781.1,532.2L781.4,530.0L774.1,519.0Z" fill="#989898"/>
<path d="M781.1,532.2L789.8,542.7L790.0,540.5L781.4,530.0Z" fill="#979797"/>
<path d="M789.8,542.7L799.7,552.7L799.9,550.4L790.0,540.5Z" fill="#959595"/>
<path d="M799.7,552.7L810.9,561.9L811.1,559.7L799.9,550.4Z" fill="#949494"/>
<path d="M810.9,561.9L823.2,570.5L823.4,568.2L811.1,559.7Z" fill="#919191"/>
<path d="M823.2,570.5L836.6,578.2L836.8,575.9L823.4,568.2Z" fill="#8f8f8f"/>
<path d="M836.6,578.2L850.9,585.0L851.1,582.7L836.8,575.9Z" fill="#8e8e8e"/>
<path d="M850.9,585.0L866.1,590.9L866.2,588.5L851.1,582.7Z" fill="#8d8d8d"/>
<path d="M866.1,590.9L881.9,595.7L882.0,593.3L866.2,588.5Z" fill="#8d8d8d"/>
<path d="M881.9,595.7L898.4,599.4L898.5,597.1L882.0,593.3Z" fill="#8c8c8c"/>
<path d="M898.4,599.4L915.3,602.1L915.3,599.7L898.5,597.1Z" fill="#8b8b8b"/>
<path d="M915.3,602.1L932.4,603.6L932.4,601.2L915.3,599.7Z" fill="#898989"/>
<path d="M932.4,603.6L949.7,604.0L949.7,601.6L932.4,601.2Z" fill="#888888"/>
<path d="M949.7,604.0L967.0,603.3L966.9,600.9L949.7,601.6Z" fill="#868686"/>
<path d="M967.0,603.3L984.1,601.3L984.0,599.0L966.9,600.9Z" fill="#838383"/>
<path d="M984.1,601.3L1000.8,598.3L1000.7,595.9L984.0,599.0Z" fill="#818181"/>
<path d="M1000.8,598.3L1017.1,594.2L1017.0,591.8L1000.7,595.9Z" fill="#7e7e7e"/>
<path d="M1017.1,594.2L1032.9,589.0L1032.7,586.7L1017.0,591.8Z" fill="#7b7b7b"/>
<path d="M1032.9,589.0L1047.8,582.8L1047.6,580.5L1032.7,586.7Z" fill="#787878"/>
<path d="M1047.8,582.8L1061.9,575.7L1061.7,573.4L1047.6,580.5Z" fill="#747474"/>
<path d="M1061.9,575.7L1075.1,567.7L1074.8,565.4L1061.7,573.4Z" fill="#727272"/>
<path d="M1075.1,567.7L1087.1,558.9L1086.9,556.6L1074.8,565.4Z" fill="#737373"/>
<path d="M1087.1,558.9L1098.0,549.4L1097.7,547.2L1086.9,556.6Z" fill="#747474"/>
<path d="M1098.0,549.4L1107.6,539.3L1107.3,537.0L1097.7,547.2Z" fill="#747474"/>
<path d="M1107.6,539.3L1116.0,528.6L1115.6,526.4L1107.3,537.0Z" fill="#757575"/>
<path d="M1116.0,528.6L1122.9,517.4L1122.6,515.2L1115.6,526.4Z" fill="#757575"/>
<path d="M1122.9,517.4L1128.4,505.9L1128.1,503.8L1122.6,515.2Z" fill="#757575"/>
<path d="M1128.4,505.9L1132.5,494.2L1132.2,492.1L1128.1,503.8Z" fill="#747474"/>
<path d="M1132.5,494.2L1135.2,482.3L1134.8,480.2L1132.2,492.1Z" fill="#737373"/>
<path d="M1135.2,482.3L1136.4,470.3L1136.0,468.2L1134.8,480.2Z" fill="#737373"/>
<path d="M1136.4,470.3L1136.1,458.3L1135.8,456.3L1136.0,468.2Z" fill="#717171"/>
<path d="M1136.1,458.3L1134.4,446.5L1134.1,444.5L1135.8,456.3Z" fill="#707070"/>
<path d="M760.5,448.5L759.2,460.3L759.5,458.3L760.9,446.4Z" fill="#979797"/>
<path d="M759.2,460.3L759.3,472.3L759.6,470.2L759.5,458.3Z" fill="#989898"/>
<path d="M759.3,472.3L760.8,484.2L761.2,482.1L759.6,470.2Z" fill="#9a9a9a"/>
<path d="M760.8,484.2L763.8,496.0L764.2,493.9L761.2,482.1Z" fill="#9a9a9a"/>
<path d="M763.8,496.0L768.2,507.7L768.6,505.5L764.2,493.9Z" fill="#9b9b9b"/>
<path d="M768.2,507.7L774.1,519.0L774.5,516.8L768.6,505.5Z" fill="#9b9b9b"/>
<path d="M774.1,519.0L781.4,530.0L781.7,527.7L774.5,516.8Z" fill="#9a9a9a"/>
<path d="M781.4,530.0L790.0,540.5L790.3,538.2L781.7,527.7Z" fill="#999999"/>
<path d="M790.0,540.5L799.9,550.4L800.3,548.1L790.3,538.2Z" fill="#989898"/>
<path d="M799.9,550.4L811.1,559.7L811.4,557.3L800.3,548.1Z" fill="#969696"/>
<path d="M811.1,559.7L823.4,568.2L823.7,565.8L811.4,557.3Z" fill="#949494"/>
<path d="M823.4,568.2L836.8,575.9L837.0,573.5L823.7,565.8Z" fill="#919191"/>
<path d="M836.8,575.9L851.1,582.7L851.3,580.2L837.0,573.5Z" fill="#919191"/>
<path d="M851.1,582.7L866.2,588.5L866.4,586.1L851.3,580.2Z" fill="#919191"/>
<path d="M866.2,588.5L882.0,593.3L882.2,590.9L866.4,586.1Z" fill="#909090"/>
<path d="M882.0,593.3L898.5,597.1L898.5,594.6L882.2,590.9Z" fill="#8f8f8f"/>
<path d="M898.5,597.1L915.3,599.7L915.3,597.2L898.5,594.6Z" fill="#8e8e8e"/>
<path d="M915.3,599.7L932.4,601.2L932.4,598.8L915.3,597.2Z" fill="#8d8d8d"/>
<path d="M932.4,601.2L949.7,601.6L949.6,599.1L932.4,598.8Z" fill="#8b8b8b"/>
<path d="M949.7,601.6L966.9,600.9L966.8,598.4L949.6,599.1Z" fill="#898989"/>
<path d="M966.9,600.9L984.0,599.0L983.9,596.5L966.8,598.4Z" fill="#868686"/>
<path d="M984.0,599.0L1000.7,595.9L1000.6,593.5L983.9,596.5Z" fill="#848484"/>
<path d="M1000.7,595.9L1017.0,591.8L1016.8,589.4L1000.6,593.5Z" fill="#818181"/>
<path d="M1017.0,591.8L1032.7,586.7L1032.5,584.2L1016.8,589.4Z" fill="#7e7e7e"/>
<path d="M1032.7,586.7L1047.6,580.5L1047.4,578.1L1032.5,584.2Z" fill="#7b7b7b"/>
<path d="M1047.6,580.5L1061.7,573.4L1061.4,571.0L1047.4,578.1Z" fill="#787878"/>
<path d="M1061.7,573.4L1074.8,565.4L1074.5,563.1L1061.4,571.0Z" fill="#747474"/>
<path d="M1074.8,565.4L1086.9,556.6L1086.5,554.3L1074.5,563.1Z" fill="#737373"/>
<path d="M1086.9,556.6L1097.7,547.2L1097.4,544.8L1086.5,554.3Z" fill="#747474"/>
<path d="M1097.7,547.2L1107.3,537.0L1107.0,534.8L1097.4,544.8Z" fill="#757575"/>
<path d="M1107.3,537.0L1115.6,526.4L1115.3,524.1L1107.0,534.8Z" fill="#757575"/>
<path d="M1115.6,526.4L1122.6,515.2L1122.2,513.0L1115.3,524.1Z" fill="#757575"/>
<path d="M1122.6,515.2L1128.1,503.8L1127.7,501.6L1122.2,513.0Z" fill="#757575"/>
<path d="M1128.1,503.8L1132.2,492.1L1131.8,489.9L1127.7,501.6Z" fill="#757575"/>
<path d="M1132.2,492.1L1134.8,480.2L1134.4,478.1L1131.8,489.9Z" fill="#747474"/>
<path d="M1134.8,480.2L1136.0,468.2L1135.6,466.1L1134.4,478.1Z" fill="#737373"/>
<path d="M1136.0,468.2L1135.8,456.3L1135.4,454.2L1135.6,466.1Z" fill="#727272"/>
<path d="M1135.8,456.3L1134.1,444.5L1133.7,442.5L1135.4,454.2Z" fill="#707070"/>
<path d="M760.9,446.4L759.5,458.3L760.0,456.2L761.3,444.4Z" fill="#999999"/>
<path d="M759.5,458.3L759.6,470.2L760.1,468.1L760.0,456.2Z" fill="#9b9b9b"/>
<path d="M759.6,470.2L761.2,482.1L761.6,479.9L760.1,468.1Z" fill="#9c9c9c"/>
<path d="M761.2,482.1L764.2,493.9L764.6,491.7L761.6,479.9Z" fill="#9d9d9d"/>
<path d="M764.2,493.9L768.6,505.5L769.1,503.3L764.6,491.7Z" fill="#9d9d9d"/>
<path d="M768.6,505.5L774.5,516.8L774.9,514.6L769.1,503.3Z" fill="#9d9d9d"/>
<path d="M774.5,516.8L781.7,527.7L782.1,525.5L774.9,514.6Z" fill="#9d9d9d"/>
<path d="M781.7,527.7L790.3,538.2L790.7,535.9L782.1,525.5Z" fill="#9c9c9c"/>
<path d="M790.3,538.2L800.3,548.1L800.6,545.7L790.7,535.9Z" fill="#9a9a9a"/>
<path d="M800.3,548.1L811.4,557.3L811.7,554.9L800.6,545.7Z" fill="#989898"/>
<path d="M811.4,557.3L823.7,565.8L824.0,563.4L811.7,554.9Z" fill="#969696"/>
<path d="M823.7,565.8L837.0,573.5L837.3,571.0L824.0,563.4Z" fill="#949494"/>
<path d="M837.0,573.5L851.3,580.2L851.5,577.8L837.3,571.0Z" fill="#949494"/>
<path d="M851.3,580.2L866.4,586.1L866.6,583.6L851.5,577.8Z" fill="#949494"/>
<path d="M866.4,586.1L882.2,590.9L882.3,588.4L866.6,583.6Z" fill="#939393"/>
<path d="M882.2,590.9L898.5,594.6L898.7,592.1L882.3,588.4Z" fill="#929292"/>
<path d="M898.5,594.6L915.3,597.2L915.4,594.7L898.7,592.1Z" fill="#919191"/>
<path d="M915.3,597.2L932.4,598.8L932.4,596.2L915.4,594.7Z" fill="#909090"/>
<path d="M932.4,598.8L949.6,599.1L949.6,596.6L932.4,596.2Z" fill="#8e8e8e"/>
<path d="M949.6,599.1L966.8,598.4L966.8,595.9L949.6,596.6Z" fill="#8c8c8c"/>
<path d="M966.8,598.4L983.9,596.5L983.7,594.0L966.8,595.9Z" fill="#8a8a8a"/>
<path d="M983.9,596.5L1000.6,593.5L1000.4,591.0L983.7,594.0Z" fill="#878787"/>
<path d="M1000.6,593.5L1016.8,589.4L1016.6,586.9L1000.4,591.0Z" fill="#848484"/>
<path d="M1016.8,589.4L1032.5,584.2L1032.2,581.8L1016.6,586.9Z" fill="#818181"/>
<path d="M1032.5,584.2L1047.4,578.1L1047.1,575.6L1032.2,581.8Z" fill="#7e7e7e"/>
<path d="M1047.4,578.1L1061.4,571.0L1061.1,568.6L1047.1,575.6Z" fill="#7b7b7b"/>
<path d="M1061.4,571.0L1074.5,563.1L1074.2,560.7L1061.1,568.6Z" fill="#777777"/>
<path d="M1074.5,563.1L1086.5,554.3L1086.1,551.9L1074.2,560.7Z" fill="#747474"/>
<path d="M1086.5,554.3L1097.4,544.8L1097.0,542.5L1086.1,551.9Z" fill="#757575"/>
<path d="M1097.4,544.8L1107.0,534.8L1106.5,532.4L1097.0,542.5Z" fill="#757575"/>
<path d="M1107.0,534.8L1115.3,524.1L1114.8,521.8L1106.5,532.4Z" fill="#767676"/>
<path d="M1115.3,524.1L1122.2,513.0L1121.7,510.8L1114.8,521.8Z" fill="#767676"/>
<path d="M1122.2,513.0L1127.7,501.6L1127.2,499.4L1121.7,510.8Z" fill="#767676"/>
<path d="M1127.7,501.6L1131.8,489.9L1131.3,487.8L1127.2,499.4Z" fill="#757575"/>
<path d="M1131.8,489.9L1134.4,478.1L1133.9,475.9L1131.3,487.8Z" fill="#757575"/>
<path d="M1134.4,478.1L1135.6,466.1L1135.1,464.1L1133.9,475.9Z" fill="#747474"/>
<path d="M1135.6,466.1L1135.4,454.2L1134.8,452.2L1135.1,464.1Z" fill="#727272"/>
<path d="M1135.4,454.2L1133.7,442.5L1133.2,440.5L1134.8,452.2Z" fill="#717171"/>
<path d="M764.0,432.8L761.3,444.4L761.9,442.4L764.6,430.9Z" fill="#999999"/>
<path d="M761.3,444.4L760.0,456.2L760.5,454.2L761.9,442.4Z" fill="#9b9b9b"/>
<path d="M760.0,456.2L760.1,468.1L760.6,466.0L760.5,454.2Z" fill="#9d9d9d"/>
<path d="M760.1,468.1L761.6,479.9L762.2,477.8L760.6,466.0Z" fill="#9e9e9e"/>
<path d="M761.6,479.9L764.6,491.7L765.2,489.5L762.2,477.8Z" fill="#9f9f9f"/>
<path d="M764.6,491.7L769.1,503.3L769.6,501.0L765.2,489.5Z" fill="#9f9f9f"/>
<path d="M769.1,503.3L774.9,514.6L775.4,512.3L769.6,501.0Z" fill="#9f9f9f"/>
<path d="M774.9,514.6L782.1,525.5L782.6,523.1L775.4,512.3Z" fill="#9f9f9f"/>
<path d="M782.1,525.5L790.7,535.9L791.2,533.5L782.6,523.1Z" fill="#9e9e9e"/>
<path d="M790.7,535.9L800.6,545.7L801.1,543.3L791.2,533.5Z" fill="#9d9d9d"/>
<path d="M800.6,545.7L811.7,554.9L812.1,552.5L801.1,543.3Z" fill="#9b9b9b"/>
<path d="M811.7,554.9L824.0,563.4L824.3,560.9L812.1,552.5Z" fill="#999999"/>
<path d="M824.0,563.4L837.3,571.0L837.6,568.5L824.3,560.9Z" fill="#979797"/>
<path d="M837.3,571.0L851.5,577.8L851.8,575.3L837.6,568.5Z" fill="#979797"/>
<path d="M851.5,577.8L866.6,583.6L866.8,581.0L851.8,575.3Z" fill="#979797"/>
<path d="M866.6,583.6L882.3,588.4L882.5,585.8L866.8,581.0Z" fill="#969696"/>
<path d="M882.3,588.4L898.7,592.1L898.8,589.5L882.5,585.8Z" fill="#959595"/>
<path d="M898.7,592.1L915.4,594.7L915.5,592.1L898.8,589.5Z" fill="#949494"/>
<path d="M915.4,594.7L932.4,596.2L932.5,593.6L915.5,592.1Z" fill="#939393"/>
<path d="M932.4,596.2L949.6,596.6L949.6,594.0L932.5,593.6Z" fill="#919191"/>
<path d="M949.6,596.6L966.8,595.9L966.7,593.3L949.6,594.0Z" fill="#8f8f8f"/>
<path d="M966.8,595.9L983.7,594.0L983.6,591.4L966.7,593.3Z" fill="#8d8d8d"/>
<path d="M983.7,594.0L1000.4,591.0L1000.2,588.4L983.6,591.4Z" fill="#8a8a8a"/>
<path d="M1000.4,591.0L1016.6,586.9L1016.4,584.3L1000.2,588.4Z" fill="#878787"/>
<path d="M1016.6,586.9L1032.2,581.8L1031.9,579.2L1016.4,584.3Z" fill="#848484"/>
<path d="M1032.2,581.8L1047.1,575.6L1046.8,573.1L1031.9,579.2Z" fill="#818181"/>
<path d="M1047.1,575.6L1061.1,568.6L1060.7,566.1L1046.8,573.1Z" fill="#7e7e7e"/>
<path d="M1061.1,568.6L1074.2,560.7L1073.7,558.2L1060.7,566.1Z" fill="#7b7b7b"/>
<path d="M1074.2,560.7L1086.1,551.9L1085.7,549.5L1073.7,558.2Z" fill="#777777"/>
<path d="M1086.1,551.9L1097.0,542.5L1096.5,540.1L1085.7,549.5Z" fill="#757575"/>
<path d="M1097.0,542.5L1106.5,532.4L1106.0,530.1L1096.5,540.1Z" fill="#767676"/>
<path d="M1106.5,532.4L1114.8,521.8L1114.3,519.5L1106.0,530.1Z" fill="#767676"/>
<path d="M1114.8,521.8L1121.7,510.8L1121.1,508.5L1114.3,519.5Z" fill="#767676"/>
<path d="M1121.7,510.8L1127.2,499.4L1126.6,497.2L1121.1,508.5Z" fill="#767676"/>
<path d="M1127.2,499.4L1131.3,487.8L1130.7,485.6L1126.6,497.2Z" fill="#767676"/>
<path d="M1131.3,487.8L1133.9,475.9L1133.3,473.8L1130.7,485.6Z" fill="#757575"/>
<path d="M1133.9,475.9L1135.1,464.1L1134.5,462.0L1133.3,473.8Z" fill="#747474"/>
<path d="M1135.1,464.1L1134.8,452.2L1134.3,450.2L1134.5,462.0Z" fill="#737373"/>
<path d="M1134.8,452.2L1133.2,440.5L1132.6,438.5L1134.3,450.2Z" fill="#717171"/>
<path d="M1133.2,440.5L1130.1,428.9L1129.6,427.0L1132.6,438.5Z" fill="#707070"/>
<path d="M764.6,430.9L761.9,442.4L762.5,440.4L765.2,428.9Z" fill="#9c9c9c"/>
<path d="M761.9,442.4L760.5,454.2L761.2,452.1L762.5,440.4Z" fill="#9e9e9e"/>
<path d="M760.5,454.2L760.6,466.0L761.3,463.9L761.2,452.1Z" fill="#9f9f9f"/>
<path d="M760.6,466.0L762.2,477.8L762.8,475.6L761.3,463.9Z" fill="#a0a0a0"/>
<path d="M762.2,477.8L765.2,489.5L765.8,487.3L762.8,475.6Z" fill="#a1a1a1"/>
<path d="M765.2,489.5L769.6,501.0L770.2,498.8L765.8,487.3Z" fill="#a2a2a2"/>
<path d="M769.6,501.0L775.4,512.3L776.0,510.0L770.2,498.8Z" fill="#a2a2a2"/>
<path d="M775.4,512.3L782.6,523.1L783.2,520.8L776.0,510.0Z" fill="#a1a1a1"/>
<path d="M782.6,523.1L791.2,533.5L791.7,531.1L783.2,520.8Z" fill="#a0a0a0"/>
<path d="M791.2,533.5L801.1,543.3L801.6,540.9L791.7,531.1Z" fill="#9f9f9f"/>
<path d="M801.1,543.3L812.1,552.5L812.6,550.0L801.6,540.9Z" fill="#9d9d9d"/>
<path d="M812.1,552.5L824.3,560.9L824.8,558.4L812.6,550.0Z" fill="#9b9b9b"/>
<path d="M824.3,560.9L837.6,568.5L838.0,566.0L824.8,558.4Z" fill="#9a9a9a"/>
<path d="M837.6,568.5L851.8,575.3L852.1,572.7L838.0,566.0Z" fill="#9a9a9a"/>
<path d="M851.8,575.3L866.8,581.0L867.1,578.4L852.1,572.7Z" fill="#9a9a9a"/>
<path d="M866.8,581.0L882.5,585.8L882.7,583.2L867.1,578.4Z" fill="#999999"/>
<path d="M882.5,585.8L898.8,589.5L898.9,586.9L882.7,583.2Z" fill="#989898"/>
<path d="M898.8,589.5L915.5,592.1L915.6,589.5L898.9,586.9Z" fill="#979797"/>
<path d="M915.5,592.1L932.5,593.6L932.5,591.0L915.6,589.5Z" fill="#969696"/>
<path d="M932.5,593.6L949.6,594.0L949.6,591.4L932.5,591.0Z" fill="#949494"/>
<path d="M949.6,594.0L966.7,593.3L966.6,590.6L949.6,591.4Z" fill="#929292"/>
<path d="M966.7,593.3L983.6,591.4L983.5,588.7L966.6,590.6Z" fill="#909090"/>
<path d="M983.6,591.4L1000.2,588.4L1000.0,585.7L983.5,588.7Z" fill="#8d8d8d"/>
<path d="M1000.2,588.4L1016.4,584.3L1016.1,581.7L1000.0,585.7Z" fill="#8b8b8b"/>
<path d="M1016.4,584.3L1031.9,579.2L1031.6,576.6L1016.1,581.7Z" fill="#888888"/>
<path d="M1031.9,579.2L1046.8,573.1L1046.4,570.5L1031.6,576.6Z" fill="#848484"/>
<path d="M1046.8,573.1L1060.7,566.1L1060.3,563.5L1046.4,570.5Z" fill="#818181"/>
<path d="M1060.7,566.1L1073.7,558.2L1073.3,555.7L1060.3,563.5Z" fill="#7e7e7e"/>
<path d="M1073.7,558.2L1085.7,549.5L1085.2,547.0L1073.3,555.7Z" fill="#7a7a7a"/>
<path d="M1085.7,549.5L1096.5,540.1L1095.9,537.7L1085.2,547.0Z" fill="#777777"/>
<path d="M1096.5,540.1L1106.0,530.1L1105.4,527.7L1095.9,537.7Z" fill="#767676"/>
<path d="M1106.0,530.1L1114.3,519.5L1113.7,517.2L1105.4,527.7Z" fill="#777777"/>
<path d="M1114.3,519.5L1121.1,508.5L1120.5,506.3L1113.7,517.2Z" fill="#777777"/>
<path d="M1121.1,508.5L1126.6,497.2L1126.0,494.9L1120.5,506.3Z" fill="#777777"/>
<path d="M1126.6,497.2L1130.7,485.6L1130.0,483.4L1126.0,494.9Z" fill="#767676"/>
<path d="M1130.7,485.6L1133.3,473.8L1132.7,471.7L1130.0,483.4Z" fill="#757575"/>
<path d="M1133.3,473.8L1134.5,462.0L1133.9,459.9L1132.7,471.7Z" fill="#757575"/>
<path d="M1134.5,462.0L1134.3,450.2L1133.6,448.1L1133.9,459.9Z" fill="#737373"/>
<path d="M1134.3,450.2L1132.6,438.5L1132.0,436.5L1133.6,448.1Z" fill="#727272"/>
<path d="M1132.6,438.5L1129.6,427.0L1128.9,425.0L1132.0,436.5Z" fill="#707070"/>
<path d="M765.2,428.9L762.5,440.4L763.2,438.4L765.8,426.9Z" fill="#9e9e9e"/>
<path d="M762.5,440.4L761.2,452.1L761.9,450.0L763.2,438.4Z" fill="#a0a0a0"/>
<path d="M761.2,452.1L761.3,463.9L762.0,461.8L761.9,450.0Z" fill="#a1a1a1"/>
<path d="M761.3,463.9L762.8,475.6L763.5,473.5L762.0,461.8Z" fill="#a3a3a3"/>
<path d="M762.8,475.6L765.8,487.3L766.5,485.1L763.5,473.5Z" fill="#a3a3a3"/>
<path d="M765.8,487.3L770.2,498.8L770.9,496.5L766.5,485.1Z" fill="#a4a4a4"/>
<path d="M770.2,498.8L776.0,510.0L776.7,507.6L770.9,496.5Z" fill="#a4a4a4"/>
<path d="M776.0,510.0L783.2,520.8L783.8,518.4L776.7,507.6Z" fill="#a3a3a3"/>
<path d="M783.2,520.8L791.7,531.1L792.3,528.7L783.8,518.4Z" fill="#a2a2a2"/>
<path d="M791.7,531.1L801.6,540.9L802.1,538.4L792.3,528.7Z" fill="#a1a1a1"/>
<path d="M801.6,540.9L812.6,550.0L813.1,547.5L802.1,538.4Z" fill="#9f9f9f"/>
<path d="M812.6,550.0L824.8,558.4L825.2,555.8L813.1,547.5Z" fill="#9d9d9d"/>
<path d="M824.8,558.4L838.0,566.0L838.4,563.4L825.2,555.8Z" fill="#9d9d9d"/>
<path d="M838.0,566.0L852.1,572.7L852.5,570.0L838.4,563.4Z" fill="#9d9d9d"/>
<path d="M852.1,572.7L867.1,578.4L867.4,575.8L852.5,570.0Z" fill="#9d9d9d"/>
<path d="M867.1,578.4L882.7,583.2L883.0,580.5L867.4,575.8Z" fill="#9c9c9c"/>
<path d="M882.7,583.2L898.9,586.9L899.1,584.1L883.0,580.5Z" fill="#9b9b9b"/>
<path d="M898.9,586.9L915.6,589.5L915.7,586.7L899.1,584.1Z" fill="#9a9a9a"/>
<path d="M915.6,589.5L932.5,591.0L932.5,588.2L915.7,586.7Z" fill="#999999"/>
<path d="M932.5,591.0L949.6,591.4L949.5,588.6L932.5,588.2Z" fill="#979797"/>
<path d="M949.6,591.4L966.6,590.6L966.5,587.9L949.5,588.6Z" fill="#959595"/>
<path d="M966.6,590.6L983.5,588.7L983.3,586.0L966.5,587.9Z" fill="#939393"/>
<path d="M983.5,588.7L1000.0,585.7L999.8,583.0L983.3,586.0Z" fill="#909090"/>
<path d="M1000.0,585.7L1016.1,581.7L1015.8,579.0L999.8,583.0Z" fill="#8e8e8e"/>
<path d="M1016.1,581.7L1031.6,576.6L1031.2,574.0L1015.8,579.0Z" fill="#8b8b8b"/>
<path d="M1031.6,576.6L1046.4,570.5L1046.0,567.9L1031.2,574.0Z" fill="#888888"/>
<path d="M1046.4,570.5L1060.3,563.5L1059.8,561.0L1046.0,567.9Z" fill="#848484"/>
<path d="M1060.3,563.5L1073.3,555.7L1072.7,553.1L1059.8,561.0Z" fill="#818181"/>
<path d="M1073.3,555.7L1085.2,547.0L1084.6,544.5L1072.7,553.1Z" fill="#7d7d7d"/>
<path d="M1085.2,547.0L1095.9,537.7L1095.3,535.2L1084.6,544.5Z" fill="#7a7a7a"/>
<path d="M1095.9,537.7L1105.4,527.7L1104.8,525.3L1095.3,535.2Z" fill="#777777"/>
<path d="M1105.4,527.7L1113.7,517.2L1113.0,514.8L1104.8,525.3Z" fill="#777777"/>
<path d="M1113.7,517.2L1120.5,506.3L1119.8,503.9L1113.0,514.8Z" fill="#777777"/>
<path d="M1120.5,506.3L1126.0,494.9L1125.3,492.7L1119.8,503.9Z" fill="#777777"/>
<path d="M1126.0,494.9L1130.0,483.4L1129.3,481.2L1125.3,492.7Z" fill="#777777"/>
<path d="M1130.0,483.4L1132.7,471.7L1131.9,469.5L1129.3,481.2Z" fill="#767676"/>
<path d="M1132.7,471.7L1133.9,459.9L1133.1,457.8L1131.9,469.5Z" fill="#757575"/>
<path d="M1133.9,459.9L1133.6,448.1L1132.9,446.1L1133.1,457.8Z" fill="#747474"/>
<path d="M1133.6,448.1L1132.0,436.5L1131.2,434.5L1132.9,446.1Z" fill="#727272"/>
<path d="M1132.0,436.5L1128.9,425.0L1128.2,423.1L1131.2,434.5Z" fill="#717171"/>
<path d="M769.9,415.7L765.8,426.9L766.6,425.0L770.6,413.8Z" fill="#9d9d9d"/>
<path d="M765.8,426.9L763.2,438.4L763.9,436.4L766.6,425.0Z" fill="#a0a0a0"/>
<path d="M763.2,438.4L761.9,450.0L762.6,448.0L763.9,436.4Z" fill="#a2a2a2"/>
<path d="M761.9,450.0L762.0,461.8L762.8,459.6L762.6,448.0Z" fill="#a4a4a4"/>
<path d="M762.0,461.8L763.5,473.5L764.3,471.3L762.8,459.6Z" fill="#a5a5a5"/>
<path d="M763.5,473.5L766.5,485.1L767.2,482.8L764.3,471.3Z" fill="#a6a6a6"/>
<path d="M766.5,485.1L770.9,496.5L771.6,494.2L767.2,482.8Z" fill="#a6a6a6"/>
<path d="M770.9,496.5L776.7,507.6L777.4,505.3L771.6,494.2Z" fill="#a6a6a6"/>
<path d="M776.7,507.6L783.8,518.4L784.5,516.0L777.4,505.3Z" fill="#a5a5a5"/>
<path d="M783.8,518.4L792.3,528.7L793.0,526.2L784.5,516.0Z" fill="#a4a4a4"/>
<path d="M792.3,528.7L802.1,538.4L802.7,535.9L793.0,526.2Z" fill="#a3a3a3"/>
<path d="M802.1,538.4L813.1,547.5L813.7,544.9L802.7,535.9Z" fill="#a1a1a1"/>
<path d="M813.1,547.5L825.2,555.8L825.8,553.2L813.7,544.9Z" fill="#9f9f9f"/>
<path d="M825.2,555.8L838.4,563.4L838.9,560.7L825.8,553.2Z" fill="#a0a0a0"/>
<path d="M838.4,563.4L852.5,570.0L852.9,567.3L838.9,560.7Z" fill="#a0a0a0"/>
<path d="M852.5,570.0L867.4,575.8L867.7,573.0L852.9,567.3Z" fill="#a0a0a0"/>
<path d="M867.4,575.8L883.0,580.5L883.2,577.7L867.7,573.0Z" fill="#9f9f9f"/>
<path d="M883.0,580.5L899.1,584.1L899.3,581.4L883.2,577.7Z" fill="#9e9e9e"/>
<path d="M899.1,584.1L915.7,586.7L915.8,584.0L899.3,581.4Z" fill="#9d9d9d"/>
<path d="M915.7,586.7L932.5,588.2L932.6,585.4L915.8,584.0Z" fill="#9c9c9c"/>
<path d="M932.5,588.2L949.5,588.6L949.5,585.8L932.6,585.4Z" fill="#9a9a9a"/>
<path d="M949.5,588.6L966.5,587.9L966.4,585.1L949.5,585.8Z" fill="#989898"/>
<path d="M966.5,587.9L983.3,586.0L983.1,583.2L966.4,585.1Z" fill="#969696"/>
<path d="M983.3,586.0L999.8,583.0L999.5,580.3L983.1,583.2Z" fill="#939393"/>
<path d="M999.8,583.0L1015.8,579.0L1015.5,576.3L999.5,580.3Z" fill="#919191"/>
<path d="M1015.8,579.0L1031.2,574.0L1030.8,571.2L1015.5,576.3Z" fill="#8e8e8e"/>
<path d="M1031.2,574.0L1046.0,567.9L1045.5,565.2L1030.8,571.2Z" fill="#8b8b8b"/>
<path d="M1046.0,567.9L1059.8,561.0L1059.3,558.3L1045.5,565.2Z" fill="#878787"/>
<path d="M1059.8,561.0L1072.7,553.1L1072.2,550.5L1059.3,558.3Z" fill="#848484"/>
<path d="M1072.7,553.1L1084.6,544.5L1084.0,542.0L1072.2,550.5Z" fill="#818181"/>
<path d="M1084.6,544.5L1095.3,535.2L1094.6,532.7L1084.0,542.0Z" fill="#7d7d7d"/>
<path d="M1095.3,535.2L1104.8,525.3L1104.1,522.8L1094.6,532.7Z" fill="#797979"/>
<path d="M1104.8,525.3L1113.0,514.8L1112.2,512.4L1104.1,522.8Z" fill="#777777"/>
<path d="M1113.0,514.8L1119.8,503.9L1119.0,501.6L1112.2,512.4Z" fill="#787878"/>
<path d="M1119.8,503.9L1125.3,492.7L1124.5,490.4L1119.0,501.6Z" fill="#777777"/>
<path d="M1125.3,492.7L1129.3,481.2L1128.5,478.9L1124.5,490.4Z" fill="#777777"/>
<path d="M1129.3,481.2L1131.9,469.5L1131.1,467.3L1128.5,478.9Z" fill="#767676"/>
<path d="M1131.9,469.5L1133.1,457.8L1132.3,455.7L1131.1,467.3Z" fill="#757575"/>
<path d="M1133.1,457.8L1132.9,446.1L1132.0,444.0L1132.3,455.7Z" fill="#747474"/>
<path d="M1132.9,446.1L1131.2,434.5L1130.4,432.5L1132.0,444.0Z" fill="#737373"/>
<path d="M1131.2,434.5L1128.2,423.1L1127.4,421.1L1130.4,432.5Z" fill="#717171"/>
<path d="M1128.2,423.1L1123.9,412.0L1123.1,410.1L1127.4,421.1Z" fill="#6f6f6f"/>
<path d="M770.6,413.8L766.6,425.0L767.4,423.0L771.4,411.9Z" fill="#a0a0a0"/>
<path d="M766.6,425.0L763.9,436.4L764.8,434.4L767.4,423.0Z" fill="#a2a2a2"/>
<path d="M763.9,436.4L762.6,448.0L763.5,445.9L764.8,434.4Z" fill="#a4a4a4"/>
<path d="M762.6,448.0L762.8,459.6L763.6,457.5L763.5,445.9Z" fill="#a6a6a6"/>
<path d="M762.8,459.6L764.3,471.3L765.2,469.1L763.6,457.5Z" fill="#a7a7a7"/>
<path d="M764.3,471.3L767.2,482.8L768.1,480.6L765.2,469.1Z" fill="#a8a8a8"/>
<path d="M767.2,482.8L771.6,494.2L772.5,491.9L768.1,480.6Z" fill="#a8a8a8"/>
<path d="M771.6,494.2L777.4,505.3L778.2,502.9L772.5,491.9Z" fill="#a8a8a8"/>
<path d="M777.4,505.3L784.5,516.0L785.3,513.5L778.2,502.9Z" fill="#a7a7a7"/>
<path d="M784.5,516.0L793.0,526.2L793.7,523.7L785.3,513.5Z" fill="#a7a7a7"/>
<path d="M793.0,526.2L802.7,535.9L803.4,533.3L793.7,523.7Z" fill="#a5a5a5"/>
<path d="M802.7,535.9L813.7,544.9L814.3,542.3L803.4,533.3Z" fill="#a4a4a4"/>
<path d="M813.7,544.9L825.8,553.2L826.3,550.5L814.3,542.3Z" fill="#a2a2a2"/>
<path d="M825.8,553.2L838.9,560.7L839.4,558.0L826.3,550.5Z" fill="#a3a3a3"/>
<path d="M838.9,560.7L852.9,567.3L853.3,564.6L839.4,558.0Z" fill="#a3a3a3"/>
<path d="M852.9,567.3L867.7,573.0L868.1,570.2L853.3,564.6Z" fill="#a3a3a3"/>
<path d="M867.7,573.0L883.2,577.7L883.5,574.9L868.1,570.2Z" fill="#a2a2a2"/>
<path d="M883.2,577.7L899.3,581.4L899.5,578.5L883.5,574.9Z" fill="#a1a1a1"/>
<path d="M899.3,581.4L915.8,584.0L916.0,581.1L899.5,578.5Z" fill="#a0a0a0"/>
<path d="M915.8,584.0L932.6,585.4L932.6,582.6L916.0,581.1Z" fill="#9f9f9f"/>
<path d="M932.6,585.4L949.5,585.8L949.5,582.9L932.6,582.6Z" fill="#9d9d9d"/>
<path d="M949.5,585.8L966.4,585.1L966.3,582.2L949.5,582.9Z" fill="#9b9b9b"/>
<path d="M966.4,585.1L983.1,583.2L982.9,580.4L966.3,582.2Z" fill="#999999"/>
<path d="M983.1,583.2L999.5,580.3L999.2,577.4L982.9,580.4Z" fill="#969696"/>
<path d="M999.5,580.3L1015.5,576.3L1015.1,573.5L999.2,577.4Z" fill="#949494"/>
<path d="M1015.5,576.3L1030.8,571.2L1030.4,568.5L1015.1,573.5Z" fill="#919191"/>
<path d="M1030.8,571.2L1045.5,565.2L1045.0,562.5L1030.4,568.5Z" fill="#8e8e8e"/>
<path d="M1045.5,565.2L1059.3,558.3L1058.7,555.6L1045.0,562.5Z" fill="#8a8a8a"/>
<path d="M1059.3,558.3L1072.2,550.5L1071.5,547.9L1058.7,555.6Z" fill="#878787"/>
<path d="M1072.2,550.5L1084.0,542.0L1083.3,539.4L1071.5,547.9Z" fill="#848484"/>
<path d="M1084.0,542.0L1094.6,532.7L1093.9,530.2L1083.3,539.4Z" fill="#808080"/>
<path d="M1094.6,532.7L1104.1,522.8L1103.3,520.3L1093.9,530.2Z" fill="#7d7d7d"/>
<path d="M1104.1,522.8L1112.2,512.4L1111.4,510.0L1103.3,520.3Z" fill="#797979"/>
<path d="M1112.2,512.4L1119.0,501.6L1118.2,499.2L1111.4,510.0Z" fill="#787878"/>
<path d="M1119.0,501.6L1124.5,490.4L1123.6,488.1L1118.2,499.2Z" fill="#787878"/>
<path d="M1124.5,490.4L1128.5,478.9L1127.6,476.7L1123.6,488.1Z" fill="#777777"/>
<path d="M1128.5,478.9L1131.1,467.3L1130.2,465.2L1127.6,476.7Z" fill="#777777"/>
<path d="M1131.1,467.3L1132.3,455.7L1131.4,453.6L1130.2,465.2Z" fill="#767676"/>
<path d="M1132.3,455.7L1132.0,444.0L1131.1,442.0L1131.4,453.6Z" fill="#757575"/>
<path d="M1132.0,444.0L1130.4,432.5L1129.5,430.5L1131.1,442.0Z" fill="#737373"/>
<path d="M1130.4,432.5L1127.4,421.1L1126.5,419.2L1129.5,430.5Z" fill="#727272"/>
<path d="M1127.4,421.1L1123.1,410.1L1122.2,408.2L1126.5,419.2Z" fill="#707070"/>
<path d="M771.4,411.9L767.4,423.0L768.4,421.1L772.3,410.1Z" fill="#a2a2a2"/>
<path d="M767.4,423.0L764.8,434.4L765.7,432.4L768.4,421.1Z" fill="#a4a4a4"/>
<path d="M764.8,434.4L763.5,445.9L764.5,443.8L765.7,432.4Z" fill="#a6a6a6"/>
<path d="M763.5,445.9L763.6,457.5L764.6,455.3L764.5,443.8Z" fill="#a8a8a8"/>
<path d="M763.6,457.5L765.2,469.1L766.1,466.9L764.6,455.3Z" fill="#a9a9a9"/>
<path d="M765.2,469.1L768.1,480.6L769.0,478.3L766.1,466.9Z" fill="#aaaaaa"/>
<path d="M768.1,480.6L772.5,491.9L773.4,489.5L769.0,478.3Z" fill="#aaaaaa"/>
<path d="M772.5,491.9L778.2,502.9L779.1,500.5L773.4,489.5Z" fill="#aaaaaa"/>
<path d="M778.2,502.9L785.3,513.5L786.2,511.0L779.1,500.5Z" fill="#a9a9a9"/>
<path d="M785.3,513.5L793.7,523.7L794.6,521.1L786.2,511.0Z" fill="#a9a9a9"/>
<path d="M793.7,523.7L803.4,533.3L804.2,530.7L794.6,521.1Z" fill="#a7a7a7"/>
<path d="M803.4,533.3L814.3,542.3L815.0,539.6L804.2,530.7Z" fill="#a6a6a6"/>
<path d="M814.3,542.3L826.3,550.5L827.0,547.8L815.0,539.6Z" fill="#a5a5a5"/>
<path d="M826.3,550.5L839.4,558.0L840.0,555.2L827.0,547.8Z" fill="#a5a5a5"/>
<path d="M839.4,558.0L853.3,564.6L853.8,561.8L840.0,555.2Z" fill="#a6a6a6"/>
<path d="M853.3,564.6L868.1,570.2L868.5,567.4L853.8,561.8Z" fill="#a5a5a5"/>
<path d="M868.1,570.2L883.5,574.9L883.9,572.0L868.5,567.4Z" fill="#a5a5a5"/>
<path d="M883.5,574.9L899.5,578.5L899.8,575.6L883.9,572.0Z" fill="#a4a4a4"/>
<path d="M899.5,578.5L916.0,581.1L916.1,578.2L899.8,575.6Z" fill="#a3a3a3"/>
<path d="M916.0,581.1L932.6,582.6L932.7,579.6L916.1,578.2Z" fill="#a1a1a1"/>
<path d="M932.6,582.6L949.5,582.9L949.4,580.0L932.7,579.6Z" fill="#a0a0a0"/>
<path d="M949.5,582.9L966.3,582.2L966.1,579.3L949.4,580.0Z" fill="#9e9e9e"/>
<path d="M966.3,582.2L982.9,580.4L982.7,577.4L966.1,579.3Z" fill="#9c9c9c"/>
<path d="M982.9,580.4L999.2,577.4L998.9,574.5L982.7,577.4Z" fill="#999999"/>
<path d="M999.2,577.4L1015.1,573.5L1014.7,570.6L998.9,574.5Z" fill="#979797"/>
<path d="M1015.1,573.5L1030.4,568.5L1029.9,565.6L1014.7,570.6Z" fill="#949494"/>
<path d="M1030.4,568.5L1045.0,562.5L1044.4,559.7L1029.9,565.6Z" fill="#919191"/>
<path d="M1045.0,562.5L1058.7,555.6L1058.1,552.8L1044.4,559.7Z" fill="#8e8e8e"/>
<path d="M1058.7,555.6L1071.5,547.9L1070.8,545.2L1058.1,552.8Z" fill="#8a8a8a"/>
<path d="M1071.5,547.9L1083.3,539.4L1082.5,536.7L1070.8,545.2Z" fill="#878787"/>
<path d="M1083.3,539.4L1093.9,530.2L1093.1,527.6L1082.5,536.7Z" fill="#838383"/>
<path d="M1093.9,530.2L1103.3,520.3L1102.4,517.8L1093.1,527.6Z" fill="#808080"/>
<path d="M1103.3,520.3L1111.4,510.0L1110.5,507.5L1102.4,517.8Z" fill="#7c7c7c"/>
<path d="M1111.4,510.0L1118.2,499.2L1117.2,496.8L1110.5,507.5Z" fill="#797979"/>
<path d="M1118.2,499.2L1123.6,488.1L1122.6,485.7L1117.2,496.8Z" fill="#787878"/>
<path d="M1123.6,488.1L1127.6,476.7L1126.6,474.4L1122.6,485.7Z" fill="#787878"/>
<path d="M1127.6,476.7L1130.2,465.2L1129.2,463.0L1126.6,474.4Z" fill="#777777"/>
<path d="M1130.2,465.2L1131.4,453.6L1130.4,451.4L1129.2,463.0Z" fill="#767676"/>
<path d="M1131.4,453.6L1131.1,442.0L1130.1,439.9L1130.4,451.4Z" fill="#757575"/>
<path d="M1131.1,442.0L1129.5,430.5L1128.5,428.5L1130.1,439.9Z" fill="#747474"/>
<path d="M1129.5,430.5L1126.5,419.2L1125.6,417.3L1128.5,428.5Z" fill="#727272"/>
<path d="M1126.5,419.2L1122.2,408.2L1121.3,406.4L1125.6,417.3Z" fill="#707070"/>
<path d="M777.6,399.3L772.3,410.1L773.3,408.2L778.5,397.6Z" fill="#a1a1a1"/>
<path d="M772.3,410.1L768.4,421.1L769.4,419.2L773.3,408.2Z" fill="#a4a4a4"/>
<path d="M768.4,421.1L765.7,432.4L766.8,430.4L769.4,419.2Z" fill="#a6a6a6"/>
<path d="M765.7,432.4L764.5,443.8L765.5,441.7L766.8,430.4Z" fill="#a8a8a8"/>
<path d="M764.5,443.8L764.6,455.3L765.6,453.2L765.5,441.7Z" fill="#aaaaaa"/>
<path d="M764.6,455.3L766.1,466.9L767.2,464.6L765.6,453.2Z" fill="#ababab"/>
<path d="M766.1,466.9L769.0,478.3L770.1,476.0L767.2,464.6Z" fill="#acacac"/>
<path d="M769.0,478.3L773.4,489.5L774.4,487.1L770.1,476.0Z" fill="#acacac"/>
<path d="M773.4,489.5L779.1,500.5L780.1,498.0L774.4,487.1Z" fill="#acacac"/>
<path d="M779.1,500.5L786.2,511.0L787.1,508.5L780.1,498.0Z" fill="#ababab"/>
<path d="M786.2,511.0L794.6,521.1L795.5,518.5L787.1,508.5Z" fill="#ababab"/>
<path d="M794.6,521.1L804.2,530.7L805.0,528.0L795.5,518.5Z" fill="#a9a9a9"/>
<path d="M804.2,530.7L815.0,539.6L815.8,536.9L805.0,528.0Z" fill="#a8a8a8"/>
<path d="M815.0,539.6L827.0,547.8L827.7,545.0L815.8,536.9Z" fill="#a8a8a8"/>
<path d="M827.0,547.8L840.0,555.2L840.6,552.4L827.7,545.0Z" fill="#a8a8a8"/>
<path d="M840.0,555.2L853.8,561.8L854.4,558.9L840.6,552.4Z" fill="#a8a8a8"/>
<path d="M853.8,561.8L868.5,567.4L869.0,564.4L854.4,558.9Z" fill="#a8a8a8"/>
<path d="M868.5,567.4L883.9,572.0L884.2,569.1L869.0,564.4Z" fill="#a8a8a8"/>
<path d="M883.9,572.0L899.8,575.6L900.0,572.6L884.2,569.1Z" fill="#a7a7a7"/>
<path d="M899.8,575.6L916.1,578.2L916.3,575.2L900.0,572.6Z" fill="#a6a6a6"/>
<path d="M916.1,578.2L932.7,579.6L932.8,576.6L916.3,575.2Z" fill="#a4a4a4"/>
<path d="M932.7,579.6L949.4,580.0L949.4,577.0L932.8,576.6Z" fill="#a3a3a3"/>
<path d="M949.4,580.0L966.1,579.3L966.0,576.3L949.4,577.0Z" fill="#a1a1a1"/>
<path d="M966.1,579.3L982.7,577.4L982.4,574.4L966.0,576.3Z" fill="#9e9e9e"/>
<path d="M982.7,577.4L998.9,574.5L998.6,571.6L982.4,574.4Z" fill="#9c9c9c"/>
<path d="M998.9,574.5L1014.7,570.6L1014.3,567.6L998.6,571.6Z" fill="#999999"/>
<path d="M1014.7,570.6L1029.9,565.6L1029.4,562.7L1014.3,567.6Z" fill="#979797"/>
<path d="M1029.9,565.6L1044.4,559.7L1043.8,556.8L1029.4,562.7Z" fill="#949494"/>
<path d="M1044.4,559.7L1058.1,552.8L1057.4,550.0L1043.8,556.8Z" fill="#909090"/>
<path d="M1058.1,552.8L1070.8,545.2L1070.0,542.4L1057.4,550.0Z" fill="#8d8d8d"/>
<path d="M1070.8,545.2L1082.5,536.7L1081.7,534.0L1070.0,542.4Z" fill="#8a8a8a"/>
<path d="M1082.5,536.7L1093.1,527.6L1092.2,524.9L1081.7,534.0Z" fill="#868686"/>
<path d="M1093.1,527.6L1102.4,517.8L1101.5,515.2L1092.2,524.9Z" fill="#838383"/>
<path d="M1102.4,517.8L1110.5,507.5L1109.5,505.0L1101.5,515.2Z" fill="#7f7f7f"/>
<path d="M1110.5,507.5L1117.2,496.8L1116.2,494.4L1109.5,505.0Z" fill="#7c7c7c"/>
<path d="M1117.2,496.8L1122.6,485.7L1121.6,483.4L1116.2,494.4Z" fill="#787878"/>
<path d="M1122.6,485.7L1126.6,474.4L1125.5,472.2L1121.6,483.4Z" fill="#787878"/>
<path d="M1126.6,474.4L1129.2,463.0L1128.1,460.8L1125.5,472.2Z" fill="#777777"/>
<path d="M1129.2,463.0L1130.4,451.4L1129.3,449.3L1128.1,460.8Z" fill="#777777"/>
<path d="M1130.4,451.4L1130.1,439.9L1129.1,437.9L1129.3,449.3Z" fill="#757575"/>
<path d="M1130.1,439.9L1128.5,428.5L1127.5,426.5L1129.1,437.9Z" fill="#747474"/>
<path d="M1128.5,428.5L1125.6,417.3L1124.5,415.4L1127.5,426.5Z" fill="#727272"/>
<path d="M1125.6,417.3L1121.3,406.4L1120.3,404.5L1124.5,415.4Z" fill="#717171"/>
<path d="M1121.3,406.4L1115.7,395.8L1114.8,394.0L1120.3,404.5Z" fill="#6f6f6f"/>
<path d="M778.5,397.6L773.3,408.2L774.4,406.3L779.6,395.8Z" fill="#a3a3a3"/>
<path d="M773.3,408.2L769.4,419.2L770.5,417.2L774.4,406.3Z" fill="#a6a6a6"/>
<path d="M769.4,419.2L766.8,430.4L767.9,428.4L770.5,417.2Z" fill="#a8a8a8"/>
<path d="M766.8,430.4L765.5,441.7L766.6,439.7L767.9,428.4Z" fill="#aaaaaa"/>
<path d="M765.5,441.7L765.6,453.2L766.8,451.0L766.6,439.7Z" fill="#acacac"/>
<path d="M765.6,453.2L767.2,464.6L768.3,462.4L766.8,451.0Z" fill="#adadad"/>
<path d="M767.2,464.6L770.1,476.0L771.2,473.6L768.3,462.4Z" fill="#adadad"/>
<path d="M770.1,476.0L774.4,487.1L775.5,484.7L771.2,473.6Z" fill="#aeaeae"/>
<path d="M774.4,487.1L780.1,498.0L781.1,495.5L775.5,484.7Z" fill="#aeaeae"/>
<path d="M780.1,498.0L787.1,508.5L788.1,505.9L781.1,495.5Z" fill="#adadad"/>
<path d="M787.1,508.5L795.5,518.5L796.4,515.9L788.1,505.9Z" fill="#acacac"/>
<path d="M795.5,518.5L805.0,528.0L806.0,525.3L796.4,515.9Z" fill="#ababab"/>
<path d="M805.0,528.0L815.8,536.9L816.7,534.1L806.0,525.3Z" fill="#aaaaaa"/>
<path d="M815.8,536.9L827.7,545.0L828.5,542.2L816.7,534.1Z" fill="#aaaaaa"/>
<path d="M827.7,545.0L840.6,552.4L841.3,549.5L828.5,542.2Z" fill="#ababab"/>
<path d="M840.6,552.4L854.4,558.9L855.0,555.9L841.3,549.5Z" fill="#ababab"/>
<path d="M854.4,558.9L869.0,564.4L869.5,561.5L855.0,555.9Z" fill="#ababab"/>
<path d="M869.0,564.4L884.2,569.1L884.6,566.0L869.5,561.5Z" fill="#aaaaaa"/>
<path d="M884.2,569.1L900.0,572.6L900.3,569.6L884.6,566.0Z" fill="#a9a9a9"/>
<path d="M900.0,572.6L916.3,575.2L916.5,572.1L900.3,569.6Z" fill="#a8a8a8"/>
<path d="M916.3,575.2L932.8,576.6L932.8,573.5L916.5,572.1Z" fill="#a7a7a7"/>
<path d="M932.8,576.6L949.4,577.0L949.4,573.9L932.8,573.5Z" fill="#a5a5a5"/>
<path d="M949.4,577.0L966.0,576.3L965.9,573.2L949.4,573.9Z" fill="#a3a3a3"/>
<path d="M966.0,576.3L982.4,574.4L982.2,571.4L965.9,573.2Z" fill="#a1a1a1"/>
<path d="M982.4,574.4L998.6,571.6L998.2,568.5L982.2,571.4Z" fill="#9f9f9f"/>
<path d="M998.6,571.6L1014.3,567.6L1013.8,564.6L998.2,568.5Z" fill="#9c9c9c"/>
<path d="M1014.3,567.6L1029.4,562.7L1028.8,559.7L1013.8,564.6Z" fill="#9a9a9a"/>
<path d="M1029.4,562.7L1043.8,556.8L1043.2,553.9L1028.8,559.7Z" fill="#979797"/>
<path d="M1043.8,556.8L1057.4,550.0L1056.7,547.1L1043.2,553.9Z" fill="#939393"/>
<path d="M1057.4,550.0L1070.0,542.4L1069.2,539.6L1056.7,547.1Z" fill="#909090"/>
<path d="M1070.0,542.4L1081.7,534.0L1080.8,531.2L1069.2,539.6Z" fill="#8d8d8d"/>
<path d="M1081.7,534.0L1092.2,524.9L1091.2,522.2L1080.8,531.2Z" fill="#898989"/>
<path d="M1092.2,524.9L1101.5,515.2L1100.4,512.6L1091.2,522.2Z" fill="#868686"/>
<path d="M1101.5,515.2L1109.5,505.0L1108.4,502.5L1100.4,512.6Z" fill="#838383"/>
<path d="M1109.5,505.0L1116.2,494.4L1115.1,491.9L1108.4,502.5Z" fill="#7f7f7f"/>
<path d="M1116.2,494.4L1121.6,483.4L1120.4,481.0L1115.1,491.9Z" fill="#7c7c7c"/>
<path d="M1121.6,483.4L1125.5,472.2L1124.4,469.8L1120.4,481.0Z" fill="#787878"/>
<path d="M1125.5,472.2L1128.1,460.8L1126.9,458.5L1124.4,469.8Z" fill="#787878"/>
<path d="M1128.1,460.8L1129.3,449.3L1128.1,447.2L1126.9,458.5Z" fill="#777777"/>
<path d="M1129.3,449.3L1129.1,437.9L1127.9,435.8L1128.1,447.2Z" fill="#767676"/>
<path d="M1129.1,437.9L1127.5,426.5L1126.3,424.5L1127.9,435.8Z" fill="#747474"/>
<path d="M1127.5,426.5L1124.5,415.4L1123.4,413.5L1126.3,424.5Z" fill="#737373"/>
<path d="M1124.5,415.4L1120.3,404.5L1119.2,402.7L1123.4,413.5Z" fill="#717171"/>
<path d="M1120.3,404.5L1114.8,394.0L1113.7,392.2L1119.2,402.7Z" fill="#6f6f6f"/>
<path d="M785.9,385.6L779.6,395.8L780.7,394.0L787.0,383.9Z" fill="#a2a2a2"/>
<path d="M779.6,395.8L774.4,406.3L775.5,404.5L780.7,394.0Z" fill="#a5a5a5"/>
<path d="M774.4,406.3L770.5,417.2L771.7,415.3L775.5,404.5Z" fill="#a8a8a8"/>
<path d="M770.5,417.2L767.9,428.4L769.1,426.4L771.7,415.3Z" fill="#aaaaaa"/>
<path d="M767.9,428.4L766.6,439.7L767.9,437.6L769.1,426.4Z" fill="#acacac"/>
<path d="M766.6,439.7L766.8,451.0L768.0,448.8L767.9,437.6Z" fill="#adadad"/>
<path d="M766.8,451.0L768.3,462.4L769.5,460.1L768.0,448.8Z" fill="#afafaf"/>
<path d="M768.3,462.4L771.2,473.6L772.4,471.3L769.5,460.1Z" fill="#afafaf"/>
<path d="M771.2,473.6L775.5,484.7L776.7,482.3L772.4,471.3Z" fill="#b0b0b0"/>
<path d="M775.5,484.7L781.1,495.5L782.3,493.0L776.7,482.3Z" fill="#b0b0b0"/>
<path d="M781.1,495.5L788.1,505.9L789.2,503.3L782.3,493.0Z" fill="#afafaf"/>
<path d="M788.1,505.9L796.4,515.9L797.5,513.2L789.2,503.3Z" fill="#aeaeae"/>
<path d="M796.4,515.9L806.0,525.3L806.9,522.6L797.5,513.2Z" fill="#adadad"/>
<path d="M806.0,525.3L816.7,534.1L817.6,531.3L806.9,522.6Z" fill="#acacac"/>
<path d="M816.7,534.1L828.5,542.2L829.3,539.3L817.6,531.3Z" fill="#adadad"/>
<path d="M828.5,542.2L841.3,549.5L842.0,546.5L829.3,539.3Z" fill="#adadad"/>
<path d="M841.3,549.5L855.0,555.9L855.6,552.9L842.0,546.5Z" fill="#aeaeae"/>
<path d="M855.0,555.9L869.5,561.5L870.0,558.4L855.6,552.9Z" fill="#adadad"/>
<path d="M869.5,561.5L884.6,566.0L885.1,562.9L870.0,558.4Z" fill="#adadad"/>
<path d="M884.6,566.0L900.3,569.6L900.7,566.5L885.1,562.9Z" fill="#acacac"/>
<path d="M900.3,569.6L916.5,572.1L916.7,569.0L900.7,566.5Z" fill="#ababab"/>
<path d="M916.5,572.1L932.8,573.5L932.9,570.4L916.7,569.0Z" fill="#aaaaaa"/>
<path d="M932.8,573.5L949.4,573.9L949.3,570.7L932.9,570.4Z" fill="#a8a8a8"/>
<path d="M949.4,573.9L965.9,573.2L965.7,570.0L949.3,570.7Z" fill="#a6a6a6"/>
<path d="M965.9,573.2L982.2,571.4L981.9,568.2L965.7,570.0Z" fill="#a4a4a4"/>
<path d="M982.2,571.4L998.2,568.5L997.8,565.4L981.9,568.2Z" fill="#a2a2a2"/>
<path d="M998.2,568.5L1013.8,564.6L1013.3,561.5L997.8,565.4Z" fill="#9f9f9f"/>
<path d="M1013.8,564.6L1028.8,559.7L1028.2,556.7L1013.3,561.5Z" fill="#9c9c9c"/>
<path d="M1028.8,559.7L1043.2,553.9L1042.4,550.9L1028.2,556.7Z" fill="#999999"/>
<path d="M1043.2,553.9L1056.7,547.1L1055.8,544.2L1042.4,550.9Z" fill="#969696"/>
<path d="M1056.7,547.1L1069.2,539.6L1068.3,536.7L1055.8,544.2Z" fill="#939393"/>
<path d="M1069.2,539.6L1080.8,531.2L1079.8,528.4L1068.3,536.7Z" fill="#909090"/>
<path d="M1080.8,531.2L1091.2,522.2L1090.2,519.5L1079.8,528.4Z" fill="#8c8c8c"/>
<path d="M1091.2,522.2L1100.4,512.6L1099.3,509.9L1090.2,519.5Z" fill="#898989"/>
<path d="M1100.4,512.6L1108.4,502.5L1107.3,499.9L1099.3,509.9Z" fill="#868686"/>
<path d="M1108.4,502.5L1115.1,491.9L1113.9,489.4L1107.3,499.9Z" fill="#828282"/>
<path d="M1115.1,491.9L1120.4,481.0L1119.2,478.6L1113.9,489.4Z" fill="#7f7f7f"/>
<path d="M1120.4,481.0L1124.4,469.8L1123.1,467.5L1119.2,478.6Z" fill="#7b7b7b"/>
<path d="M1124.4,469.8L1126.9,458.5L1125.7,456.3L1123.1,467.5Z" fill="#787878"/>
<path d="M1126.9,458.5L1128.1,447.2L1126.8,445.0L1125.7,456.3Z" fill="#777777"/>
<path d="M1128.1,447.2L1127.9,435.8L1126.6,433.7L1126.8,445.0Z" fill="#767676"/>
<path d="M1127.9,435.8L1126.3,424.5L1125.1,422.6L1126.6,433.7Z" fill="#757575"/>
<path d="M1126.3,424.5L1123.4,413.5L1122.2,411.6L1125.1,422.6Z" fill="#737373"/>
<path d="M1123.4,413.5L1119.2,402.7L1118.0,400.9L1122.2,411.6Z" fill="#717171"/>
<path d="M1119.2,402.7L1113.7,392.2L1112.5,390.5L1118.0,400.9Z" fill="#6f6f6f"/>
<path d="M787.0,383.9L780.7,394.0L781.9,392.3L788.2,382.3Z" fill="#a4a4a4"/>
<path d="M780.7,394.0L775.5,404.5L776.8,402.7L781.9,392.3Z" fill="#a7a7a7"/>
<path d="M775.5,404.5L771.7,415.3L773.0,413.4L776.8,402.7Z" fill="#a9a9a9"/>
<path d="M771.7,415.3L769.1,426.4L770.4,424.4L773.0,413.4Z" fill="#acacac"/>
<path d="M769.1,426.4L767.9,437.6L769.2,435.5L770.4,424.4Z" fill="#aeaeae"/>
<path d="M767.9,437.6L768.0,448.8L769.3,446.7L769.2,435.5Z" fill="#afafaf"/>
<path d="M768.0,448.8L769.5,460.1L770.8,457.8L769.3,446.7Z" fill="#b0b0b0"/>
<path d="M769.5,460.1L772.4,471.3L773.7,468.9L770.8,457.8Z" fill="#b1b1b1"/>
<path d="M772.4,471.3L776.7,482.3L777.9,479.8L773.7,468.9Z" fill="#b1b1b1"/>
<path d="M776.7,482.3L782.3,493.0L783.5,490.4L777.9,479.8Z" fill="#b1b1b1"/>
<path d="M782.3,493.0L789.2,503.3L790.4,500.7L783.5,490.4Z" fill="#b1b1b1"/>
<path d="M789.2,503.3L797.5,513.2L798.6,510.5L790.4,500.7Z" fill="#b0b0b0"/>
<path d="M797.5,513.2L806.9,522.6L808.0,519.7L798.6,510.5Z" fill="#afafaf"/>
<path d="M806.9,522.6L817.6,531.3L818.5,528.4L808.0,519.7Z" fill="#afafaf"/>
<path d="M817.6,531.3L829.3,539.3L830.2,536.3L818.5,528.4Z" fill="#b0b0b0"/>
<path d="M829.3,539.3L842.0,546.5L842.8,543.5L830.2,536.3Z" fill="#b0b0b0"/>
<path d="M842.0,546.5L855.6,552.9L856.3,549.8L842.8,543.5Z" fill="#b0b0b0"/>
<path d="M855.6,552.9L870.0,558.4L870.6,555.3L856.3,549.8Z" fill="#b0b0b0"/>
<path d="M870.0,558.4L885.1,562.9L885.5,559.8L870.6,555.3Z" fill="#afafaf"/>
<path d="M885.1,562.9L900.7,566.5L901.0,563.3L885.5,559.8Z" fill="#afafaf"/>
<path d="M900.7,566.5L916.7,569.0L916.9,565.7L901.0,563.3Z" fill="#aeaeae"/>
<path d="M916.7,569.0L932.9,570.4L933.0,567.2L916.9,565.7Z" fill="#acacac"/>
<path d="M932.9,570.4L949.3,570.7L949.3,567.5L933.0,567.2Z" fill="#ababab"/>
<path d="M949.3,570.7L965.7,570.0L965.5,566.8L949.3,567.5Z" fill="#a9a9a9"/>
<path d="M965.7,570.0L981.9,568.2L981.6,565.0L965.5,566.8Z" fill="#a7a7a7"/>
<path d="M981.9,568.2L997.8,565.4L997.4,562.2L981.6,565.0Z" fill="#a4a4a4"/>
<path d="M997.8,565.4L1013.3,561.5L1012.8,558.4L997.4,562.2Z" fill="#a2a2a2"/>
<path d="M1013.3,561.5L1028.2,556.7L1027.6,553.6L1012.8,558.4Z" fill="#9f9f9f"/>
<path d="M1028.2,556.7L1042.4,550.9L1041.7,547.8L1027.6,553.6Z" fill="#9c9c9c"/>
<path d="M1042.4,550.9L1055.8,544.2L1055.0,541.2L1041.7,547.8Z" fill="#999999"/>
<path d="M1055.8,544.2L1068.3,536.7L1067.4,533.7L1055.0,541.2Z" fill="#969696"/>
<path d="M1068.3,536.7L1079.8,528.4L1078.8,525.6L1067.4,533.7Z" fill="#939393"/>
<path d="M1079.8,528.4L1090.2,519.5L1089.0,516.7L1078.8,525.6Z" fill="#8f8f8f"/>
<path d="M1090.2,519.5L1099.3,509.9L1098.1,507.2L1089.0,516.7Z" fill="#8c8c8c"/>
<path d="M1099.3,509.9L1107.3,499.9L1106.0,497.3L1098.1,507.2Z" fill="#898989"/>
<path d="M1107.3,499.9L1113.9,489.4L1112.6,486.9L1106.0,497.3Z" fill="#858585"/>
<path d="M1113.9,489.4L1119.2,478.6L1117.9,476.2L1112.6,486.9Z" fill="#828282"/>
<path d="M1119.2,478.6L1123.1,467.5L1121.8,465.2L1117.9,476.2Z" fill="#7f7f7f"/>
<path d="M1123.1,467.5L1125.7,456.3L1124.3,454.0L1121.8,465.2Z" fill="#7b7b7b"/>
<path d="M1125.7,456.3L1126.8,445.0L1125.5,442.9L1124.3,454.0Z" fill="#787878"/>
<path d="M1126.8,445.0L1126.6,433.7L1125.3,431.7L1125.5,442.9Z" fill="#767676"/>
<path d="M1126.6,433.7L1125.1,422.6L1123.7,420.6L1125.3,431.7Z" fill="#757575"/>
<path d="M1125.1,422.6L1122.2,411.6L1120.9,409.7L1123.7,420.6Z" fill="#737373"/>
<path d="M1122.2,411.6L1118.0,400.9L1116.7,399.1L1120.9,409.7Z" fill="#727272"/>
<path d="M1118.0,400.9L1112.5,390.5L1111.3,388.8L1116.7,399.1Z" fill="#707070"/>
<path d="M1112.5,390.5L1105.9,380.5L1104.7,378.9L1111.3,388.8Z" fill="#6e6e6e"/>
<path d="M788.2,382.3L781.9,392.3L783.2,390.6L789.4,380.6Z" fill="#a6a6a6"/>
<path d="M781.9,392.3L776.8,402.7L778.1,400.9L783.2,390.6Z" fill="#a9a9a9"/>
<path d="M776.8,402.7L773.0,413.4L774.3,411.5L778.1,400.9Z" fill="#ababab"/>
<path d="M773.0,413.4L770.4,424.4L771.8,422.4L774.3,411.5Z" fill="#aeaeae"/>
<path d="M770.4,424.4L769.2,435.5L770.6,433.4L771.8,422.4Z" fill="#afafaf"/>
<path d="M769.2,435.5L769.3,446.7L770.7,444.5L770.6,433.4Z" fill="#b1b1b1"/>
<path d="M769.3,446.7L770.8,457.8L772.2,455.5L770.7,444.5Z" fill="#b2b2b2"/>
<path d="M770.8,457.8L773.7,468.9L775.1,466.5L772.2,455.5Z" fill="#b3b3b3"/>
<path d="M773.7,468.9L777.9,479.8L779.3,477.3L775.1,466.5Z" fill="#b3b3b3"/>
<path d="M777.9,479.8L783.5,490.4L784.8,487.8L779.3,477.3Z" fill="#b3b3b3"/>
<path d="M783.5,490.4L790.4,500.7L791.7,498.0L784.8,487.8Z" fill="#b3b3b3"/>
<path d="M790.4,500.7L798.6,510.5L799.8,507.7L791.7,498.0Z" fill="#b2b2b2"/>
<path d="M798.6,510.5L808.0,519.7L809.1,516.9L799.8,507.7Z" fill="#b1b1b1"/>
<path d="M808.0,519.7L818.5,528.4L819.6,525.4L809.1,516.9Z" fill="#b1b1b1"/>
<path d="M818.5,528.4L830.2,536.3L831.1,533.3L819.6,525.4Z" fill="#b2b2b2"/>
<path d="M830.2,536.3L842.8,543.5L843.6,540.4L831.1,533.3Z" fill="#b3b3b3"/>
<path d="M842.8,543.5L856.3,549.8L857.0,546.7L843.6,540.4Z" fill="#b3b3b3"/>
<path d="M856.3,549.8L870.6,555.3L871.2,552.1L857.0,546.7Z" fill="#b2b2b2"/>
<path d="M870.6,555.3L885.5,559.8L886.0,556.5L871.2,552.1Z" fill="#b2b2b2"/>
<path d="M885.5,559.8L901.0,563.3L901.4,560.0L886.0,556.5Z" fill="#b1b1b1"/>
<path d="M901.0,563.3L916.9,565.7L917.1,562.4L901.4,560.0Z" fill="#b0b0b0"/>
<path d="M916.9,565.7L933.0,567.2L933.1,563.8L917.1,562.4Z" fill="#afafaf"/>
<path d="M933.0,567.2L949.3,567.5L949.2,564.2L933.1,563.8Z" fill="#adadad"/>
<path d="M949.3,567.5L965.5,566.8L965.4,563.5L949.2,564.2Z" fill="#ababab"/>
<path d="M965.5,566.8L981.6,565.0L981.3,561.7L965.4,563.5Z" fill="#a9a9a9"/>
<path d="M981.6,565.0L997.4,562.2L997.0,558.9L981.3,561.7Z" fill="#a7a7a7"/>
<path d="M997.4,562.2L1012.8,558.4L1012.2,555.1L997.0,558.9Z" fill="#a5a5a5"/>
<path d="M1012.8,558.4L1027.6,553.6L1026.9,550.4L1012.2,555.1Z" fill="#a2a2a2"/>
<path d="M1027.6,553.6L1041.7,547.8L1040.9,544.7L1026.9,550.4Z" fill="#9f9f9f"/>
<path d="M1041.7,547.8L1055.0,541.2L1054.1,538.1L1040.9,544.7Z" fill="#9c9c9c"/>
<path d="M1055.0,541.2L1067.4,533.7L1066.3,530.8L1054.1,538.1Z" fill="#999999"/>
<path d="M1067.4,533.7L1078.8,525.6L1077.6,522.6L1066.3,530.8Z" fill="#969696"/>
<path d="M1078.8,525.6L1089.0,516.7L1087.8,513.9L1077.6,522.6Z" fill="#929292"/>
<path d="M1089.0,516.7L1098.1,507.2L1096.9,504.5L1087.8,513.9Z" fill="#8f8f8f"/>
<path d="M1098.1,507.2L1106.0,497.3L1104.7,494.6L1096.9,504.5Z" fill="#8c8c8c"/>
<path d="M1106.0,497.3L1112.6,486.9L1111.2,484.3L1104.7,494.6Z" fill="#888888"/>
<path d="M1112.6,486.9L1117.9,476.2L1116.4,473.7L1111.2,484.3Z" fill="#858585"/>
<path d="M1117.9,476.2L1121.8,465.2L1120.3,462.8L1116.4,473.7Z" fill="#828282"/>
<path d="M1121.8,465.2L1124.3,454.0L1122.8,451.8L1120.3,462.8Z" fill="#7e7e7e"/>
<path d="M1124.3,454.0L1125.5,442.9L1124.0,440.7L1122.8,451.8Z" fill="#7b7b7b"/>
<path d="M1125.5,442.9L1125.3,431.7L1123.8,429.6L1124.0,440.7Z" fill="#787878"/>
<path d="M1125.3,431.7L1123.7,420.6L1122.3,418.6L1123.8,429.6Z" fill="#767676"/>
<path d="M1123.7,420.6L1120.9,409.7L1119.4,407.8L1122.3,418.6Z" fill="#747474"/>
<path d="M1120.9,409.7L1116.7,399.1L1115.3,397.3L1119.4,407.8Z" fill="#727272"/>
<path d="M1116.7,399.1L1111.3,388.8L1110.0,387.1L1115.3,397.3Z" fill="#707070"/>
<path d="M1111.3,388.8L1104.7,378.9L1103.5,377.3L1110.0,387.1Z" fill="#6e6e6e"/>
<path d="M1103.5,377.3L1095.8,368.0L1094.6,366.5L1102.1,375.7Z" fill="#6e6e6e"/>
<path d="M796.8,371.1L789.4,380.6L790.7,379.0L798.0,369.6Z" fill="#a5a5a5"/>
<path d="M789.4,380.6L783.2,390.6L784.6,388.8L790.7,379.0Z" fill="#a8a8a8"/>
<path d="M783.2,390.6L778.1,400.9L779.6,399.1L784.6,388.8Z" fill="#aaaaaa"/>
<path d="M778.1,400.9L774.3,411.5L775.8,409.6L779.6,399.1Z" fill="#adadad"/>
<path d="M774.3,411.5L771.8,422.4L773.3,420.4L775.8,409.6Z" fill="#afafaf"/>
<path d="M771.8,422.4L770.6,433.4L772.1,431.3L773.3,420.4Z" fill="#b1b1b1"/>
<path d="M770.6,433.4L770.7,444.5L772.3,442.3L772.1,431.3Z" fill="#b3b3b3"/>
<path d="M770.7,444.5L772.2,455.5L773.7,453.2L772.3,442.3Z" fill="#b4b4b4"/>
<path d="M772.2,455.5L775.1,466.5L776.6,464.1L773.7,453.2Z" fill="#b4b4b4"/>
<path d="M775.1,466.5L779.3,477.3L780.8,474.8L776.6,464.1Z" fill="#b5b5b5"/>
<path d="M779.3,477.3L784.8,487.8L786.3,485.2L780.8,474.8Z" fill="#b5b5b5"/>
<path d="M784.8,487.8L791.7,498.0L793.1,495.3L786.3,485.2Z" fill="#b4b4b4"/>
<path d="M791.7,498.0L799.8,507.7L801.1,504.9L793.1,495.3Z" fill="#b3b3b3"/>
<path d="M799.8,507.7L809.1,516.9L810.3,514.0L801.1,504.9Z" fill="#b3b3b3"/>
<path d="M809.1,516.9L819.6,525.4L820.7,522.4L810.3,514.0Z" fill="#b4b4b4"/>
<path d="M819.6,525.4L831.1,533.3L832.2,530.2L820.7,522.4Z" fill="#b5b5b5"/>
<path d="M831.1,533.3L843.6,540.4L844.6,537.3L832.2,530.2Z" fill="#b5b5b5"/>
<path d="M843.6,540.4L857.0,546.7L857.8,543.5L844.6,537.3Z" fill="#b5b5b5"/>
<path d="M857.0,546.7L871.2,552.1L871.9,548.8L857.8,543.5Z" fill="#b5b5b5"/>
<path d="M871.2,552.1L886.0,556.5L886.6,553.2L871.9,548.8Z" fill="#b4b4b4"/>
<path d="M886.0,556.5L901.4,560.0L901.8,556.6L886.6,553.2Z" fill="#b4b4b4"/>
<path d="M901.4,560.0L917.1,562.4L917.4,559.1L901.8,556.6Z" fill="#b3b3b3"/>
<path d="M917.1,562.4L933.1,563.8L933.2,560.5L917.4,559.1Z" fill="#b1b1b1"/>
<path d="M933.1,563.8L949.2,564.2L949.2,560.8L933.2,560.5Z" fill="#b0b0b0"/>
<path d="M949.2,564.2L965.4,563.5L965.2,560.1L949.2,560.8Z" fill="#aeaeae"/>
<path d="M965.4,563.5L981.3,561.7L981.0,558.4L965.2,560.1Z" fill="#acacac"/>
<path d="M981.3,561.7L997.0,558.9L996.5,555.6L981.0,558.4Z" fill="#aaaaaa"/>
<path d="M997.0,558.9L1012.2,555.1L1011.6,551.8L996.5,555.6Z" fill="#a7a7a7"/>
<path d="M1012.2,555.1L1026.9,550.4L1026.1,547.1L1011.6,551.8Z" fill="#a4a4a4"/>
<path d="M1026.9,550.4L1040.9,544.7L1040.0,541.5L1026.1,547.1Z" fill="#a2a2a2"/>
<path d="M1040.9,544.7L1054.1,538.1L1053.1,535.0L1040.0,541.5Z" fill="#9f9f9f"/>
<path d="M1054.1,538.1L1066.3,530.8L1065.3,527.7L1053.1,535.0Z" fill="#9c9c9c"/>
<path d="M1066.3,530.8L1077.6,522.6L1076.4,519.7L1065.3,527.7Z" fill="#989898"/>
<path d="M1077.6,522.6L1087.8,513.9L1086.6,511.0L1076.4,519.7Z" fill="#959595"/>
<path d="M1087.8,513.9L1096.9,504.5L1095.5,501.7L1086.6,511.0Z" fill="#929292"/>
<path d="M1096.9,504.5L1104.7,494.6L1103.3,491.9L1095.5,501.7Z" fill="#8f8f8f"/>
<path d="M1104.7,494.6L1111.2,484.3L1109.7,481.7L1103.3,491.9Z" fill="#8b8b8b"/>
<path d="M1111.2,484.3L1116.4,473.7L1114.9,471.2L1109.7,481.7Z" fill="#888888"/>
<path d="M1116.4,473.7L1120.3,462.8L1118.8,460.4L1114.9,471.2Z" fill="#858585"/>
<path d="M1120.3,462.8L1122.8,451.8L1121.3,449.5L1118.8,460.4Z" fill="#828282"/>
<path d="M1122.8,451.8L1124.0,440.7L1122.4,438.5L1121.3,449.5Z" fill="#7f7f7f"/>
<path d="M1124.0,440.7L1123.8,429.6L1122.3,427.5L1122.4,438.5Z" fill="#7c7c7c"/>
<path d="M1123.8,429.6L1122.3,418.6L1120.7,416.7L1122.3,427.5Z" fill="#797979"/>
<path d="M1122.3,418.6L1119.4,407.8L1117.9,406.0L1120.7,416.7Z" fill="#767676"/>
<path d="M1119.4,407.8L1115.3,397.3L1113.9,395.5L1117.9,406.0Z" fill="#747474"/>
<path d="M1115.3,397.3L1110.0,387.1L1108.6,385.4L1113.9,395.5Z" fill="#727272"/>
<path d="M1110.0,387.1L1103.5,377.3L1102.1,375.7L1108.6,385.4Z" fill="#707070"/>
<path d="M1102.1,375.7L1094.6,366.5L1093.2,365.0L1100.7,374.2Z" fill="#717171"/>
<path d="M798.0,369.6L790.7,379.0L792.1,377.4L799.4,368.1Z" fill="#a6a6a6"/>
<path d="M790.7,379.0L784.6,388.8L786.0,387.2L792.1,377.4Z" fill="#a9a9a9"/>
<path d="M784.6,388.8L779.6,399.1L781.1,397.3L786.0,387.2Z" fill="#acacac"/>
<path d="M779.6,399.1L775.8,409.6L777.4,407.7L781.1,397.3Z" fill="#afafaf"/>
<path d="M775.8,409.6L773.3,420.4L774.9,418.4L777.4,407.7Z" fill="#b1b1b1"/>
<path d="M773.3,420.4L772.1,431.3L773.7,429.2L774.9,418.4Z" fill="#b3b3b3"/>
<path d="M772.1,431.3L772.3,442.3L773.9,440.0L773.7,429.2Z" fill="#b4b4b4"/>
<path d="M772.3,442.3L773.7,453.2L775.4,450.9L773.9,440.0Z" fill="#b5b5b5"/>
<path d="M773.7,453.2L776.6,464.1L778.2,461.7L775.4,450.9Z" fill="#b6b6b6"/>
<path d="M776.6,464.1L780.8,474.8L782.3,472.2L778.2,461.7Z" fill="#b6b6b6"/>
<path d="M780.8,474.8L786.3,485.2L787.8,482.5L782.3,472.2Z" fill="#b6b6b6"/>
<path d="M786.3,485.2L793.1,495.3L794.5,492.5L787.8,482.5Z" fill="#b6b6b6"/>
<path d="M793.1,495.3L801.1,504.9L802.5,502.0L794.5,492.5Z" fill="#b5b5b5"/>
<path d="M801.1,504.9L810.3,514.0L811.6,511.0L802.5,502.0Z" fill="#b5b5b5"/>
<path d="M810.3,514.0L820.7,522.4L821.9,519.4L811.6,511.0Z" fill="#b6b6b6"/>
<path d="M820.7,522.4L832.2,530.2L833.2,527.1L821.9,519.4Z" fill="#b7b7b7"/>
<path d="M832.2,530.2L844.6,537.3L845.5,534.0L833.2,527.1Z" fill="#b7b7b7"/>
<path d="M844.6,537.3L857.8,543.5L858.7,540.2L845.5,534.0Z" fill="#b7b7b7"/>
<path d="M857.8,543.5L871.9,548.8L872.6,545.5L858.7,540.2Z" fill="#b7b7b7"/>
<path d="M871.9,548.8L886.6,553.2L887.1,549.8L872.6,545.5Z" fill="#b7b7b7"/>
<path d="M886.6,553.2L901.8,556.6L902.2,553.2L887.1,549.8Z" fill="#b6b6b6"/>
<path d="M901.8,556.6L917.4,559.1L917.6,555.6L902.2,553.2Z" fill="#b5b5b5"/>
<path d="M917.4,559.1L933.2,560.5L933.3,557.0L917.6,555.6Z" fill="#b4b4b4"/>
<path d="M933.2,560.5L949.2,560.8L949.2,557.3L933.3,557.0Z" fill="#b2b2b2"/>
<path d="M949.2,560.8L965.2,560.1L965.0,556.6L949.2,557.3Z" fill="#b0b0b0"/>
<path d="M965.2,560.1L981.0,558.4L980.6,554.9L965.0,556.6Z" fill="#aeaeae"/>
<path d="M981.0,558.4L996.5,555.6L996.0,552.2L980.6,554.9Z" fill="#acacac"/>
<path d="M996.5,555.6L1011.6,551.8L1010.9,548.5L996.0,552.2Z" fill="#aaaaaa"/>
<path d="M1011.6,551.8L1026.1,547.1L1025.3,543.8L1010.9,548.5Z" fill="#a7a7a7"/>
<path d="M1026.1,547.1L1040.0,541.5L1039.1,538.2L1025.3,543.8Z" fill="#a4a4a4"/>
<path d="M1040.0,541.5L1053.1,535.0L1052.0,531.8L1039.1,538.2Z" fill="#a1a1a1"/>
<path d="M1053.1,535.0L1065.3,527.7L1064.1,524.6L1052.0,531.8Z" fill="#9e9e9e"/>
<path d="M1065.3,527.7L1076.4,519.7L1075.2,516.6L1064.1,524.6Z" fill="#9b9b9b"/>
<path d="M1076.4,519.7L1086.6,511.0L1085.2,508.0L1075.2,516.6Z" fill="#989898"/>
<path d="M1086.6,511.0L1095.5,501.7L1094.1,498.9L1085.2,508.0Z" fill="#959595"/>
<path d="M1095.5,501.7L1103.3,491.9L1101.7,489.2L1094.1,498.9Z" fill="#929292"/>
<path d="M1103.3,491.9L1109.7,481.7L1108.2,479.1L1101.7,489.2Z" fill="#8e8e8e"/>
<path d="M1109.7,481.7L1114.9,471.2L1113.3,468.7L1108.2,479.1Z" fill="#8b8b8b"/>
<path d="M1114.9,471.2L1118.8,460.4L1117.1,458.0L1113.3,468.7Z" fill="#888888"/>
<path d="M1118.8,460.4L1121.3,449.5L1119.6,447.2L1117.1,458.0Z" fill="#858585"/>
<path d="M1121.3,449.5L1122.4,438.5L1120.8,436.3L1119.6,447.2Z" fill="#828282"/>
<path d="M1122.4,438.5L1122.3,427.5L1120.6,425.5L1120.8,436.3Z" fill="#7f7f7f"/>
<path d="M1122.3,427.5L1120.7,416.7L1119.1,414.7L1120.6,425.5Z" fill="#7c7c7c"/>
<path d="M1120.7,416.7L1117.9,406.0L1116.3,404.1L1119.1,414.7Z" fill="#7a7a7a"/>
<path d="M1117.9,406.0L1113.9,395.5L1112.3,393.8L1116.3,404.1Z" fill="#777777"/>
<path d="M1113.9,395.5L1108.6,385.4L1107.1,383.8L1112.3,393.8Z" fill="#757575"/>
<path d="M1108.6,385.4L1102.1,375.7L1100.7,374.2L1107.1,383.8Z" fill="#737373"/>
<path d="M1100.7,374.2L1093.2,365.0L1091.7,363.6L1099.2,372.6Z" fill="#757575"/>
<path d="M1093.2,365.0L1084.7,356.4L1083.3,355.0L1091.7,363.6Z" fill="#737373"/>
<path d="M807.6,359.3L799.4,368.1L800.8,366.6L809.0,357.9Z" fill="#a5a5a5"/>
<path d="M799.4,368.1L792.1,377.4L793.6,375.8L800.8,366.6Z" fill="#a8a8a8"/>
<path d="M792.1,377.4L786.0,387.2L787.6,385.5L793.6,375.8Z" fill="#ababab"/>
<path d="M786.0,387.2L781.1,397.3L782.7,395.5L787.6,385.5Z" fill="#aeaeae"/>
<path d="M781.1,397.3L777.4,407.7L779.0,405.8L782.7,395.5Z" fill="#b0b0b0"/>
<path d="M777.4,407.7L774.9,418.4L776.6,416.4L779.0,405.8Z" fill="#b2b2b2"/>
<path d="M774.9,418.4L773.7,429.2L775.5,427.0L776.6,416.4Z" fill="#b4b4b4"/>
<path d="M773.7,429.2L773.9,440.0L775.6,437.8L775.5,427.0Z" fill="#b6b6b6"/>
<path d="M773.9,440.0L775.4,450.9L777.1,448.5L775.6,437.8Z" fill="#b7b7b7"/>
<path d="M775.4,450.9L778.2,461.7L779.9,459.2L777.1,448.5Z" fill="#b8b8b8"/>
<path d="M778.2,461.7L782.3,472.2L784.0,469.6L779.9,459.2Z" fill="#b8b8b8"/>
<path d="M782.3,472.2L787.8,482.5L789.4,479.8L784.0,469.6Z" fill="#b8b8b8"/>
<path d="M787.8,482.5L794.5,492.5L796.1,489.7L789.4,479.8Z" fill="#b7b7b7"/>
<path d="M794.5,492.5L802.5,502.0L804.0,499.1L796.1,489.7Z" fill="#b7b7b7"/>
<path d="M802.5,502.0L811.6,511.0L813.0,508.0L804.0,499.1Z" fill="#b8b8b8"/>
<path d="M811.6,511.0L821.9,519.4L823.2,516.3L813.0,508.0Z" fill="#b9b9b9"/>
<path d="M821.9,519.4L833.2,527.1L834.4,523.9L823.2,516.3Z" fill="#b9b9b9"/>
<path d="M833.2,527.1L845.5,534.0L846.6,530.8L834.4,523.9Z" fill="#bababa"/>
<path d="M845.5,534.0L858.7,540.2L859.6,536.8L846.6,530.8Z" fill="#bababa"/>
<path d="M858.7,540.2L872.6,545.5L873.3,542.1L859.6,536.8Z" fill="#bababa"/>
<path d="M872.6,545.5L887.1,549.8L887.7,546.4L873.3,542.1Z" fill="#b9b9b9"/>
<path d="M887.1,549.8L902.2,553.2L902.6,549.7L887.7,546.4Z" fill="#b8b8b8"/>
<path d="M902.2,553.2L917.6,555.6L917.9,552.1L902.6,549.7Z" fill="#b7b7b7"/>
<path d="M917.6,555.6L933.3,557.0L933.5,553.4L917.9,552.1Z" fill="#b6b6b6"/>
<path d="M933.3,557.0L949.2,557.3L949.1,553.8L933.5,553.4Z" fill="#b5b5b5"/>
<path d="M949.2,557.3L965.0,556.6L964.8,553.1L949.1,553.8Z" fill="#b3b3b3"/>
<path d="M965.0,556.6L980.6,554.9L980.3,551.4L964.8,553.1Z" fill="#b1b1b1"/>
<path d="M980.6,554.9L996.0,552.2L995.5,548.7L980.3,551.4Z" fill="#afafaf"/>
<path d="M996.0,552.2L1010.9,548.5L1010.3,545.0L995.5,548.7Z" fill="#acacac"/>
<path d="M1010.9,548.5L1025.3,543.8L1024.5,540.4L1010.3,545.0Z" fill="#aaaaaa"/>
<path d="M1025.3,543.8L1039.1,538.2L1038.1,534.9L1024.5,540.4Z" fill="#a7a7a7"/>
<path d="M1039.1,538.2L1052.0,531.8L1050.9,528.5L1038.1,534.9Z" fill="#a4a4a4"/>
<path d="M1052.0,531.8L1064.1,524.6L1062.9,521.4L1050.9,528.5Z" fill="#a1a1a1"/>
<path d="M1064.1,524.6L1075.2,516.6L1073.8,513.5L1062.9,521.4Z" fill="#9e9e9e"/>
<path d="M1075.2,516.6L1085.2,508.0L1083.7,505.0L1073.8,513.5Z" fill="#9b9b9b"/>
<path d="M1085.2,508.0L1094.1,498.9L1092.5,496.0L1083.7,505.0Z" fill="#989898"/>
<path d="M1094.1,498.9L1101.7,489.2L1100.1,486.4L1092.5,496.0Z" fill="#949494"/>
<path d="M1101.7,489.2L1108.2,479.1L1106.5,476.4L1100.1,486.4Z" fill="#919191"/>
<path d="M1108.2,479.1L1113.3,468.7L1111.6,466.1L1106.5,476.4Z" fill="#8e8e8e"/>
<path d="M1113.3,468.7L1117.1,458.0L1115.4,455.6L1111.6,466.1Z" fill="#8b8b8b"/>
<path d="M1117.1,458.0L1119.6,447.2L1117.9,444.9L1115.4,455.6Z" fill="#888888"/>
<path d="M1119.6,447.2L1120.8,436.3L1119.0,434.1L1117.9,444.9Z" fill="#858585"/>
<path d="M1120.8,436.3L1120.6,425.5L1118.8,423.4L1119.0,434.1Z" fill="#828282"/>
<path d="M1120.6,425.5L1119.1,414.7L1117.4,412.7L1118.8,423.4Z" fill="#7f7f7f"/>
<path d="M1119.1,414.7L1116.3,404.1L1114.6,402.3L1117.4,412.7Z" fill="#7d7d7d"/>
<path d="M1116.3,404.1L1112.3,393.8L1110.6,392.0L1114.6,402.3Z" fill="#7a7a7a"/>
<path d="M1112.3,393.8L1107.1,383.8L1105.5,382.1L1110.6,392.0Z" fill="#787878"/>
<path d="M1107.1,383.8L1100.7,374.2L1099.2,372.6L1105.5,382.1Z" fill="#767676"/>
<path d="M1099.2,372.6L1091.7,363.6L1090.2,362.2L1097.5,371.1Z" fill="#787878"/>
<path d="M1091.7,363.6L1083.3,355.0L1081.9,353.7L1090.2,362.2Z" fill="#777777"/>
<path d="M809.0,357.9L800.8,366.6L802.3,365.2L810.4,356.6Z" fill="#a7a7a7"/>
<path d="M800.8,366.6L793.6,375.8L795.3,374.3L802.3,365.2Z" fill="#aaaaaa"/>
<path d="M793.6,375.8L787.6,385.5L789.3,383.8L795.3,374.3Z" fill="#adadad"/>
<path d="M787.6,385.5L782.7,395.5L784.5,393.8L789.3,383.8Z" fill="#afafaf"/>
<path d="M782.7,395.5L779.0,405.8L780.8,403.9L784.5,393.8Z" fill="#b2b2b2"/>
<path d="M779.0,405.8L776.6,416.4L778.4,414.4L780.8,403.9Z" fill="#b4b4b4"/>
<path d="M776.6,416.4L775.5,427.0L777.3,424.9L778.4,414.4Z" fill="#b6b6b6"/>
<path d="M775.5,427.0L775.6,437.8L777.5,435.6L777.3,424.9Z" fill="#b7b7b7"/>
<path d="M775.6,437.8L777.1,448.5L778.9,446.2L777.5,435.6Z" fill="#b8b8b8"/>
<path d="M777.1,448.5L779.9,459.2L781.7,456.7L778.9,446.2Z" fill="#b9b9b9"/>
<path d="M779.9,459.2L784.0,469.6L785.7,467.0L781.7,456.7Z" fill="#b9b9b9"/>
<path d="M784.0,469.6L789.4,479.8L791.1,477.1L785.7,467.0Z" fill="#b9b9b9"/>
<path d="M789.4,479.8L796.1,489.7L797.7,486.8L791.1,477.1Z" fill="#b9b9b9"/>
<path d="M796.1,489.7L804.0,499.1L805.5,496.1L797.7,486.8Z" fill="#b9b9b9"/>
<path d="M804.0,499.1L813.0,508.0L814.5,504.9L805.5,496.1Z" fill="#bababa"/>
<path d="M813.0,508.0L823.2,516.3L824.6,513.1L814.5,504.9Z" fill="#bbbbbb"/>
<path d="M823.2,516.3L834.4,523.9L835.7,520.6L824.6,513.1Z" fill="#bcbcbc"/>
<path d="M834.4,523.9L846.6,530.8L847.7,527.4L835.7,520.6Z" fill="#bcbcbc"/>
<path d="M846.6,530.8L859.6,536.8L860.5,533.4L847.7,527.4Z" fill="#bcbcbc"/>
<path d="M859.6,536.8L873.3,542.1L874.2,538.6L860.5,533.4Z" fill="#bcbcbc"/>
<path d="M873.3,542.1L887.7,546.4L888.4,542.8L874.2,538.6Z" fill="#bbbbbb"/>
<path d="M887.7,546.4L902.6,549.7L903.1,546.1L888.4,542.8Z" fill="#bbbbbb"/>
<path d="M902.6,549.7L917.9,552.1L918.2,548.5L903.1,546.1Z" fill="#bababa"/>
<path d="M917.9,552.1L933.5,553.4L933.6,549.8L918.2,548.5Z" fill="#b8b8b8"/>
<path d="M933.5,553.4L949.1,553.8L949.1,550.1L933.6,549.8Z" fill="#b7b7b7"/>
<path d="M949.1,553.8L964.8,553.1L964.6,549.5L949.1,550.1Z" fill="#b5b5b5"/>
<path d="M964.8,553.1L980.3,551.4L979.9,547.8L964.6,549.5Z" fill="#b3b3b3"/>
<path d="M980.3,551.4L995.5,548.7L994.9,545.1L979.9,547.8Z" fill="#b1b1b1"/>
<path d="M995.5,548.7L1010.3,545.0L1009.5,541.5L994.9,545.1Z" fill="#afafaf"/>
<path d="M1010.3,545.0L1024.5,540.4L1023.6,536.9L1009.5,541.5Z" fill="#acacac"/>
<path d="M1024.5,540.4L1038.1,534.9L1037.1,531.5L1023.6,536.9Z" fill="#a9a9a9"/>
<path d="M1038.1,534.9L1050.9,528.5L1049.7,525.2L1037.1,531.5Z" fill="#a7a7a7"/>
<path d="M1050.9,528.5L1062.9,521.4L1061.5,518.2L1049.7,525.2Z" fill="#a4a4a4"/>
<path d="M1062.9,521.4L1073.8,513.5L1072.4,510.4L1061.5,518.2Z" fill="#a1a1a1"/>
<path d="M1073.8,513.5L1083.7,505.0L1082.2,502.0L1072.4,510.4Z" fill="#9e9e9e"/>
<path d="M1083.7,505.0L1092.5,496.0L1090.9,493.0L1082.2,502.0Z" fill="#9a9a9a"/>
<path d="M1092.5,496.0L1100.1,486.4L1098.4,483.6L1090.9,493.0Z" fill="#979797"/>
<path d="M1100.1,486.4L1106.5,476.4L1104.7,473.7L1098.4,483.6Z" fill="#949494"/>
<path d="M1106.5,476.4L1111.6,466.1L1109.8,463.6L1104.7,473.7Z" fill="#919191"/>
<path d="M1111.6,466.1L1115.4,455.6L1113.5,453.1L1109.8,463.6Z" fill="#8e8e8e"/>
<path d="M1115.4,455.6L1117.9,444.9L1116.0,442.6L1113.5,453.1Z" fill="#8b8b8b"/>
<path d="M1117.9,444.9L1119.0,434.1L1117.1,431.9L1116.0,442.6Z" fill="#888888"/>
<path d="M1119.0,434.1L1118.8,423.4L1117.0,421.3L1117.1,431.9Z" fill="#858585"/>
<path d="M1118.8,423.4L1117.4,412.7L1115.5,410.8L1117.0,421.3Z" fill="#838383"/>
<path d="M1117.4,412.7L1114.6,402.3L1112.8,400.4L1115.5,410.8Z" fill="#808080"/>
<path d="M1114.6,402.3L1110.6,392.0L1108.9,390.3L1112.8,400.4Z" fill="#7e7e7e"/>
<path d="M1110.6,392.0L1105.5,382.1L1103.8,380.5L1108.9,390.3Z" fill="#7c7c7c"/>
<path d="M1105.5,382.1L1099.2,372.6L1097.5,371.1L1103.8,380.5Z" fill="#7a7a7a"/>
<path d="M1097.5,371.1L1090.2,362.2L1088.6,360.8L1095.8,369.7Z" fill="#7b7b7b"/>
<path d="M1090.2,362.2L1081.9,353.7L1080.3,352.5L1088.6,360.8Z" fill="#7a7a7a"/>
<path d="M1081.9,353.7L1072.6,345.8L1071.1,344.7L1080.3,352.5Z" fill="#797979"/>
<path d="M819.5,348.5L810.4,356.6L811.9,355.3L820.9,347.3Z" fill="#a5a5a5"/>
<path d="M810.4,356.6L802.3,365.2L803.9,363.8L811.9,355.3Z" fill="#a8a8a8"/>
<path d="M802.3,365.2L795.3,374.3L797.0,372.8L803.9,363.8Z" fill="#ababab"/>
<path d="M795.3,374.3L789.3,383.8L791.1,382.2L797.0,372.8Z" fill="#aeaeae"/>
<path d="M789.3,383.8L784.5,393.8L786.3,392.0L791.1,382.2Z" fill="#b1b1b1"/>
<path d="M784.5,393.8L780.8,403.9L782.7,402.1L786.3,392.0Z" fill="#b3b3b3"/>
<path d="M780.8,403.9L778.4,414.4L780.4,412.4L782.7,402.1Z" fill="#b5b5b5"/>
<path d="M778.4,414.4L777.3,424.9L779.2,422.8L780.4,412.4Z" fill="#b7b7b7"/>
<path d="M777.3,424.9L777.5,435.6L779.4,433.3L779.2,422.8Z" fill="#b9b9b9"/>
<path d="M777.5,435.6L778.9,446.2L780.9,443.8L779.4,433.3Z" fill="#bababa"/>
<path d="M778.9,446.2L781.7,456.7L783.6,454.2L780.9,443.8Z" fill="#bababa"/>
<path d="M781.7,456.7L785.7,467.0L787.6,464.4L783.6,454.2Z" fill="#bbbbbb"/>
<path d="M785.7,467.0L791.1,477.1L792.9,474.3L787.6,464.4Z" fill="#bbbbbb"/>
<path d="M791.1,477.1L797.7,486.8L799.5,483.9L792.9,474.3Z" fill="#bababa"/>
<path d="M797.7,486.8L805.5,496.1L807.2,493.1L799.5,483.9Z" fill="#bbbbbb"/>
<path d="M805.5,496.1L814.5,504.9L816.0,501.8L807.2,493.1Z" fill="#bcbcbc"/>
<path d="M814.5,504.9L824.6,513.1L826.0,509.8L816.0,501.8Z" fill="#bdbdbd"/>
<path d="M824.6,513.1L835.7,520.6L837.0,517.3L826.0,509.8Z" fill="#bebebe"/>
<path d="M835.7,520.6L847.7,527.4L848.9,524.0L837.0,517.3Z" fill="#bebebe"/>
<path d="M847.7,527.4L860.5,533.4L861.6,529.9L848.9,524.0Z" fill="#bebebe"/>
<path d="M860.5,533.4L874.2,538.6L875.0,535.0L861.6,529.9Z" fill="#bebebe"/>
<path d="M874.2,538.6L888.4,542.8L889.1,539.2L875.0,535.0Z" fill="#bebebe"/>
<path d="M888.4,542.8L903.1,546.1L903.6,542.4L889.1,539.2Z" fill="#bdbdbd"/>
<path d="M903.1,546.1L918.2,548.5L918.6,544.7L903.6,542.4Z" fill="#bcbcbc"/>
<path d="M918.2,548.5L933.6,549.8L933.7,546.1L918.6,544.7Z" fill="#bbbbbb"/>
<path d="M933.6,549.8L949.1,550.1L949.0,546.4L933.7,546.1Z" fill="#b9b9b9"/>
<path d="M949.1,550.1L964.6,549.5L964.3,545.7L949.0,546.4Z" fill="#b7b7b7"/>
<path d="M964.6,549.5L979.9,547.8L979.5,544.1L964.3,545.7Z" fill="#b6b6b6"/>
<path d="M979.9,547.8L994.9,545.1L994.3,541.4L979.5,544.1Z" fill="#b3b3b3"/>
<path d="M994.9,545.1L1009.5,541.5L1008.8,537.9L994.3,541.4Z" fill="#b1b1b1"/>
<path d="M1009.5,541.5L1023.6,536.9L1022.7,533.4L1008.8,537.9Z" fill="#afafaf"/>
<path d="M1023.6,536.9L1037.1,531.5L1036.0,528.0L1022.7,533.4Z" fill="#acacac"/>
<path d="M1037.1,531.5L1049.7,525.2L1048.5,521.8L1036.0,528.0Z" fill="#a9a9a9"/>
<path d="M1049.7,525.2L1061.5,518.2L1060.2,514.9L1048.5,521.8Z" fill="#a6a6a6"/>
<path d="M1061.5,518.2L1072.4,510.4L1070.9,507.2L1060.2,514.9Z" fill="#a3a3a3"/>
<path d="M1072.4,510.4L1082.2,502.0L1080.6,498.9L1070.9,507.2Z" fill="#a0a0a0"/>
<path d="M1082.2,502.0L1090.9,493.0L1089.2,490.1L1080.6,498.9Z" fill="#9d9d9d"/>
<path d="M1090.9,493.0L1098.4,483.6L1096.6,480.7L1089.2,490.1Z" fill="#9a9a9a"/>
<path d="M1098.4,483.6L1104.7,473.7L1102.9,471.0L1096.6,480.7Z" fill="#979797"/>
<path d="M1104.7,473.7L1109.8,463.6L1107.8,460.9L1102.9,471.0Z" fill="#949494"/>
<path d="M1109.8,463.6L1113.5,453.1L1111.6,450.7L1107.8,460.9Z" fill="#919191"/>
<path d="M1113.5,453.1L1116.0,442.6L1114.0,440.2L1111.6,450.7Z" fill="#8e8e8e"/>
<path d="M1116.0,442.6L1117.1,431.9L1115.1,429.7L1114.0,440.2Z" fill="#8b8b8b"/>
<path d="M1117.1,431.9L1117.0,421.3L1115.0,419.2L1115.1,429.7Z" fill="#888888"/>
<path d="M1117.0,421.3L1115.5,410.8L1113.6,408.8L1115.0,419.2Z" fill="#868686"/>
<path d="M1115.5,410.8L1112.8,400.4L1110.9,398.6L1113.6,408.8Z" fill="#838383"/>
<path d="M1112.8,400.4L1108.9,390.3L1107.0,388.6L1110.9,398.6Z" fill="#818181"/>
<path d="M1108.9,390.3L1103.8,380.5L1102.0,378.9L1107.0,388.6Z" fill="#7f7f7f"/>
<path d="M1103.8,380.5L1097.5,371.1L1095.8,369.7L1102.0,378.9Z" fill="#7d7d7d"/>
<path d="M1095.8,369.7L1088.6,360.8L1086.8,359.5L1094.0,368.2Z" fill="#7f7f7f"/>
<path d="M1088.6,360.8L1080.3,352.5L1078.7,351.2L1086.8,359.5Z" fill="#7d7d7d"/>
<path d="M1080.3,352.5L1071.1,344.7L1069.6,343.5L1078.7,351.2Z" fill="#7c7c7c"/>
<path d="M820.9,347.3L811.9,355.3L813.6,354.0L822.4,346.1Z" fill="#a6a6a6"/>
<path d="M811.9,355.3L803.9,363.8L805.7,362.4L813.6,354.0Z" fill="#aaaaaa"/>
<path d="M803.9,363.8L797.0,372.8L798.8,371.3L805.7,362.4Z" fill="#adadad"/>
<path d="M797.0,372.8L791.1,382.2L793.0,380.6L798.8,371.3Z" fill="#b0b0b0"/>
<path d="M791.1,382.2L786.3,392.0L788.3,390.3L793.0,380.6Z" fill="#b3b3b3"/>
<path d="M786.3,392.0L782.7,402.1L784.7,400.2L788.3,390.3Z" fill="#b5b5b5"/>
<path d="M782.7,402.1L780.4,412.4L782.4,410.4L784.7,400.2Z" fill="#b7b7b7"/>
<path d="M780.4,412.4L779.2,422.8L781.3,420.7L782.4,410.4Z" fill="#b9b9b9"/>
<path d="M779.2,422.8L779.4,433.3L781.5,431.0L781.3,420.7Z" fill="#bababa"/>
<path d="M779.4,433.3L780.9,443.8L782.9,441.4L781.5,431.0Z" fill="#bbbbbb"/>
<path d="M780.9,443.8L783.6,454.2L785.6,451.6L782.9,441.4Z" fill="#bcbcbc"/>
<path d="M783.6,454.2L787.6,464.4L789.6,461.7L785.6,451.6Z" fill="#bcbcbc"/>
<path d="M787.6,464.4L792.9,474.3L794.8,471.5L789.6,461.7Z" fill="#bcbcbc"/>
<path d="M792.9,474.3L799.5,483.9L801.3,481.0L794.8,471.5Z" fill="#bcbcbc"/>
<path d="M799.5,483.9L807.2,493.1L808.9,490.0L801.3,481.0Z" fill="#bdbdbd"/>
<path d="M807.2,493.1L816.0,501.8L817.7,498.6L808.9,490.0Z" fill="#bebebe"/>
<path d="M816.0,501.8L826.0,509.8L827.5,506.5L817.7,498.6Z" fill="#bfbfbf"/>
<path d="M826.0,509.8L837.0,517.3L838.4,513.9L827.5,506.5Z" fill="#c0c0c0"/>
<path d="M837.0,517.3L848.9,524.0L850.1,520.5L838.4,513.9Z" fill="#c0c0c0"/>
<path d="M848.9,524.0L861.6,529.9L862.6,526.3L850.1,520.5Z" fill="#c0c0c0"/>
<path d="M861.6,529.9L875.0,535.0L875.9,531.3L862.6,526.3Z" fill="#c0c0c0"/>
<path d="M875.0,535.0L889.1,539.2L889.8,535.4L875.9,531.3Z" fill="#c0c0c0"/>
<path d="M889.1,539.2L903.6,542.4L904.2,538.7L889.8,535.4Z" fill="#bfbfbf"/>
<path d="M903.6,542.4L918.6,544.7L918.9,540.9L904.2,538.7Z" fill="#bebebe"/>
<path d="M918.6,544.7L933.7,546.1L933.9,542.2L918.9,540.9Z" fill="#bdbdbd"/>
<path d="M933.7,546.1L949.0,546.4L949.0,542.6L933.9,542.2Z" fill="#bbbbbb"/>
<path d="M949.0,546.4L964.3,545.7L964.1,541.9L949.0,542.6Z" fill="#bababa"/>
<path d="M964.3,545.7L979.5,544.1L979.0,540.3L964.1,541.9Z" fill="#b8b8b8"/>
<path d="M979.5,544.1L994.3,541.4L993.7,537.7L979.0,540.3Z" fill="#b6b6b6"/>
<path d="M994.3,541.4L1008.8,537.9L1007.9,534.2L993.7,537.7Z" fill="#b3b3b3"/>
<path d="M1008.8,537.9L1022.7,533.4L1021.7,529.7L1007.9,534.2Z" fill="#b1b1b1"/>
<path d="M1022.7,533.4L1036.0,528.0L1034.8,524.4L1021.7,529.7Z" fill="#aeaeae"/>
<path d="M1036.0,528.0L1048.5,521.8L1047.2,518.3L1034.8,524.4Z" fill="#acacac"/>
<path d="M1048.5,521.8L1060.2,514.9L1058.7,511.5L1047.2,518.3Z" fill="#a9a9a9"/>
<path d="M1060.2,514.9L1070.9,507.2L1069.3,503.9L1058.7,511.5Z" fill="#a6a6a6"/>
<path d="M1070.9,507.2L1080.6,498.9L1078.9,495.7L1069.3,503.9Z" fill="#a3a3a3"/>
<path d="M1080.6,498.9L1089.2,490.1L1087.4,487.0L1078.9,495.7Z" fill="#a0a0a0"/>
<path d="M1089.2,490.1L1096.6,480.7L1094.7,477.8L1087.4,487.0Z" fill="#9d9d9d"/>
<path d="M1096.6,480.7L1102.9,471.0L1100.9,468.2L1094.7,477.8Z" fill="#9a9a9a"/>
<path d="M1102.9,471.0L1107.8,460.9L1105.8,458.3L1100.9,468.2Z" fill="#979797"/>
<path d="M1107.8,460.9L1111.6,450.7L1109.5,448.2L1105.8,458.3Z" fill="#949494"/>
<path d="M1111.6,450.7L1114.0,440.2L1111.9,437.9L1109.5,448.2Z" fill="#919191"/>
<path d="M1114.0,440.2L1115.1,429.7L1113.0,427.5L1111.9,437.9Z" fill="#8e8e8e"/>
<path d="M1115.1,429.7L1115.0,419.2L1112.9,417.1L1113.0,427.5Z" fill="#8b8b8b"/>
<path d="M1115.0,419.2L1113.6,408.8L1111.5,406.9L1112.9,417.1Z" fill="#898989"/>
<path d="M1113.6,408.8L1110.9,398.6L1108.9,396.8L1111.5,406.9Z" fill="#868686"/>
<path d="M1110.9,398.6L1107.0,388.6L1105.0,386.9L1108.9,396.8Z" fill="#848484"/>
<path d="M1107.0,388.6L1102.0,378.9L1100.1,377.4L1105.0,386.9Z" fill="#828282"/>
<path d="M1102.0,378.9L1095.8,369.7L1094.0,368.2L1100.1,377.4Z" fill="#808080"/>
<path d="M1094.0,368.2L1086.8,359.5L1085.0,358.2L1092.0,366.8Z" fill="#828282"/>
<path d="M1086.8,359.5L1078.7,351.2L1077.0,350.1L1085.0,358.2Z" fill="#818181"/>
<path d="M1078.7,351.2L1069.6,343.5L1068.0,342.5L1077.0,350.1Z" fill="#808080"/>
<path d="M1069.6,343.5L1059.7,336.5L1058.2,335.5L1068.0,342.5Z" fill="#7f7f7f"/>
<path d="M832.1,338.8L822.4,346.1L824.0,345.0L833.6,337.8Z" fill="#a5a5a5"/>
<path d="M822.4,346.1L813.6,354.0L815.3,352.8L824.0,345.0Z" fill="#a8a8a8"/>
<path d="M813.6,354.0L805.7,362.4L807.5,361.1L815.3,352.8Z" fill="#ababab"/>
<path d="M805.7,362.4L798.8,371.3L800.7,369.9L807.5,361.1Z" fill="#afafaf"/>
<path d="M798.8,371.3L793.0,380.6L795.0,379.0L800.7,369.9Z" fill="#b1b1b1"/>
<path d="M793.0,380.6L788.3,390.3L790.3,388.6L795.0,379.0Z" fill="#b4b4b4"/>
<path d="M788.3,390.3L784.7,400.2L786.8,398.4L790.3,388.6Z" fill="#b6b6b6"/>
<path d="M784.7,400.2L782.4,410.4L784.6,408.4L786.8,398.4Z" fill="#b8b8b8"/>
<path d="M782.4,410.4L781.3,420.7L783.5,418.5L784.6,408.4Z" fill="#bababa"/>
<path d="M781.3,420.7L781.5,431.0L783.7,428.8L783.5,418.5Z" fill="#bbbbbb"/>
<path d="M781.5,431.0L782.9,441.4L785.1,439.0L783.7,428.8Z" fill="#bcbcbc"/>
<path d="M782.9,441.4L785.6,451.6L787.8,449.1L785.1,439.0Z" fill="#bdbdbd"/>
<path d="M785.6,451.6L789.6,461.7L791.7,459.0L787.8,449.1Z" fill="#bdbdbd"/>
<path d="M789.6,461.7L794.8,471.5L796.9,468.6L791.7,459.0Z" fill="#bdbdbd"/>
<path d="M794.8,471.5L801.3,481.0L803.3,478.0L796.9,468.6Z" fill="#bebebe"/>
<path d="M801.3,481.0L808.9,490.0L810.8,486.9L803.3,478.0Z" fill="#bfbfbf"/>
<path d="M808.9,490.0L817.7,498.6L819.5,495.3L810.8,486.9Z" fill="#c0c0c0"/>
<path d="M817.7,498.6L827.5,506.5L829.2,503.2L819.5,495.3Z" fill="#c1c1c1"/>
<path d="M827.5,506.5L838.4,513.9L839.8,510.4L829.2,503.2Z" fill="#c2c2c2"/>
<path d="M838.4,513.9L850.1,520.5L851.4,516.9L839.8,510.4Z" fill="#c2c2c2"/>
<path d="M850.1,520.5L862.6,526.3L863.8,522.6L851.4,516.9Z" fill="#c2c2c2"/>
<path d="M862.6,526.3L875.9,531.3L876.9,527.6L863.8,522.6Z" fill="#c2c2c2"/>
<path d="M875.9,531.3L889.8,535.4L890.6,531.6L876.9,527.6Z" fill="#c2c2c2"/>
<path d="M889.8,535.4L904.2,538.7L904.7,534.8L890.6,531.6Z" fill="#c1c1c1"/>
<path d="M904.2,538.7L918.9,540.9L919.3,537.0L904.7,534.8Z" fill="#c0c0c0"/>
<path d="M918.9,540.9L933.9,542.2L934.1,538.3L919.3,537.0Z" fill="#bfbfbf"/>
<path d="M933.9,542.2L949.0,542.6L948.9,538.7L934.1,538.3Z" fill="#bebebe"/>
<path d="M949.0,542.6L964.1,541.9L963.8,538.0L948.9,538.7Z" fill="#bcbcbc"/>
<path d="M964.1,541.9L979.0,540.3L978.5,536.4L963.8,538.0Z" fill="#bababa"/>
<path d="M979.0,540.3L993.7,537.7L993.0,533.8L978.5,536.4Z" fill="#b8b8b8"/>
<path d="M993.7,537.7L1007.9,534.2L1007.1,530.4L993.0,533.8Z" fill="#b6b6b6"/>
<path d="M1007.9,534.2L1021.7,529.7L1020.6,526.0L1007.1,530.4Z" fill="#b3b3b3"/>
<path d="M1021.7,529.7L1034.8,524.4L1033.6,520.8L1020.6,526.0Z" fill="#b1b1b1"/>
<path d="M1034.8,524.4L1047.2,518.3L1045.8,514.8L1033.6,520.8Z" fill="#aeaeae"/>
<path d="M1047.2,518.3L1058.7,511.5L1057.1,508.0L1045.8,514.8Z" fill="#ababab"/>
<path d="M1058.7,511.5L1069.3,503.9L1067.6,500.6L1057.1,508.0Z" fill="#a8a8a8"/>
<path d="M1069.3,503.9L1078.9,495.7L1077.0,492.5L1067.6,500.6Z" fill="#a6a6a6"/>
<path d="M1078.9,495.7L1087.4,487.0L1085.4,483.9L1077.0,492.5Z" fill="#a3a3a3"/>
<path d="M1087.4,487.0L1094.7,477.8L1092.7,474.9L1085.4,483.9Z" fill="#a0a0a0"/>
<path d="M1094.7,477.8L1100.9,468.2L1098.8,465.4L1092.7,474.9Z" fill="#9d9d9d"/>
<path d="M1100.9,468.2L1105.8,458.3L1103.6,455.6L1098.8,465.4Z" fill="#9a9a9a"/>
<path d="M1105.8,458.3L1109.5,448.2L1107.3,445.6L1103.6,455.6Z" fill="#979797"/>
<path d="M1109.5,448.2L1111.9,437.9L1109.7,435.5L1107.3,445.6Z" fill="#949494"/>
<path d="M1111.9,437.9L1113.0,427.5L1110.8,425.3L1109.7,435.5Z" fill="#919191"/>
<path d="M1113.0,427.5L1112.9,417.1L1110.6,415.1L1110.8,425.3Z" fill="#8e8e8e"/>
<path d="M1112.9,417.1L1111.5,406.9L1109.3,404.9L1110.6,415.1Z" fill="#8c8c8c"/>
<path d="M1111.5,406.9L1108.9,396.8L1106.7,395.0L1109.3,404.9Z" fill="#8a8a8a"/>
<path d="M1108.9,396.8L1105.0,386.9L1102.9,385.3L1106.7,395.0Z" fill="#878787"/>
<path d="M1105.0,386.9L1100.1,377.4L1098.0,375.8L1102.9,385.3Z" fill="#858585"/>
<path d="M1100.1,377.4L1094.0,368.2L1092.0,366.8L1098.0,375.8Z" fill="#848484"/>
<path d="M1092.0,366.8L1085.0,358.2L1083.0,356.9L1090.0,365.4Z" fill="#858585"/>
<path d="M1085.0,358.2L1077.0,350.1L1075.1,348.9L1083.0,356.9Z" fill="#848484"/>
<path d="M1077.0,350.1L1068.0,342.5L1066.3,341.4L1075.1,348.9Z" fill="#838383"/>
<path d="M1068.0,342.5L1058.2,335.5L1056.7,334.6L1066.3,341.4Z" fill="#828282"/>
<path d="M1058.2,335.5L1047.7,329.1L1046.3,328.3L1056.7,334.6Z" fill="#818181"/>
<path d="M843.9,331.2L833.6,337.8L835.1,336.9L845.4,330.4Z" fill="#a3a3a3"/>
<path d="M833.6,337.8L824.0,345.0L825.7,344.0L835.1,336.9Z" fill="#a6a6a6"/>
<path d="M824.0,345.0L815.3,352.8L817.1,351.6L825.7,344.0Z" fill="#aaaaaa"/>
<path d="M815.3,352.8L807.5,361.1L809.4,359.8L817.1,351.6Z" fill="#adadad"/>
<path d="M807.5,361.1L800.7,369.9L802.7,368.5L809.4,359.8Z" fill="#b0b0b0"/>
<path d="M800.7,369.9L795.0,379.0L797.1,377.5L802.7,368.5Z" fill="#b3b3b3"/>
<path d="M795.0,379.0L790.3,388.6L792.5,386.9L797.1,377.5Z" fill="#b5b5b5"/>
<path d="M790.3,388.6L786.8,398.4L789.1,396.5L792.5,386.9Z" fill="#b8b8b8"/>
<path d="M786.8,398.4L784.6,408.4L786.9,406.4L789.1,396.5Z" fill="#b9b9b9"/>
<path d="M784.6,408.4L783.5,418.5L785.8,416.4L786.9,406.4Z" fill="#bbbbbb"/>
<path d="M783.5,418.5L783.7,428.8L786.0,426.5L785.8,416.4Z" fill="#bcbcbc"/>
<path d="M783.7,428.8L785.1,439.0L787.4,436.5L786.0,426.5Z" fill="#bdbdbd"/>
<path d="M785.1,439.0L787.8,449.1L790.1,446.5L787.4,436.5Z" fill="#bebebe"/>
<path d="M787.8,449.1L791.7,459.0L794.0,456.2L790.1,446.5Z" fill="#bebebe"/>
<path d="M791.7,459.0L796.9,468.6L799.1,465.7L794.0,456.2Z" fill="#bebebe"/>
<path d="M796.9,468.6L803.3,478.0L805.3,474.9L799.1,465.7Z" fill="#c0c0c0"/>
<path d="M803.3,478.0L810.8,486.9L812.8,483.7L805.3,474.9Z" fill="#c1c1c1"/>
<path d="M810.8,486.9L819.5,495.3L821.3,492.0L812.8,483.7Z" fill="#c2c2c2"/>
<path d="M819.5,495.3L829.2,503.2L830.9,499.7L821.3,492.0Z" fill="#c3c3c3"/>
<path d="M829.2,503.2L839.8,510.4L841.4,506.8L830.9,499.7Z" fill="#c4c4c4"/>
<path d="M839.8,510.4L851.4,516.9L852.8,513.2L841.4,506.8Z" fill="#c4c4c4"/>
<path d="M851.4,516.9L863.8,522.6L865.0,518.9L852.8,513.2Z" fill="#c4c4c4"/>
<path d="M863.8,522.6L876.9,527.6L877.9,523.7L865.0,518.9Z" fill="#c4c4c4"/>
<path d="M876.9,527.6L890.6,531.6L891.4,527.7L877.9,523.7Z" fill="#c4c4c4"/>
<path d="M890.6,531.6L904.7,534.8L905.4,530.8L891.4,527.7Z" fill="#c3c3c3"/>
<path d="M904.7,534.8L919.3,537.0L919.7,533.1L905.4,530.8Z" fill="#c2c2c2"/>
<path d="M919.3,537.0L934.1,538.3L934.2,534.3L919.7,533.1Z" fill="#c1c1c1"/>
<path d="M934.1,538.3L948.9,538.7L948.9,534.6L934.2,534.3Z" fill="#c0c0c0"/>
<path d="M948.9,538.7L963.8,538.0L963.5,534.0L948.9,534.6Z" fill="#bebebe"/>
<path d="M963.8,538.0L978.5,536.4L978.1,532.4L963.5,534.0Z" fill="#bcbcbc"/>
<path d="M978.5,536.4L993.0,533.8L992.3,529.9L978.1,532.4Z" fill="#bababa"/>
<path d="M993.0,533.8L1007.1,530.4L1006.2,526.5L992.3,529.9Z" fill="#b8b8b8"/>
<path d="M1007.1,530.4L1020.6,526.0L1019.5,522.2L1006.2,526.5Z" fill="#b6b6b6"/>
<path d="M1020.6,526.0L1033.6,520.8L1032.3,517.1L1019.5,522.2Z" fill="#b3b3b3"/>
<path d="M1033.6,520.8L1045.8,514.8L1044.3,511.1L1032.3,517.1Z" fill="#b0b0b0"/>
<path d="M1045.8,514.8L1057.1,508.0L1055.5,504.5L1044.3,511.1Z" fill="#aeaeae"/>
<path d="M1057.1,508.0L1067.6,500.6L1065.8,497.2L1055.5,504.5Z" fill="#ababab"/>
<path d="M1067.6,500.6L1077.0,492.5L1075.1,489.2L1065.8,497.2Z" fill="#a8a8a8"/>
<path d="M1077.0,492.5L1085.4,483.9L1083.4,480.8L1075.1,489.2Z" fill="#a5a5a5"/>
<path d="M1085.4,483.9L1092.7,474.9L1090.5,471.9L1083.4,480.8Z" fill="#a2a2a2"/>
<path d="M1092.7,474.9L1098.8,465.4L1096.5,462.6L1090.5,471.9Z" fill="#9f9f9f"/>
<path d="M1098.8,465.4L1103.6,455.6L1101.3,452.9L1096.5,462.6Z" fill="#9c9c9c"/>
<path d="M1103.6,455.6L1107.3,445.6L1104.9,443.1L1101.3,452.9Z" fill="#9a9a9a"/>
<path d="M1107.3,445.6L1109.7,435.5L1107.3,433.1L1104.9,443.1Z" fill="#979797"/>
<path d="M1109.7,435.5L1110.8,425.3L1108.4,423.0L1107.3,433.1Z" fill="#949494"/>
<path d="M1110.8,425.3L1110.6,415.1L1108.3,413.0L1108.4,423.0Z" fill="#919191"/>
<path d="M1110.6,415.1L1109.3,404.9L1107.0,403.0L1108.3,413.0Z" fill="#8f8f8f"/>
<path d="M1109.3,404.9L1106.7,395.0L1104.4,393.2L1107.0,403.0Z" fill="#8d8d8d"/>
<path d="M1106.7,395.0L1102.9,385.3L1100.7,383.6L1104.4,393.2Z" fill="#8b8b8b"/>
<path d="M1102.9,385.3L1098.0,375.8L1095.9,374.3L1100.7,383.6Z" fill="#898989"/>
<path d="M1098.0,375.8L1092.0,366.8L1090.0,365.4L1095.9,374.3Z" fill="#878787"/>
<path d="M1090.0,365.4L1083.0,356.9L1081.0,355.7L1087.8,364.1Z" fill="#898989"/>
<path d="M1083.0,356.9L1075.1,348.9L1073.2,347.8L1081.0,355.7Z" fill="#878787"/>
<path d="M1075.1,348.9L1066.3,341.4L1064.5,340.5L1073.2,347.8Z" fill="#868686"/>
<path d="M1066.3,341.4L1056.7,334.6L1055.0,333.7L1064.5,340.5Z" fill="#858585"/>
<path d="M1056.7,334.6L1046.3,328.3L1044.8,327.5L1055.0,333.7Z" fill="#858585"/>
<path d="M856.3,324.5L845.4,330.4L846.8,329.6L857.6,323.8Z" fill="#a1a1a1"/>
<path d="M845.4,330.4L835.1,336.9L836.8,336.0L846.8,329.6Z" fill="#a4a4a4"/>
<path d="M835.1,336.9L825.7,344.0L827.5,343.0L836.8,336.0Z" fill="#a8a8a8"/>
<path d="M825.7,344.0L817.1,351.6L819.0,350.5L827.5,343.0Z" fill="#ababab"/>
<path d="M817.1,351.6L809.4,359.8L811.5,358.6L819.0,350.5Z" fill="#aeaeae"/>
<path d="M809.4,359.8L802.7,368.5L804.9,367.1L811.5,358.6Z" fill="#b1b1b1"/>
<path d="M802.7,368.5L797.1,377.5L799.3,376.0L804.9,367.1Z" fill="#b4b4b4"/>
<path d="M797.1,377.5L792.5,386.9L794.8,385.2L799.3,376.0Z" fill="#b7b7b7"/>
<path d="M792.5,386.9L789.1,396.5L791.5,394.7L794.8,385.2Z" fill="#b9b9b9"/>
<path d="M789.1,396.5L786.9,406.4L789.3,404.4L791.5,394.7Z" fill="#bbbbbb"/>
<path d="M786.9,406.4L785.8,416.4L788.3,414.3L789.3,404.4Z" fill="#bcbcbc"/>
<path d="M785.8,416.4L786.0,426.5L788.5,424.2L788.3,414.3Z" fill="#bebebe"/>
<path d="M786.0,426.5L787.4,436.5L789.9,434.0L788.5,424.2Z" fill="#bfbfbf"/>
<path d="M787.4,436.5L790.1,446.5L792.5,443.8L789.9,434.0Z" fill="#bfbfbf"/>
<path d="M790.1,446.5L794.0,456.2L796.3,453.4L792.5,443.8Z" fill="#bfbfbf"/>
<path d="M794.0,456.2L799.1,465.7L801.3,462.8L796.3,453.4Z" fill="#c0c0c0"/>
<path d="M799.1,465.7L805.3,474.9L807.5,471.8L801.3,462.8Z" fill="#c2c2c2"/>
<path d="M805.3,474.9L812.8,483.7L814.9,480.4L807.5,471.8Z" fill="#c3c3c3"/>
<path d="M812.8,483.7L821.3,492.0L823.3,488.6L814.9,480.4Z" fill="#c4c4c4"/>
<path d="M821.3,492.0L830.9,499.7L832.7,496.2L823.3,488.6Z" fill="#c5c5c5"/>
<path d="M830.9,499.7L841.4,506.8L843.0,503.2L832.7,496.2Z" fill="#c6c6c6"/>
<path d="M841.4,506.8L852.8,513.2L854.3,509.5L843.0,503.2Z" fill="#c6c6c6"/>
<path d="M852.8,513.2L865.0,518.9L866.3,515.0L854.3,509.5Z" fill="#c7c7c7"/>
<path d="M865.0,518.9L877.9,523.7L879.0,519.8L866.3,515.0Z" fill="#c6c6c6"/>
<path d="M877.9,523.7L891.4,527.7L892.3,523.7L879.0,519.8Z" fill="#c6c6c6"/>
<path d="M891.4,527.7L905.4,530.8L906.0,526.8L892.3,523.7Z" fill="#c5c5c5"/>
<path d="M905.4,530.8L919.7,533.1L920.1,529.0L906.0,526.8Z" fill="#c4c4c4"/>
<path d="M919.7,533.1L934.2,534.3L934.4,530.2L920.1,529.0Z" fill="#c3c3c3"/>
<path d="M934.2,534.3L948.9,534.6L948.8,530.5L934.4,530.2Z" fill="#c2c2c2"/>
<path d="M948.9,534.6L963.5,534.0L963.3,529.9L948.8,530.5Z" fill="#c0c0c0"/>
<path d="M963.5,534.0L978.1,532.4L977.5,528.3L963.3,529.9Z" fill="#bebebe"/>
<path d="M978.1,532.4L992.3,529.9L991.6,525.9L977.5,528.3Z" fill="#bcbcbc"/>
<path d="M992.3,529.9L1006.2,526.5L1005.2,522.5L991.6,525.9Z" fill="#bababa"/>
<path d="M1006.2,526.5L1019.5,522.2L1018.3,518.3L1005.2,522.5Z" fill="#b8b8b8"/>
<path d="M1019.5,522.2L1032.3,517.1L1030.9,513.2L1018.3,518.3Z" fill="#b5b5b5"/>
<path d="M1032.3,517.1L1044.3,511.1L1042.7,507.4L1030.9,513.2Z" fill="#b3b3b3"/>
<path d="M1044.3,511.1L1055.5,504.5L1053.7,500.9L1042.7,507.4Z" fill="#b0b0b0"/>
<path d="M1055.5,504.5L1065.8,497.2L1063.9,493.7L1053.7,500.9Z" fill="#adadad"/>
<path d="M1065.8,497.2L1075.1,489.2L1073.1,485.9L1063.9,493.7Z" fill="#ababab"/>
<path d="M1075.1,489.2L1083.4,480.8L1081.2,477.6L1073.1,485.9Z" fill="#a8a8a8"/>
<path d="M1083.4,480.8L1090.5,471.9L1088.3,468.8L1081.2,477.6Z" fill="#a5a5a5"/>
<path d="M1090.5,471.9L1096.5,462.6L1094.2,459.7L1088.3,468.8Z" fill="#a2a2a2"/>
<path d="M1096.5,462.6L1101.3,452.9L1098.9,450.2L1094.2,459.7Z" fill="#9f9f9f"/>
<path d="M1101.3,452.9L1104.9,443.1L1102.5,440.5L1098.9,450.2Z" fill="#9c9c9c"/>
<path d="M1104.9,443.1L1107.3,433.1L1104.8,430.7L1102.5,440.5Z" fill="#9a9a9a"/>
<path d="M1107.3,433.1L1108.4,423.0L1105.9,420.8L1104.8,430.7Z" fill="#979797"/>
<path d="M1108.4,423.0L1108.3,413.0L1105.8,410.9L1105.9,420.8Z" fill="#949494"/>
<path d="M1108.3,413.0L1107.0,403.0L1104.5,401.1L1105.8,410.9Z" fill="#929292"/>
<path d="M1107.0,403.0L1104.4,393.2L1102.0,391.4L1104.5,401.1Z" fill="#909090"/>
<path d="M1104.4,393.2L1100.7,383.6L1098.4,382.0L1102.0,391.4Z" fill="#8e8e8e"/>
<path d="M1100.7,383.6L1095.9,374.3L1093.6,372.9L1098.4,382.0Z" fill="#8c8c8c"/>
<path d="M1095.9,374.3L1090.0,365.4L1087.8,364.1L1093.6,372.9Z" fill="#8a8a8a"/>
<path d="M1087.8,364.1L1081.0,355.7L1078.8,354.6L1085.5,362.8Z" fill="#8c8c8c"/>
<path d="M1081.0,355.7L1073.2,347.8L1071.1,346.8L1078.8,354.6Z" fill="#8b8b8b"/>
<path d="M1073.2,347.8L1064.5,340.5L1062.6,339.6L1071.1,346.8Z" fill="#898989"/>
<path d="M1064.5,340.5L1055.0,333.7L1053.3,332.9L1062.6,339.6Z" fill="#898989"/>
<path d="M1055.0,333.7L1044.8,327.5L1043.2,326.8L1053.3,332.9Z" fill="#888888"/>
<path d="M1044.8,327.5L1033.8,322.0L1032.4,321.4L1043.2,326.8Z" fill="#888888"/>
<path d="M857.6,323.8L846.8,329.6L848.4,328.9L859.0,323.2Z" fill="#a2a2a2"/>
<path d="M846.8,329.6L836.8,336.0L838.5,335.1L848.4,328.9Z" fill="#a6a6a6"/>
<path d="M836.8,336.0L827.5,343.0L829.4,342.0L838.5,335.1Z" fill="#a9a9a9"/>
<path d="M827.5,343.0L819.0,350.5L821.1,349.4L829.4,342.0Z" fill="#adadad"/>
<path d="M819.0,350.5L811.5,358.6L813.6,357.4L821.1,349.4Z" fill="#b0b0b0"/>
<path d="M811.5,358.6L804.9,367.1L807.2,365.7L813.6,357.4Z" fill="#b3b3b3"/>
<path d="M804.9,367.1L799.3,376.0L801.7,374.5L807.2,365.7Z" fill="#b5b5b5"/>
<path d="M799.3,376.0L794.8,385.2L797.3,383.6L801.7,374.5Z" fill="#b8b8b8"/>
<path d="M794.8,385.2L791.5,394.7L794.0,392.9L797.3,383.6Z" fill="#bababa"/>
<path d="M791.5,394.7L789.3,404.4L791.9,402.4L794.0,392.9Z" fill="#bcbcbc"/>
<path d="M789.3,404.4L788.3,414.3L790.9,412.1L791.9,402.4Z" fill="#bdbdbd"/>
<path d="M788.3,414.3L788.5,424.2L791.1,421.8L790.9,412.1Z" fill="#bfbfbf"/>
<path d="M788.5,424.2L789.9,434.0L792.4,431.5L791.1,421.8Z" fill="#c0c0c0"/>
<path d="M789.9,434.0L792.5,443.8L795.0,441.2L792.4,431.5Z" fill="#c0c0c0"/>
<path d="M792.5,443.8L796.3,453.4L798.8,450.6L795.0,441.2Z" fill="#c1c1c1"/>
<path d="M796.3,453.4L801.3,462.8L803.8,459.8L798.8,450.6Z" fill="#c2c2c2"/>
<path d="M801.3,462.8L807.5,471.8L809.9,468.7L803.8,459.8Z" fill="#c4c4c4"/>
<path d="M807.5,471.8L814.9,480.4L817.1,477.1L809.9,468.7Z" fill="#c5c5c5"/>
<path d="M814.9,480.4L823.3,488.6L825.3,485.1L817.1,477.1Z" fill="#c6c6c6"/>
<path d="M823.3,488.6L832.7,496.2L834.6,492.6L825.3,485.1Z" fill="#c7c7c7"/>
<path d="M832.7,496.2L843.0,503.2L844.8,499.4L834.6,492.6Z" fill="#c8c8c8"/>
<path d="M843.0,503.2L854.3,509.5L855.8,505.6L844.8,499.4Z" fill="#c8c8c8"/>
<path d="M854.3,509.5L866.3,515.0L867.6,511.1L855.8,505.6Z" fill="#c9c9c9"/>
<path d="M866.3,515.0L879.0,519.8L880.1,515.8L867.6,511.1Z" fill="#c9c9c9"/>
<path d="M879.0,519.8L892.3,523.7L893.2,519.6L880.1,515.8Z" fill="#c8c8c8"/>
<path d="M892.3,523.7L906.0,526.8L906.7,522.6L893.2,519.6Z" fill="#c7c7c7"/>
<path d="M906.0,526.8L920.1,529.0L920.5,524.8L906.7,522.6Z" fill="#c6c6c6"/>
<path d="M920.1,529.0L934.4,530.2L934.6,526.0L920.5,524.8Z" fill="#c5c5c5"/>
<path d="M934.4,530.2L948.8,530.5L948.8,526.3L934.6,526.0Z" fill="#c4c4c4"/>
<path d="M948.8,530.5L963.3,529.9L963.0,525.7L948.8,526.3Z" fill="#c2c2c2"/>
<path d="M963.3,529.9L977.5,528.3L977.0,524.1L963.0,525.7Z" fill="#c0c0c0"/>
<path d="M977.5,528.3L991.6,525.9L990.8,521.7L977.0,524.1Z" fill="#bebebe"/>
<path d="M991.6,525.9L1005.2,522.5L1004.2,518.4L990.8,521.7Z" fill="#bcbcbc"/>
<path d="M1005.2,522.5L1018.3,518.3L1017.1,514.3L1004.2,518.4Z" fill="#bababa"/>
<path d="M1018.3,518.3L1030.9,513.2L1029.4,509.3L1017.1,514.3Z" fill="#b8b8b8"/>
<path d="M1030.9,513.2L1042.7,507.4L1041.1,503.6L1029.4,509.3Z" fill="#b5b5b5"/>
<path d="M1042.7,507.4L1053.7,500.9L1051.9,497.2L1041.1,503.6Z" fill="#b2b2b2"/>
<path d="M1053.7,500.9L1063.9,493.7L1061.9,490.1L1051.9,497.2Z" fill="#b0b0b0"/>
<path d="M1063.9,493.7L1073.1,485.9L1070.9,482.5L1061.9,490.1Z" fill="#adadad"/>
<path d="M1073.1,485.9L1081.2,477.6L1078.9,474.3L1070.9,482.5Z" fill="#aaaaaa"/>
<path d="M1081.2,477.6L1088.3,468.8L1085.9,465.7L1078.9,474.3Z" fill="#a7a7a7"/>
<path d="M1088.3,468.8L1094.2,459.7L1091.7,456.7L1085.9,465.7Z" fill="#a5a5a5"/>
<path d="M1094.2,459.7L1098.9,450.2L1096.4,447.4L1091.7,456.7Z" fill="#a2a2a2"/>
<path d="M1098.9,450.2L1102.5,440.5L1099.9,437.9L1096.4,447.4Z" fill="#9f9f9f"/>
<path d="M1102.5,440.5L1104.8,430.7L1102.2,428.2L1099.9,437.9Z" fill="#9c9c9c"/>
<path d="M1104.8,430.7L1105.9,420.8L1103.3,418.5L1102.2,428.2Z" fill="#9a9a9a"/>
<path d="M1105.9,420.8L1105.8,410.9L1103.2,408.8L1103.3,418.5Z" fill="#979797"/>
<path d="M1105.8,410.9L1104.5,401.1L1101.9,399.2L1103.2,408.8Z" fill="#959595"/>
<path d="M1104.5,401.1L1102.0,391.4L1099.4,389.7L1101.9,399.2Z" fill="#939393"/>
<path d="M1102.0,391.4L1098.4,382.0L1095.9,380.4L1099.4,389.7Z" fill="#919191"/>
<path d="M1098.4,382.0L1093.6,372.9L1091.2,371.4L1095.9,380.4Z" fill="#8f8f8f"/>
<path d="M1093.6,372.9L1087.8,364.1L1085.5,362.8L1091.2,371.4Z" fill="#8d8d8d"/>
<path d="M1085.5,362.8L1078.8,354.6L1076.5,353.5L1083.1,361.5Z" fill="#8f8f8f"/>
<path d="M1078.8,354.6L1071.1,346.8L1069.0,345.8L1076.5,353.5Z" fill="#8e8e8e"/>
<path d="M1071.1,346.8L1062.6,339.6L1060.6,338.7L1069.0,345.8Z" fill="#8d8d8d"/>
<path d="M1062.6,339.6L1053.3,332.9L1051.4,332.2L1060.6,338.7Z" fill="#8c8c8c"/>
<path d="M1053.3,332.9L1043.2,326.8L1041.5,326.2L1051.4,332.2Z" fill="#8b8b8b"/>
<path d="M1043.2,326.8L1032.4,321.4L1031.0,320.9L1041.5,326.2Z" fill="#8b8b8b"/>
<path d="M1032.4,321.4L1021.1,316.6L1019.8,316.2L1031.0,320.9Z" fill="#8b8b8b"/>
<path d="M881.9,313.9L870.2,318.2L871.5,317.7L883.0,313.5Z" fill="#9d9d9d"/>
<path d="M870.2,318.2L859.0,323.2L860.5,322.6L871.5,317.7Z" fill="#a1a1a1"/>
<path d="M859.0,323.2L848.4,328.9L850.1,328.2L860.5,322.6Z" fill="#a4a4a4"/>
<path d="M848.4,328.9L838.5,335.1L840.4,334.4L850.1,328.2Z" fill="#a8a8a8"/>
<path d="M838.5,335.1L829.4,342.0L831.4,341.1L840.4,334.4Z" fill="#ababab"/>
<path d="M829.4,342.0L821.1,349.4L823.2,348.4L831.4,341.1Z" fill="#aeaeae"/>
<path d="M821.1,349.4L813.6,357.4L815.9,356.2L823.2,348.4Z" fill="#b1b1b1"/>
<path d="M813.6,357.4L807.2,365.7L809.6,364.4L815.9,356.2Z" fill="#b4b4b4"/>
<path d="M807.2,365.7L801.7,374.5L804.2,373.0L809.6,364.4Z" fill="#b7b7b7"/>
<path d="M801.7,374.5L797.3,383.6L799.9,381.9L804.2,373.0Z" fill="#b9b9b9"/>
<path d="M797.3,383.6L794.0,392.9L796.7,391.1L799.9,381.9Z" fill="#bbbbbb"/>
<path d="M794.0,392.9L791.9,402.4L794.6,400.5L796.7,391.1Z" fill="#bdbdbd"/>
<path d="M791.9,402.4L790.9,412.1L793.6,410.0L794.6,400.5Z" fill="#bebebe"/>
<path d="M790.9,412.1L791.1,421.8L793.8,419.5L793.6,410.0Z" fill="#c0c0c0"/>
<path d="M791.1,421.8L792.4,431.5L795.2,429.0L793.8,419.5Z" fill="#c1c1c1"/>
<path d="M792.4,431.5L795.0,441.2L797.7,438.5L795.2,429.0Z" fill="#c1c1c1"/>
<path d="M795.0,441.2L798.8,450.6L801.5,447.7L797.7,438.5Z" fill="#c3c3c3"/>
<path d="M798.8,450.6L803.8,459.8L806.3,456.7L801.5,447.7Z" fill="#c4c4c4"/>
<path d="M803.8,459.8L809.9,468.7L812.3,465.4L806.3,456.7Z" fill="#c6c6c6"/>
<path d="M809.9,468.7L817.1,477.1L819.4,473.8L812.3,465.4Z" fill="#c7c7c7"/>
<path d="M817.1,477.1L825.3,485.1L827.5,481.6L819.4,473.8Z" fill="#c8c8c8"/>
<path d="M825.3,485.1L834.6,492.6L836.6,488.9L827.5,481.6Z" fill="#c9c9c9"/>
<path d="M834.6,492.6L844.8,499.4L846.6,495.6L836.6,488.9Z" fill="#cacaca"/>
<path d="M844.8,499.4L855.8,505.6L857.5,501.7L846.6,495.6Z" fill="#cacaca"/>
<path d="M855.8,505.6L867.6,511.1L869.1,507.0L857.5,501.7Z" fill="#cbcbcb"/>
<path d="M867.6,511.1L880.1,515.8L881.3,511.6L869.1,507.0Z" fill="#cbcbcb"/>
<path d="M880.1,515.8L893.2,519.6L894.1,515.4L881.3,511.6Z" fill="#cacaca"/>
<path d="M893.2,519.6L906.7,522.6L907.4,518.4L894.1,515.4Z" fill="#c9c9c9"/>
<path d="M906.7,522.6L920.5,524.8L921.0,520.4L907.4,518.4Z" fill="#c8c8c8"/>
<path d="M920.5,524.8L934.6,526.0L934.8,521.6L921.0,520.4Z" fill="#c7c7c7"/>
<path d="M934.6,526.0L948.8,526.3L948.7,521.9L934.8,521.6Z" fill="#c5c5c5"/>
<path d="M948.8,526.3L963.0,525.7L962.6,521.3L948.7,521.9Z" fill="#c4c4c4"/>
<path d="M963.0,525.7L977.0,524.1L976.4,519.8L962.6,521.3Z" fill="#c2c2c2"/>
<path d="M977.0,524.1L990.8,521.7L989.9,517.5L976.4,519.8Z" fill="#c0c0c0"/>
<path d="M990.8,521.7L1004.2,518.4L1003.1,514.2L989.9,517.5Z" fill="#bebebe"/>
<path d="M1004.2,518.4L1017.1,514.3L1015.8,510.2L1003.1,514.2Z" fill="#bcbcbc"/>
<path d="M1017.1,514.3L1029.4,509.3L1027.9,505.3L1015.8,510.2Z" fill="#bababa"/>
<path d="M1029.4,509.3L1041.1,503.6L1039.3,499.7L1027.9,505.3Z" fill="#b7b7b7"/>
<path d="M1041.1,503.6L1051.9,497.2L1050.0,493.4L1039.3,499.7Z" fill="#b5b5b5"/>
<path d="M1051.9,497.2L1061.9,490.1L1059.8,486.5L1050.0,493.4Z" fill="#b2b2b2"/>
<path d="M1061.9,490.1L1070.9,482.5L1068.6,479.0L1059.8,486.5Z" fill="#afafaf"/>
<path d="M1070.9,482.5L1078.9,474.3L1076.5,471.0L1068.6,479.0Z" fill="#adadad"/>
<path d="M1078.9,474.3L1085.9,465.7L1083.3,462.5L1076.5,471.0Z" fill="#aaaaaa"/>
<path d="M1085.9,465.7L1091.7,456.7L1089.1,453.7L1083.3,462.5Z" fill="#a7a7a7"/>
<path d="M1091.7,456.7L1096.4,447.4L1093.7,444.6L1089.1,453.7Z" fill="#a5a5a5"/>
<path d="M1096.4,447.4L1099.9,437.9L1097.1,435.3L1093.7,444.6Z" fill="#a2a2a2"/>
<path d="M1099.9,437.9L1102.2,428.2L1099.4,425.8L1097.1,435.3Z" fill="#9f9f9f"/>
<path d="M1102.2,428.2L1103.3,418.5L1100.5,416.2L1099.4,425.8Z" fill="#9d9d9d"/>
<path d="M1103.3,418.5L1103.2,408.8L1100.4,406.7L1100.5,416.2Z" fill="#9a9a9a"/>
<path d="M1103.2,408.8L1101.9,399.2L1099.1,397.2L1100.4,406.7Z" fill="#989898"/>
<path d="M1101.9,399.2L1099.4,389.7L1096.7,387.9L1099.1,397.2Z" fill="#969696"/>
<path d="M1099.4,389.7L1095.9,380.4L1093.2,378.8L1096.7,387.9Z" fill="#949494"/>
<path d="M1095.9,380.4L1091.2,371.4L1088.7,370.0L1093.2,378.8Z" fill="#929292"/>
<path d="M1091.2,371.4L1085.5,362.8L1083.1,361.5L1088.7,370.0Z" fill="#909090"/>
<path d="M1083.1,361.5L1076.5,353.5L1074.0,352.4L1080.5,360.3Z" fill="#929292"/>
<path d="M1076.5,353.5L1069.0,345.8L1066.7,344.9L1074.0,352.4Z" fill="#919191"/>
<path d="M1069.0,345.8L1060.6,338.7L1058.5,337.9L1066.7,344.9Z" fill="#909090"/>
<path d="M1060.6,338.7L1051.4,332.2L1049.5,331.5L1058.5,337.9Z" fill="#8f8f8f"/>
<path d="M1051.4,332.2L1041.5,326.2L1039.7,325.6L1049.5,331.5Z" fill="#8f8f8f"/>
<path d="M1041.5,326.2L1031.0,320.9L1029.4,320.4L1039.7,325.6Z" fill="#8e8e8e"/>
<path d="M1031.0,320.9L1019.8,316.2L1018.5,315.8L1029.4,320.4Z" fill="#8e8e8e"/>
<path d="M1019.8,316.2L1008.2,312.2L1007.0,311.9L1018.5,315.8Z" fill="#8e8e8e"/>
<path d="M1008.2,312.2L996.1,308.9L995.2,308.7L1007.0,311.9Z" fill="#8f8f8f"/>
<path d="M895.0,310.0L883.0,313.5L884.2,313.2L895.9,309.7Z" fill="#9c9c9c"/>
<path d="M883.0,313.5L871.5,317.7L872.9,317.3L884.2,313.2Z" fill="#9f9f9f"/>
<path d="M871.5,317.7L860.5,322.6L862.1,322.2L872.9,317.3Z" fill="#a2a2a2"/>
<path d="M860.5,322.6L850.1,328.2L851.9,327.6L862.1,322.2Z" fill="#a6a6a6"/>
<path d="M850.1,328.2L840.4,334.4L842.3,333.7L851.9,327.6Z" fill="#a9a9a9"/>
<path d="M840.4,334.4L831.4,341.1L833.5,340.3L842.3,333.7Z" fill="#acacac"/>
<path d="M831.4,341.1L823.2,348.4L825.5,347.5L833.5,340.3Z" fill="#b0b0b0"/>
<path d="M823.2,348.4L815.9,356.2L818.4,355.1L825.5,347.5Z" fill="#b3b3b3"/>
<path d="M815.9,356.2L809.6,364.4L812.1,363.1L818.4,355.1Z" fill="#b5b5b5"/>
<path d="M809.6,364.4L804.2,373.0L806.9,371.6L812.1,363.1Z" fill="#b8b8b8"/>
<path d="M804.2,373.0L799.9,381.9L802.7,380.3L806.9,371.6Z" fill="#bababa"/>
<path d="M799.9,381.9L796.7,391.1L799.5,389.3L802.7,380.3Z" fill="#bcbcbc"/>
<path d="M796.7,391.1L794.6,400.5L797.4,398.5L799.5,389.3Z" fill="#bebebe"/>
<path d="M794.6,400.5L793.6,410.0L796.5,407.8L797.4,398.5Z" fill="#bfbfbf"/>
<path d="M793.6,410.0L793.8,419.5L796.7,417.2L796.5,407.8Z" fill="#c1c1c1"/>
<path d="M793.8,419.5L795.2,429.0L798.1,426.5L796.7,417.2Z" fill="#c1c1c1"/>
<path d="M795.2,429.0L797.7,438.5L800.6,435.7L798.1,426.5Z" fill="#c3c3c3"/>
<path d="M797.7,438.5L801.5,447.7L804.2,444.8L800.6,435.7Z" fill="#c5c5c5"/>
<path d="M801.5,447.7L806.3,456.7L809.0,453.6L804.2,444.8Z" fill="#c6c6c6"/>
<path d="M806.3,456.7L812.3,465.4L814.9,462.2L809.0,453.6Z" fill="#c8c8c8"/>
<path d="M812.3,465.4L819.4,473.8L821.9,470.3L814.9,462.2Z" fill="#c9c9c9"/>
<path d="M819.4,473.8L827.5,481.6L829.8,478.0L821.9,470.3Z" fill="#cacaca"/>
<path d="M827.5,481.6L836.6,488.9L838.8,485.1L829.8,478.0Z" fill="#cbcbcb"/>
<path d="M836.6,488.9L846.6,495.6L848.6,491.7L838.8,485.1Z" fill="#cccccc"/>
<path d="M846.6,495.6L857.5,501.7L859.2,497.7L848.6,491.7Z" fill="#cdcdcd"/>
<path d="M857.5,501.7L869.1,507.0L870.6,502.9L859.2,497.7Z" fill="#cdcdcd"/>
<path d="M869.1,507.0L881.3,511.6L882.6,507.4L870.6,502.9Z" fill="#cdcdcd"/>
<path d="M881.3,511.6L894.1,515.4L895.2,511.1L882.6,507.4Z" fill="#cdcdcd"/>
<path d="M894.1,515.4L907.4,518.4L908.2,514.0L895.2,511.1Z" fill="#cbcbcb"/>
<path d="M907.4,518.4L921.0,520.4L921.5,516.0L908.2,514.0Z" fill="#cacaca"/>
<path d="M921.0,520.4L934.8,521.6L935.0,517.2L921.5,516.0Z" fill="#c9c9c9"/>
<path d="M934.8,521.6L948.7,521.9L948.7,517.5L935.0,517.2Z" fill="#c7c7c7"/>
<path d="M948.7,521.9L962.6,521.3L962.3,516.9L948.7,517.5Z" fill="#c6c6c6"/>
<path d="M962.6,521.3L976.4,519.8L975.8,515.4L962.3,516.9Z" fill="#c4c4c4"/>
<path d="M976.4,519.8L989.9,517.5L989.1,513.1L975.8,515.4Z" fill="#c2c2c2"/>
<path d="M989.9,517.5L1003.1,514.2L1002.0,509.9L989.1,513.1Z" fill="#c0c0c0"/>
<path d="M1003.1,514.2L1015.8,510.2L1014.4,506.0L1002.0,509.9Z" fill="#bebebe"/>
<path d="M1015.8,510.2L1027.9,505.3L1026.3,501.2L1014.4,506.0Z" fill="#bcbcbc"/>
<path d="M1027.9,505.3L1039.3,499.7L1037.5,495.7L1026.3,501.2Z" fill="#b9b9b9"/>
<path d="M1039.3,499.7L1050.0,493.4L1047.9,489.6L1037.5,495.7Z" fill="#b7b7b7"/>
<path d="M1050.0,493.4L1059.8,486.5L1057.5,482.8L1047.9,489.6Z" fill="#b4b4b4"/>
<path d="M1059.8,486.5L1068.6,479.0L1066.2,475.4L1057.5,482.8Z" fill="#b2b2b2"/>
<path d="M1068.6,479.0L1076.5,471.0L1074.0,467.6L1066.2,475.4Z" fill="#afafaf"/>
<path d="M1076.5,471.0L1083.3,462.5L1080.7,459.3L1074.0,467.6Z" fill="#acacac"/>
<path d="M1083.3,462.5L1089.1,453.7L1086.3,450.7L1080.7,459.3Z" fill="#aaaaaa"/>
<path d="M1089.1,453.7L1093.7,444.6L1090.8,441.7L1086.3,450.7Z" fill="#a7a7a7"/>
<path d="M1093.7,444.6L1097.1,435.3L1094.2,432.6L1090.8,441.7Z" fill="#a5a5a5"/>
<path d="M1097.1,435.3L1099.4,425.8L1096.4,423.3L1094.2,432.6Z" fill="#a2a2a2"/>
<path d="M1099.4,425.8L1100.5,416.2L1097.5,414.0L1096.4,423.3Z" fill="#a0a0a0"/>
<path d="M1100.5,416.2L1100.4,406.7L1097.4,404.6L1097.5,414.0Z" fill="#9d9d9d"/>
<path d="M1100.4,406.7L1099.1,397.2L1096.2,395.3L1097.4,404.6Z" fill="#9b9b9b"/>
<path d="M1099.1,397.2L1096.7,387.9L1093.9,386.2L1096.2,395.3Z" fill="#999999"/>
<path d="M1096.7,387.9L1093.2,378.8L1090.5,377.3L1093.9,386.2Z" fill="#979797"/>
<path d="M1093.2,378.8L1088.7,370.0L1086.0,368.6L1090.5,377.3Z" fill="#959595"/>
<path d="M1088.7,370.0L1083.1,361.5L1080.5,360.3L1086.0,368.6Z" fill="#949494"/>
<path d="M1080.5,360.3L1074.0,352.4L1071.5,351.4L1077.8,359.2Z" fill="#959595"/>
<path d="M1074.0,352.4L1066.7,344.9L1064.2,344.1L1071.5,351.4Z" fill="#949494"/>
<path d="M1066.7,344.9L1058.5,337.9L1056.2,337.2L1064.2,344.1Z" fill="#939393"/>
<path d="M1058.5,337.9L1049.5,331.5L1047.4,330.9L1056.2,337.2Z" fill="#929292"/>
<path d="M1049.5,331.5L1039.7,325.6L1037.9,325.2L1047.4,330.9Z" fill="#929292"/>
<path d="M1039.7,325.6L1029.4,320.4L1027.7,320.1L1037.9,325.2Z" fill="#929292"/>
<path d="M1029.4,320.4L1018.5,315.8L1017.0,315.6L1027.7,320.1Z" fill="#919191"/>
<path d="M1018.5,315.8L1007.0,311.9L1005.8,311.7L1017.0,315.6Z" fill="#929292"/>
<path d="M1007.0,311.9L995.2,308.7L994.2,308.6L1005.8,311.7Z" fill="#929292"/>
<path d="M995.2,308.7L983.1,306.2L982.3,306.2L994.2,308.6Z" fill="#939393"/>
<path d="M983.1,306.2L970.7,304.5L970.2,304.4L982.3,306.2Z" fill="#939393"/>
<path d="M970.7,304.5L958.1,303.5L957.9,303.5L970.2,304.4Z" fill="#949494"/>
<path d="M932.9,303.7L920.3,305.0L920.8,305.0L933.1,303.7Z" fill="#999999"/>
<path d="M920.3,305.0L908.0,307.0L908.7,306.9L920.8,305.0Z" fill="#9a9a9a"/>
<path d="M908.0,307.0L895.9,309.7L896.9,309.6L908.7,306.9Z" fill="#9c9c9c"/>
<path d="M895.9,309.7L884.2,313.2L885.4,313.0L896.9,309.6Z" fill="#9f9f9f"/>
<path d="M884.2,313.2L872.9,317.3L874.3,317.0L885.4,313.0Z" fill="#a1a1a1"/>
<path d="M872.9,317.3L862.1,322.2L863.8,321.8L874.3,317.0Z" fill="#a4a4a4"/>
<path d="M862.1,322.2L851.9,327.6L853.8,327.1L863.8,321.8Z" fill="#a7a7a7"/>
<path d="M851.9,327.6L842.3,333.7L844.4,333.1L853.8,327.1Z" fill="#ababab"/>
<path d="M842.3,333.7L833.5,340.3L835.8,339.5L844.4,333.1Z" fill="#aeaeae"/>
<path d="M833.5,340.3L825.5,347.5L827.9,346.6L835.8,339.5Z" fill="#b1b1b1"/>
<path d="M825.5,347.5L818.4,355.1L820.9,354.0L827.9,346.6Z" fill="#b4b4b4"/>
<path d="M818.4,355.1L812.1,363.1L814.8,361.9L820.9,354.0Z" fill="#b6b6b6"/>
<path d="M812.1,363.1L806.9,371.6L809.7,370.2L814.8,361.9Z" fill="#b9b9b9"/>
<path d="M806.9,371.6L802.7,380.3L805.6,378.7L809.7,370.2Z" fill="#bbbbbb"/>
<path d="M802.7,380.3L799.5,389.3L802.5,387.5L805.6,378.7Z" fill="#bdbdbd"/>
<path d="M799.5,389.3L797.4,398.5L800.5,396.5L802.5,387.5Z" fill="#bfbfbf"/>
<path d="M797.4,398.5L796.5,407.8L799.6,405.6L800.5,396.5Z" fill="#c0c0c0"/>
<path d="M796.5,407.8L796.7,417.2L799.8,414.8L799.6,405.6Z" fill="#c1c1c1"/>
<path d="M796.7,417.2L798.1,426.5L801.1,423.9L799.8,414.8Z" fill="#c3c3c3"/>
<path d="M798.1,426.5L800.6,435.7L803.6,433.0L801.1,423.9Z" fill="#c5c5c5"/>
<path d="M800.6,435.7L804.2,444.8L807.2,441.8L803.6,433.0Z" fill="#c6c6c6"/>
<path d="M804.2,444.8L809.0,453.6L811.9,450.5L807.2,441.8Z" fill="#c8c8c8"/>
<path d="M809.0,453.6L814.9,462.2L817.7,458.8L811.9,450.5Z" fill="#c9c9c9"/>
<path d="M814.9,462.2L821.9,470.3L824.5,466.8L817.7,458.8Z" fill="#cbcbcb"/>
<path d="M821.9,470.3L829.8,478.0L832.3,474.3L824.5,466.8Z" fill="#cccccc"/>
<path d="M829.8,478.0L838.8,485.1L841.0,481.3L832.3,474.3Z" fill="#cdcdcd"/>
<path d="M838.8,485.1L848.6,491.7L850.7,487.7L841.0,481.3Z" fill="#cecece"/>
<path d="M848.6,491.7L859.2,497.7L861.1,493.5L850.7,487.7Z" fill="#cfcfcf"/>
<path d="M859.2,497.7L870.6,502.9L872.2,498.6L861.1,493.5Z" fill="#d0d0d0"/>
<path d="M870.6,502.9L882.6,507.4L884.0,503.0L872.2,498.6Z" fill="#d0d0d0"/>
<path d="M882.6,507.4L895.2,511.1L896.3,506.6L884.0,503.0Z" fill="#cfcfcf"/>
<path d="M895.2,511.1L908.2,514.0L909.0,509.5L896.3,506.6Z" fill="#cecece"/>
<path d="M908.2,514.0L921.5,516.0L922.0,511.5L909.0,509.5Z" fill="#cccccc"/>
<path d="M921.5,516.0L935.0,517.2L935.3,512.6L922.0,511.5Z" fill="#cbcbcb"/>
<path d="M935.0,517.2L948.7,517.5L948.6,512.9L935.3,512.6Z" fill="#c9c9c9"/>
<path d="M948.7,517.5L962.3,516.9L962.0,512.3L948.6,512.9Z" fill="#c8c8c8"/>
<path d="M962.3,516.9L975.8,515.4L975.2,510.9L962.0,512.3Z" fill="#c6c6c6"/>
<path d="M975.8,515.4L989.1,513.1L988.2,508.6L975.2,510.9Z" fill="#c4c4c4"/>
<path d="M989.1,513.1L1002.0,509.9L1000.8,505.5L988.2,508.6Z" fill="#c2c2c2"/>
<path d="M1002.0,509.9L1014.4,506.0L1013.0,501.6L1000.8,505.5Z" fill="#c0c0c0"/>
<path d="M1014.4,506.0L1026.3,501.2L1024.6,497.0L1013.0,501.6Z" fill="#bebebe"/>
<path d="M1026.3,501.2L1037.5,495.7L1035.5,491.6L1024.6,497.0Z" fill="#bcbcbc"/>
<path d="M1037.5,495.7L1047.9,489.6L1045.8,485.6L1035.5,491.6Z" fill="#b9b9b9"/>
<path d="M1047.9,489.6L1057.5,482.8L1055.2,479.0L1045.8,485.6Z" fill="#b7b7b7"/>
<path d="M1057.5,482.8L1066.2,475.4L1063.7,471.8L1055.2,479.0Z" fill="#b4b4b4"/>
<path d="M1066.2,475.4L1074.0,467.6L1071.3,464.1L1063.7,471.8Z" fill="#b2b2b2"/>
<path d="M1074.0,467.6L1080.7,459.3L1077.9,456.0L1071.3,464.1Z" fill="#afafaf"/>
<path d="M1080.7,459.3L1086.3,450.7L1083.4,447.6L1077.9,456.0Z" fill="#acacac"/>
<path d="M1086.3,450.7L1090.8,441.7L1087.8,438.9L1083.4,447.6Z" fill="#aaaaaa"/>
<path d="M1090.8,441.7L1094.2,432.6L1091.1,429.9L1087.8,438.9Z" fill="#a7a7a7"/>
<path d="M1094.2,432.6L1096.4,423.3L1093.3,420.8L1091.1,429.9Z" fill="#a5a5a5"/>
<path d="M1096.4,423.3L1097.5,414.0L1094.4,411.7L1093.3,420.8Z" fill="#a2a2a2"/>
<path d="M1097.5,414.0L1097.4,404.6L1094.3,402.5L1094.4,411.7Z" fill="#a0a0a0"/>
<path d="M1097.4,404.6L1096.2,395.3L1093.1,393.4L1094.3,402.5Z" fill="#9e9e9e"/>
<path d="M1096.2,395.3L1093.9,386.2L1090.9,384.5L1093.1,393.4Z" fill="#9c9c9c"/>
<path d="M1093.9,386.2L1090.5,377.3L1087.5,375.8L1090.9,384.5Z" fill="#9a9a9a"/>
<path d="M1090.5,377.3L1086.0,368.6L1083.1,367.3L1087.5,375.8Z" fill="#989898"/>
<path d="M1086.0,368.6L1080.5,360.3L1077.8,359.2L1083.1,367.3Z" fill="#979797"/>
<path d="M1077.8,359.2L1071.5,351.4L1068.7,350.4L1074.9,358.0Z" fill="#989898"/>
<path d="M1071.5,351.4L1064.2,344.1L1061.7,343.3L1068.7,350.4Z" fill="#979797"/>
<path d="M1064.2,344.1L1056.2,337.2L1053.8,336.6L1061.7,343.3Z" fill="#969696"/>
<path d="M1056.2,337.2L1047.4,330.9L1045.2,330.4L1053.8,336.6Z" fill="#969696"/>
<path d="M1047.4,330.9L1037.9,325.2L1035.9,324.8L1045.2,330.4Z" fill="#959595"/>
<path d="M1037.9,325.2L1027.7,320.1L1026.0,319.8L1035.9,324.8Z" fill="#959595"/>
<path d="M1027.7,320.1L1017.0,315.6L1015.5,315.4L1026.0,319.8Z" fill="#959595"/>
<path d="M1017.0,315.6L1005.8,311.7L1004.6,311.6L1015.5,315.4Z" fill="#959595"/>
<path d="M1005.8,311.7L994.2,308.6L993.2,308.6L1004.6,311.6Z" fill="#959595"/>
<path d="M994.2,308.6L982.3,306.2L981.6,306.2L993.2,308.6Z" fill="#969696"/>
<path d="M982.3,306.2L970.2,304.4L969.7,304.5L981.6,306.2Z" fill="#979797"/>
<path d="M970.2,304.4L957.9,303.5L957.6,303.6L969.7,304.5Z" fill="#989898"/>
<path d="M957.9,303.5L945.5,303.2L945.5,303.3L957.6,303.6Z" fill="#999999"/>
<path d="M945.5,303.2L933.1,303.7L933.4,303.8L945.5,303.3Z" fill="#9a9a9a"/>
<path d="M933.1,303.7L920.8,305.0L921.4,305.0L933.4,303.8Z" fill="#9c9c9c"/>
<path d="M920.8,305.0L908.7,306.9L909.5,306.9L921.4,305.0Z" fill="#9d9d9d"/>
<path d="M908.7,306.9L896.9,309.6L898.0,309.6L909.5,306.9Z" fill="#9f9f9f"/>
<path d="M896.9,309.6L885.4,313.0L886.7,312.9L898.0,309.6Z" fill="#a1a1a1"/>
<path d="M885.4,313.0L874.3,317.0L875.9,316.9L886.7,312.9Z" fill="#a4a4a4"/>
<path d="M874.3,317.0L863.8,321.8L865.5,321.5L875.9,316.9Z" fill="#a6a6a6"/>
<path d="M863.8,321.8L853.8,327.1L855.7,326.7L865.5,321.5Z" fill="#a9a9a9"/>
<path d="M853.8,327.1L844.4,333.1L846.6,332.5L855.7,326.7Z" fill="#acacac"/>
<path d="M844.4,333.1L835.8,339.5L838.2,338.9L846.6,332.5Z" fill="#afafaf"/>
<path d="M835.8,339.5L827.9,346.6L830.5,345.7L838.2,338.9Z" fill="#b2b2b2"/>
<path d="M827.9,346.6L820.9,354.0L823.7,353.0L830.5,345.7Z" fill="#b5b5b5"/>
<path d="M820.9,354.0L814.8,361.9L817.7,360.7L823.7,353.0Z" fill="#b8b8b8"/>
<path d="M814.8,361.9L809.7,370.2L812.7,368.8L817.7,360.7Z" fill="#bababa"/>
<path d="M809.7,370.2L805.6,378.7L808.7,377.2L812.7,368.8Z" fill="#bcbcbc"/>
<path d="M805.6,378.7L802.5,387.5L805.7,385.8L808.7,377.2Z" fill="#bebebe"/>
<path d="M802.5,387.5L800.5,396.5L803.7,394.6L805.7,385.8Z" fill="#c0c0c0"/>
<path d="M800.5,396.5L799.6,405.6L802.8,403.5L803.7,394.6Z" fill="#c1c1c1"/>
<path d="M799.6,405.6L799.8,414.8L803.0,412.4L802.8,403.5Z" fill="#c3c3c3"/>
<path d="M799.8,414.8L801.1,423.9L804.4,421.3L803.0,412.4Z" fill="#c5c5c5"/>
<path d="M801.1,423.9L803.6,433.0L806.8,430.2L804.4,421.3Z" fill="#c6c6c6"/>
<path d="M803.6,433.0L807.2,441.8L810.3,438.8L806.8,430.2Z" fill="#c8c8c8"/>
<path d="M807.2,441.8L811.9,450.5L814.9,447.3L810.3,438.8Z" fill="#cacaca"/>
<path d="M811.9,450.5L817.7,458.8L820.6,455.4L814.9,447.3Z" fill="#cbcbcb"/>
<path d="M817.7,458.8L824.5,466.8L827.2,463.2L820.6,455.4Z" fill="#cccccc"/>
<path d="M824.5,466.8L832.3,474.3L834.9,470.5L827.2,463.2Z" fill="#cdcdcd"/>
<path d="M832.3,474.3L841.0,481.3L843.4,477.3L834.9,470.5Z" fill="#cfcfcf"/>
<path d="M841.0,481.3L850.7,487.7L852.8,483.6L843.4,477.3Z" fill="#d0d0d0"/>
<path d="M850.7,487.7L861.1,493.5L863.0,489.3L852.8,483.6Z" fill="#d2d2d2"/>
<path d="M861.1,493.5L872.2,498.6L873.9,494.3L863.0,489.3Z" fill="#d3d3d3"/>
<path d="M872.2,498.6L884.0,503.0L885.4,498.5L873.9,494.3Z" fill="#d3d3d3"/>
<path d="M884.0,503.0L896.3,506.6L897.4,502.1L885.4,498.5Z" fill="#d2d2d2"/>
<path d="M896.3,506.6L909.0,509.5L909.8,504.8L897.4,502.1Z" fill="#d0d0d0"/>
<path d="M909.0,509.5L922.0,511.5L922.6,506.8L909.8,504.8Z" fill="#cecece"/>
<path d="M922.0,511.5L935.3,512.6L935.5,507.9L922.6,506.8Z" fill="#cccccc"/>
<path d="M935.3,512.6L948.6,512.9L948.6,508.2L935.5,507.9Z" fill="#cbcbcb"/>
<path d="M948.6,512.9L962.0,512.3L961.6,507.6L948.6,508.2Z" fill="#c9c9c9"/>
<path d="M962.0,512.3L975.2,510.9L974.5,506.2L961.6,507.6Z" fill="#c8c8c8"/>
<path d="M975.2,510.9L988.2,508.6L987.2,504.0L974.5,506.2Z" fill="#c6c6c6"/>
<path d="M988.2,508.6L1000.8,505.5L999.5,501.0L987.2,504.0Z" fill="#c4c4c4"/>
<path d="M1000.8,505.5L1013.0,501.6L1011.4,497.2L999.5,501.0Z" fill="#c2c2c2"/>
<path d="M1013.0,501.6L1024.6,497.0L1022.8,492.6L1011.4,497.2Z" fill="#c0c0c0"/>
<path d="M1024.6,497.0L1035.5,491.6L1033.5,487.4L1022.8,492.6Z" fill="#bebebe"/>
<path d="M1035.5,491.6L1045.8,485.6L1043.5,481.6L1033.5,487.4Z" fill="#bbbbbb"/>
<path d="M1045.8,485.6L1055.2,479.0L1052.7,475.1L1043.5,481.6Z" fill="#b9b9b9"/>
<path d="M1055.2,479.0L1063.7,471.8L1061.0,468.1L1052.7,475.1Z" fill="#b6b6b6"/>
<path d="M1063.7,471.8L1071.3,464.1L1068.5,460.6L1061.0,468.1Z" fill="#b4b4b4"/>
<path d="M1071.3,464.1L1077.9,456.0L1074.9,452.7L1068.5,460.6Z" fill="#b1b1b1"/>
<path d="M1077.9,456.0L1083.4,447.6L1080.3,444.4L1074.9,452.7Z" fill="#afafaf"/>
<path d="M1083.4,447.6L1087.8,438.9L1084.6,435.9L1080.3,444.4Z" fill="#acacac"/>
<path d="M1087.8,438.9L1091.1,429.9L1087.9,427.2L1084.6,435.9Z" fill="#aaaaaa"/>
<path d="M1091.1,429.9L1093.3,420.8L1090.0,418.3L1087.9,427.2Z" fill="#a7a7a7"/>
<path d="M1093.3,420.8L1094.4,411.7L1091.1,409.4L1090.0,418.3Z" fill="#a5a5a5"/>
<path d="M1094.4,411.7L1094.3,402.5L1091.0,400.4L1091.1,409.4Z" fill="#a3a3a3"/>
<path d="M1094.3,402.5L1093.1,393.4L1089.9,391.5L1091.0,400.4Z" fill="#a1a1a1"/>
<path d="M1093.1,393.4L1090.9,384.5L1087.7,382.8L1089.9,391.5Z" fill="#9f9f9f"/>
<path d="M1090.9,384.5L1087.5,375.8L1084.4,374.3L1087.7,382.8Z" fill="#9d9d9d"/>
<path d="M1087.5,375.8L1083.1,367.3L1080.1,366.0L1084.4,374.3Z" fill="#9b9b9b"/>
<path d="M1083.1,367.3L1077.8,359.2L1074.9,358.0L1080.1,366.0Z" fill="#9a9a9a"/>
<path d="M1074.9,358.0L1068.7,350.4L1065.8,349.6L1071.8,357.0Z" fill="#9c9c9c"/>
<path d="M1068.7,350.4L1061.7,343.3L1059.0,342.6L1065.8,349.6Z" fill="#9a9a9a"/>
<path d="M1061.7,343.3L1053.8,336.6L1051.3,336.0L1059.0,342.6Z" fill="#9a9a9a"/>
<path d="M1053.8,336.6L1045.2,330.4L1042.9,330.0L1051.3,336.0Z" fill="#999999"/>
<path d="M1045.2,330.4L1035.9,324.8L1033.8,324.5L1042.9,330.0Z" fill="#989898"/>
<path d="M1035.9,324.8L1026.0,319.8L1024.1,319.6L1033.8,324.5Z" fill="#989898"/>
<path d="M1026.0,319.8L1015.5,315.4L1013.9,315.3L1024.1,319.6Z" fill="#989898"/>
<path d="M1015.5,315.4L1004.6,311.6L1003.2,311.7L1013.9,315.3Z" fill="#989898"/>
<path d="M1004.6,311.6L993.2,308.6L992.1,308.7L1003.2,311.7Z" fill="#989898"/>
<path d="M993.2,308.6L981.6,306.2L980.7,306.3L992.1,308.7Z" fill="#999999"/>
<path d="M981.6,306.2L969.7,304.5L969.1,304.7L980.7,306.3Z" fill="#9a9a9a"/>
<path d="M969.7,304.5L957.6,303.6L957.4,303.8L969.1,304.7Z" fill="#9b9b9b"/>
<path d="M957.6,303.6L945.5,303.3L945.5,303.5L957.4,303.8Z" fill="#9c9c9c"/>
<path d="M945.5,303.3L933.4,303.8L933.7,304.0L945.5,303.5Z" fill="#9d9d9d"/>
<path d="M933.4,303.8L921.4,305.0L922.0,305.2L933.7,304.0Z" fill="#9f9f9f"/>
<path d="M921.4,305.0L909.5,306.9L910.4,307.1L922.0,305.2Z" fill="#a0a0a0"/>
<path d="M909.5,306.9L898.0,309.6L899.1,309.6L910.4,307.1Z" fill="#a2a2a2"/>
<path d="M898.0,309.6L886.7,312.9L888.1,312.9L899.1,309.6Z" fill="#a4a4a4"/>
<path d="M886.7,312.9L875.9,316.9L877.5,316.8L888.1,312.9Z" fill="#a6a6a6"/>
<path d="M875.9,316.9L865.5,321.5L867.4,321.3L877.5,316.8Z" fill="#a8a8a8"/>
<path d="M865.5,321.5L855.7,326.7L857.9,326.4L867.4,321.3Z" fill="#ababab"/>
<path d="M855.7,326.7L846.6,332.5L848.9,332.1L857.9,326.4Z" fill="#adadad"/>
<path d="M846.6,332.5L838.2,338.9L840.7,338.3L848.9,332.1Z" fill="#b0b0b0"/>
<path d="M838.2,338.9L830.5,345.7L833.2,344.9L840.7,338.3Z" fill="#b3b3b3"/>
<path d="M830.5,345.7L823.7,353.0L826.6,352.1L833.2,344.9Z" fill="#b6b6b6"/>
<path d="M823.7,353.0L817.7,360.7L820.8,359.6L826.6,352.1Z" fill="#b9b9b9"/>
<path d="M817.7,360.7L812.7,368.8L815.9,367.5L820.8,359.6Z" fill="#bbbbbb"/>
<path d="M812.7,368.8L808.7,377.2L811.9,375.6L815.9,367.5Z" fill="#bdbdbd"/>
<path d="M808.7,377.2L805.7,385.8L809.0,384.0L811.9,375.6Z" fill="#bfbfbf"/>
<path d="M805.7,385.8L803.7,394.6L807.1,392.6L809.0,384.0Z" fill="#c1c1c1"/>
<path d="M803.7,394.6L802.8,403.5L806.3,401.3L807.1,392.6Z" fill="#c2c2c2"/>
<path d="M802.8,403.5L803.0,412.4L806.5,410.0L806.3,401.3Z" fill="#c4c4c4"/>
<path d="M803.0,412.4L804.4,421.3L807.8,418.7L806.5,410.0Z" fill="#c6c6c6"/>
<path d="M804.4,421.3L806.8,430.2L810.2,427.3L807.8,418.7Z" fill="#c8c8c8"/>
<path d="M806.8,430.2L810.3,438.8L813.6,435.8L810.2,427.3Z" fill="#cacaca"/>
<path d="M810.3,438.8L814.9,447.3L818.1,444.0L813.6,435.8Z" fill="#cbcbcb"/>
<path d="M814.9,447.3L820.6,455.4L823.6,451.9L818.1,444.0Z" fill="#cdcdcd"/>
<path d="M820.6,455.4L827.2,463.2L830.2,459.5L823.6,451.9Z" fill="#cecece"/>
<path d="M827.2,463.2L834.9,470.5L837.6,466.6L830.2,459.5Z" fill="#cfcfcf"/>
<path d="M834.9,470.5L843.4,477.3L846.0,473.3L837.6,466.6Z" fill="#d0d0d0"/>
<path d="M843.4,477.3L852.8,483.6L855.1,479.4L846.0,473.3Z" fill="#d2d2d2"/>
<path d="M852.8,483.6L863.0,489.3L865.1,484.9L855.1,479.4Z" fill="#d5d5d5"/>
<path d="M863.0,489.3L873.9,494.3L875.7,489.8L865.1,484.9Z" fill="#d7d7d7"/>
<path d="M873.9,494.3L885.4,498.5L886.9,493.9L875.7,489.8Z" fill="#d7d7d7"/>
<path d="M885.4,498.5L897.4,502.1L898.6,497.4L886.9,493.9Z" fill="#d6d6d6"/>
<path d="M897.4,502.1L909.8,504.8L910.7,500.0L898.6,497.4Z" fill="#d3d3d3"/>
<path d="M909.8,504.8L922.6,506.8L923.2,501.9L910.7,500.0Z" fill="#d1d1d1"/>
<path d="M922.6,506.8L935.5,507.9L935.8,503.0L923.2,501.9Z" fill="#cecece"/>
<path d="M935.5,507.9L948.6,508.2L948.5,503.3L935.8,503.0Z" fill="#cdcdcd"/>
<path d="M948.6,508.2L961.6,507.6L961.2,502.7L948.5,503.3Z" fill="#cbcbcb"/>
<path d="M961.6,507.6L974.5,506.2L973.8,501.4L961.2,502.7Z" fill="#c9c9c9"/>
<path d="M974.5,506.2L987.2,504.0L986.2,499.2L973.8,501.4Z" fill="#c8c8c8"/>
<path d="M987.2,504.0L999.5,501.0L998.2,496.3L986.2,499.2Z" fill="#c6c6c6"/>
<path d="M999.5,501.0L1011.4,497.2L1009.8,492.6L998.2,496.3Z" fill="#c4c4c4"/>
<path d="M1011.4,497.2L1022.8,492.6L1020.9,488.2L1009.8,492.6Z" fill="#c2c2c2"/>
<path d="M1022.8,492.6L1033.5,487.4L1031.3,483.1L1020.9,488.2Z" fill="#c0c0c0"/>
<path d="M1033.5,487.4L1043.5,481.6L1041.1,477.4L1031.3,483.1Z" fill="#bdbdbd"/>
<path d="M1043.5,481.6L1052.7,475.1L1050.1,471.1L1041.1,477.4Z" fill="#bbbbbb"/>
<path d="M1052.7,475.1L1061.0,468.1L1058.2,464.3L1050.1,471.1Z" fill="#b9b9b9"/>
<path d="M1061.0,468.1L1068.5,460.6L1065.4,457.0L1058.2,464.3Z" fill="#b6b6b6"/>
<path d="M1068.5,460.6L1074.9,452.7L1071.7,449.3L1065.4,457.0Z" fill="#b4b4b4"/>
<path d="M1074.9,452.7L1080.3,444.4L1077.0,441.2L1071.7,449.3Z" fill="#b1b1b1"/>
<path d="M1080.3,444.4L1084.6,435.9L1081.2,432.9L1077.0,441.2Z" fill="#afafaf"/>
<path d="M1084.6,435.9L1087.9,427.2L1084.4,424.4L1081.2,432.9Z" fill="#acacac"/>
<path d="M1087.9,427.2L1090.0,418.3L1086.6,415.8L1084.4,424.4Z" fill="#aaaaaa"/>
<path d="M1090.0,418.3L1091.1,409.4L1087.6,407.0L1086.6,415.8Z" fill="#a8a8a8"/>
<path d="M1091.1,409.4L1091.0,400.4L1087.6,398.3L1087.6,407.0Z" fill="#a6a6a6"/>
<path d="M1091.0,400.4L1089.9,391.5L1086.4,389.7L1087.6,398.3Z" fill="#a4a4a4"/>
<path d="M1089.9,391.5L1087.7,382.8L1084.3,381.1L1086.4,389.7Z" fill="#a2a2a2"/>
<path d="M1087.7,382.8L1084.4,374.3L1081.1,372.8L1084.3,381.1Z" fill="#a0a0a0"/>
<path d="M1084.4,374.3L1080.1,366.0L1077.0,364.7L1081.1,372.8Z" fill="#9e9e9e"/>
<path d="M1080.1,366.0L1074.9,358.0L1071.8,357.0L1077.0,364.7Z" fill="#9d9d9d"/>
</g>
<path d="M1002.6,483 Q1006,481.5 1009.6,484 L1019.2,509 Q1021.5,517 1018.5,519.8 Q1014.5,521.5 1011,516 L1003.2,496 Q1001.8,489 1002.6,483 Z" fill="#dedede"/>
<path d="M1009.6,484.5 Q1013,491 1019.5,510.5 L1018.8,513.5 Q1014.5,499 1008.8,487.5 Z" fill="#8c8c8c"/>
<path d="M1003.8,478.5 L1001,489 L1003.4,492 Z" fill="#6a6a6a"/>
<g transform="matrix(2.3947,-0.7885,0.8631,1.6272,552.86,417.54)"><text x="0" y="0" font-size="10.6" font-weight="bold" fill="#e8714c" stroke="#e8714c" stroke-width="0.2" textLength="52" lengthAdjust="spacing">Sin título</text></g>
<g transform="matrix(2.3167,-0.7605,0.9214,1.5690,680.60,367.22)" fill="none" stroke="#a0a0a4" stroke-width="0.5"><rect x="0" y="0" width="7.4" height="5.6" rx="0.8"/><path d="M2.2,4.4 L6.4,-1.4 Q7,-2 7.6,-1.4 Q8.2,-0.8 7.6,-0.2 L3.4,5.6 Z" fill="#545359"/></g>
<path d="M1387.76,617.54 L1387.24,616.47 L1386.59,615.44 L1385.83,614.50 L1384.97,613.65 L1384.05,612.92 L1383.07,612.33 L1382.07,611.89 L1381.07,611.61 L1380.09,611.50 L1379.16,611.56 L1378.30,611.79 L1377.54,612.19 L1376.88,612.74 L1376.35,613.43 L1375.96,614.25 L1375.71,615.17 L1375.63,616.17 L1375.70,617.23 L1375.92,618.32 L1376.30,619.41 L1376.82,620.49 L1377.47,621.51 L1378.23,622.46 L1379.08,623.32 L1380.01,624.05 L1380.99,624.65 L1381.99,625.09 L1383.00,625.37 L1383.98,625.48 L1384.91,625.42 L1385.78,625.19 L1386.55,624.79 L1387.21,624.23 L1387.74,623.54 L1388.13,622.72 L1388.37,621.79 L1388.45,620.79 L1388.37,619.72 L1388.14,618.63 Z M1404.05,621.11 L1396.83,604.92 L1392.23,610.60" fill="none" stroke="#e8714c" stroke-width="5.2" stroke-linejoin="miter"/>
<g transform="matrix(2.1138,-0.6996,1.1110,1.4421,1090.86,253.89)" fill="none" stroke="#b4b4b8" stroke-width="0.42" stroke-linecap="round" stroke-linejoin="round">
<rect x="0" y="0" width="14.6" height="14.6" rx="1.6"/>
<path d="M2.5,3.1 L11.3,11.8 M2.5,11.9 L11.6,3.5"/>
</g>
<g transform="matrix(2.1325,-0.7161,1.1375,1.4764,1114.58,284.68)" fill="none" stroke="#b4b4b8" stroke-width="0.42" stroke-linecap="round" stroke-linejoin="round">
<rect x="0" y="0" width="14.6" height="14.6" rx="1.6"/>
<path d="M7.6,1.6 L11.8,5.8 L7.6,10 L3.4,5.8 Z M6.4,7.2 V5.6 Q7.6,3.6 8.8,5.6 V7.2 M6.4,6.3 H8.8 M2.4,12 H12.6 M5.2,9.2 L3.4,11.2 M3.3,10.1 V11.3 H4.5"/>
</g>
<g transform="matrix(2.1515,-0.7332,1.1649,1.5120,1138.87,316.21)" fill="none" stroke="#b4b4b8" stroke-width="0.42" stroke-linecap="round" stroke-linejoin="round">
<rect x="0" y="0" width="14.6" height="14.6" rx="1.6"/>
<rect x="2.2" y="2.2" width="5.6" height="2.3" rx="1.15"/><rect x="8.8" y="2.2" width="3.6" height="5.4" rx="0.5"/><circle cx="3.3" cy="6.6" r="1.05"/><circle cx="6" cy="6.6" r="1.05"/><rect x="2.2" y="8.6" width="10.2" height="3.8" rx="0.6"/>
</g>
<g transform="matrix(2.1707,-0.7509,1.1933,1.5488,1163.74,348.50)" fill="none" stroke="#b4b4b8" stroke-width="0.42" stroke-linecap="round" stroke-linejoin="round">
<rect x="0" y="0" width="14.6" height="14.6" rx="1.6"/>
<rect x="3" y="6.6" width="8.8" height="5.6" rx="0.7"/><path d="M4.4,6.6 V5 Q4.4,2.2 7.2,2.2 Q10,2.2 10,4.4"/>
</g>
<g transform="matrix(2.1903,-0.7692,1.2227,1.5870,1189.23,381.58)" fill="none" stroke="#b4b4b8" stroke-width="0.42" stroke-linecap="round" stroke-linejoin="round">
<rect x="0" y="0" width="14.6" height="14.6" rx="1.6"/>
<path d="M2.2,4.8 H12.4 M2.2,9.8 H12.4"/><rect x="3.6" y="3.4" width="2.6" height="2.8" rx="1.2"/><rect x="8.2" y="8.4" width="2.6" height="2.8" rx="1.2"/>
</g>
<g transform="matrix(2.2102,-0.7883,1.2533,1.6267,1215.35,415.48)" fill="none" stroke="#b4b4b8" stroke-width="0.42" stroke-linecap="round" stroke-linejoin="round">
<rect x="0" y="0" width="14.6" height="14.6" rx="1.6"/>
<path d="M2.6,2.8 H12 M7.3,3.2 V12.2 M3.8,6.8 L7.3,3.2 L10.8,6.8"/>
</g>
<g transform="translate(495,93)" fill="none" stroke="#d0d0d0" stroke-width="1.3" stroke-linejoin="round" stroke-linecap="round"><path d="M18.4,0.5 L36.5,8 L18.4,15.3 L0.5,8 Z M0.5,8 V28.6 L18.4,36.5 M18.4,15.3 V36.5 M36.5,8 V21.5 M18.4,36.5 L21.5,35.2"/><rect x="24.3" y="24.3" width="12.4" height="12.4" rx="1.5"/><path d="M30.5,27.3 V33.7 M27.3,30.5 H33.7"/></g>
<g transform="translate(547,93)" fill="none" stroke="#d0d0d0" stroke-width="1.3" stroke-linejoin="round" stroke-linecap="round"><path d="M22,36.5 H1.5 Q0.5,36.5 0.5,35.5 V1.5 Q0.5,0.5 1.5,0.5 H35.5 Q36.5,0.5 36.5,1.5 V22"/><path d="M9.3,3 V34 M18.2,3 V34 M27.1,3 V21.5 M3,9.9 H34 M3,18.8 H34 M3,27.3 H21.5" stroke-width="2.2"/><rect x="24.3" y="24.3" width="12.4" height="12.4" rx="1.5"/><path d="M30.5,27.3 V33.7 M27.3,30.5 H33.7"/></g>
<g transform="translate(599,93)" fill="none" stroke="#d0d0d0" stroke-width="1.3" stroke-linejoin="round" stroke-linecap="round"><path d="M20.8,0.5 L36.5,15.8 L20.8,31.5 L5,15.8 Z M0.5,36.6 H36.5 M7.9,22.8 L1.5,32 M1.5,26 V32 H7.5"/><path d="M17.2,21 V14.5 Q17.2,10 20.8,10 Q24.4,10 24.4,14.5 V21 M17.2,16.5 H24.4" stroke-width="1.6"/></g>
<g transform="translate(651,93)" fill="none" stroke="#d0d0d0" stroke-width="1.3" stroke-linejoin="round" stroke-linecap="round"><rect x="0.5" y="0.5" width="36" height="36" rx="1.5"/><rect x="4.4" y="4" width="16.8" height="6.9" rx="3.4"/><rect x="23.2" y="4" width="9.8" height="16.8" rx="1"/><circle cx="7.3" cy="16.8" r="3.4"/><circle cx="17.2" cy="16.8" r="3.4"/><rect x="4" y="22.8" width="29" height="10.2" rx="1"/></g>
<g transform="translate(711,93)" fill="none" stroke="#55575e" stroke-width="1.3" stroke-linejoin="round" stroke-linecap="round"><circle cx="7.5" cy="7.9" r="7.4"/><circle cx="28.8" cy="7.9" r="7.4"/><circle cx="7.5" cy="28.7" r="7.4"/><circle cx="28.8" cy="28.7" r="7.4"/><path d="M18.2,0 V37 M0,18.3 H37" stroke-dasharray="3 2"/></g>
<g transform="translate(763,93)" fill="none" stroke="#55575e" stroke-width="1.3" stroke-linejoin="round" stroke-linecap="round"><path d="M15.5,15.5 H0.5 V8 Q0.5,0.5 8,0.5 H15.5 Z M21.5,15.5 H36.5 V8 Q36.5,0.5 29,0.5 H21.5 Z M15.5,21.5 H0.5 V29 Q0.5,36.5 8,36.5 H15.5 Z M21.5,21.5 H36.5 V29 Q36.5,36.5 29,36.5 H21.5 Z"/><path d="M18.5,0 V37 M0,18.5 H37" stroke-dasharray="3 2"/></g>
<g transform="translate(815,93)" fill="none" stroke="#55575e" stroke-width="1.3" stroke-linejoin="round" stroke-linecap="round"><rect x="0.5" y="0.3" width="36" height="2.6" rx="1.3"/><rect x="0.5" y="7" width="36" height="3.2" rx="1.6"/><rect x="0.5" y="14.6" width="36" height="3.4" rx="1.7"/><rect x="0.5" y="22.9" width="36" height="3.6" rx="1.8"/><rect x="0.5" y="31.6" width="36" height="3.8" rx="1.9"/></g>
<rect x="876.5" y="93" width="1.4" height="37" fill="#6f7076"/>
<g transform="translate(899,93)" fill="none" stroke="#55575e" stroke-width="1.3" stroke-linejoin="round" stroke-linecap="round"><rect x="11.9" y="11.3" width="14.2" height="14.4" rx="1.2"/><path d="M18.8,0.5 V8 M15.6,3.6 L18.8,0.5 L22,3.6 M18.8,29 V36.5 M15.6,33.4 L18.8,36.5 L22,33.4 M0.5,18.5 H8 M3.6,15.3 L0.5,18.5 L3.6,21.7 M29.5,18.5 H37 M33.9,15.3 L37,18.5 L33.9,21.7"/></g>
<g transform="translate(951,93)" fill="none" stroke="#55575e" stroke-width="1.3" stroke-linejoin="round" stroke-linecap="round"><rect x="11.3" y="11.3" width="14.4" height="14.4" rx="1.2"/><path d="M4,7 A18,18 0 1 1 1.5,24" /><path d="M1,22 A18,18 0 0 0 14,36" stroke-dasharray="2.5 2"/><path d="M2.2,1.5 L2.5,8 L9,8"/></g>
<g transform="translate(1003,93)" fill="none" stroke="#55575e" stroke-width="1.3" stroke-linejoin="round" stroke-linecap="round"><rect x="0.5" y="0.5" width="36" height="36" stroke-dasharray="3 2.4"/><rect x="11.5" y="11.3" width="14.2" height="14.4" rx="1.2"/><path d="M1.5,1.5 L10.5,10.5 M1.5,8 V1.5 H8 M35.5,1.5 L26.5,10.5 M29,1.5 H35.5 V8 M1.5,35.5 L10.5,26.5 M1.5,29 V35.5 H8 M35.5,35.5 L26.5,26.5 M35.5,29 V35.5 H29"/></g>
<g transform="translate(1055,93)" fill="none" stroke="#55575e" stroke-width="1.3" stroke-linejoin="round" stroke-linecap="round"><path d="M20.8,0.5 L36.5,15.8 L20.8,31.5 L5,15.8 Z M0.5,36.6 H36.5 M7.9,22.8 L1.5,32 M1.5,26 V32 H7.5"/></g>
<g transform="translate(1107,93)" fill="none" stroke="#55575e" stroke-width="1.3" stroke-linejoin="round" stroke-linecap="round"><path d="M0.5,15 V2 Q0.5,0.5 2,0.5 H35 Q36.5,0.5 36.5,2 V15 M0.5,22 V35 Q0.5,36.5 2,36.5 H35 Q36.5,36.5 36.5,35 V22"/><path d="M0.5,18.5 H36.5" stroke-dasharray="3 2.4"/></g>
<g transform="translate(1159,93)" fill="none" stroke="#55575e" stroke-width="1.3" stroke-linejoin="round" stroke-linecap="round"><rect x="9.9" y="0.5" width="26.6" height="26.6" rx="1.5"/><rect x="0.5" y="9.9" width="26.6" height="26.6" rx="1.5"/><path d="M11,24 L23,12 M11,19 L18,12 M14,26 L26,14 M19,26 L26,19" stroke-width="1"/></g>
<g transform="translate(1211,93)" fill="none" stroke="#55575e" stroke-width="1.3" stroke-linejoin="round" stroke-linecap="round"><path d="M0.5,36.5 V0.5 H36.5 V20 M0.5,12 H22 V30 M3.5,14 V36.5 M7,14 V36.5 M10.5,14 V36.5 M13.5,14 V36.5 M0.5,36.5 H13.5"/><path d="M27,36.5 Q26,33 28.5,31 L36,20 M30,34 L37,24"/></g>
<g transform="translate(1263,93)" fill="none" stroke="#55575e" stroke-width="1.3" stroke-linejoin="round" stroke-linecap="round"><path d="M0.5,36.5 V2 Q0.5,0.5 2,0.5 H35 Q36.5,0.5 36.5,2 V20 M0.5,36.5 H20 M34.5,30 V36.5 H30"/><path d="M10.5,2 L12,6 L10,10 L12,14 L10,18 L12,22 L10,26 L12,30 L10,34" stroke-dasharray="1.2 1.8"/><path d="M22,36.5 Q21,33 23.5,31 L36,21"/></g>
<g transform="translate(1315,93)" fill="none" stroke="#d0d0d0" stroke-width="1.6" stroke-linejoin="round" stroke-linecap="round"><path d="M2,3 Q0.5,3 0.5,4.5 V8.5 Q0.5,10 2,10 H12.5 V34 Q12.5,35.5 14,35.5 H20.5 Q22,35.5 22,34 V10 H33 Q34.5,10 34.5,8.5 V4.5 Q34.5,3 33,3 Z"/><path d="M34.5,5 Q37,5 37,7.5 V10.5 Q37,12.5 35,12.5 H24.5 V36 Q24.5,37.5 22.5,37.5 H16 Q14,37.5 14,36" stroke-width="1.1"/></g>
<g transform="translate(1367,93)" fill="none" stroke="#55575e" stroke-width="1.3" stroke-linejoin="round" stroke-linecap="round"><path d="M0.5,5.5 L14,0.5 H30 V3 L36,5 Q37,6 35.5,7 L30,8 V10 Q21,11 14,8 H2.5 Q0.5,8 0.5,6 Z M0.5,20 L14,26 H30 V23 L36,22 Q37,21 35.5,20 L30,19 V17.5 H2 Q0.5,17.5 0.5,19 Z"/><circle cx="7" cy="13.8" r="4"/><path d="M17.5,8 V37 M24.5,8 V37 M17.5,37 H24.5 M21,12 H24 M21,15 H24 M21,30 H24 M21,33 H24"/></g>
<rect x="1428.5" y="93" width="1.4" height="37" fill="#6f7076"/>
<g transform="translate(1451,93)" fill="none" stroke="#d0d0d0" stroke-width="1.3" stroke-linejoin="round" stroke-linecap="round"><rect x="0.5" y="0.5" width="36" height="36" rx="1.2"/><path d="M18.5,0.5 V6 A3.3,3.3 0 1 1 18.5,12 V18.5 H12 A3.3,3.3 0 1 0 6,18.5 H0.5 M18.5,18.5 H24.5 A3.3,3.3 0 1 0 30.5,18.5 H36.5 M18.5,18.5 V24.5 A3.3,3.3 0 1 0 18.5,30.5 V36.5"/></g>
<path d="M25.9,898.4 L98.5,873.8 L133.6,927.4 L133.6,976.8 L61.2,1006.6 L25.9,947 Z" fill="#3b3b3d"/>
<path d="M50.1,890.2 L85.7,944.3 M37.8,916.4 L110.4,891.8 M74.3,882.0 L109.9,936.1 M49.6,934.5 L122.2,909.9" stroke="#48484b" stroke-width="0.7" fill="none"/>
<text transform="translate(54,926) rotate(-22.5)" font-size="11.5" fill="#dcdcdc" textLength="59" lengthAdjust="spacingAndGlyphs">Superior</text>
<text transform="translate(75,977.5) rotate(-25.5) skewX(-18)" font-size="11" fill="#dcdcdc" textLength="48" lengthAdjust="spacingAndGlyphs">Frontal</text>
<text transform="translate(31,936) rotate(61) skewX(61) scale(1,0.485)" font-size="8.5" fill="#d8d8d8" textLength="50" lengthAdjust="spacingAndGlyphs">Izquierda</text>
<path d="M60.6,1005.5 L26.5,953" stroke="#6fbf6f" stroke-width="2.6"/><path d="M23.5,947.5 L34.5,954 L26.5,959.5 Z" fill="#6fbf6f"/>
<path d="M61.5,1005.5 V957" stroke="#8585d6" stroke-width="2.6"/><path d="M61.5,947 L67.5,959.5 L55.5,959.5 Z" fill="#8585d6"/>
<path d="M62,1006.2 L132,980.8" stroke="#d48383" stroke-width="2.6"/><path d="M139,978.3 L130.5,986 L127.5,977 Z" fill="#d48383"/>
<text x="11.5" y="942.5" font-size="15" fill="#6fbf6f">y</text>
<text x="57.5" y="942" font-size="13" fill="#8585d6">z</text>
<text x="150" y="978" font-size="14" fill="#d48383">x</text>
</svg>
</body></html>
